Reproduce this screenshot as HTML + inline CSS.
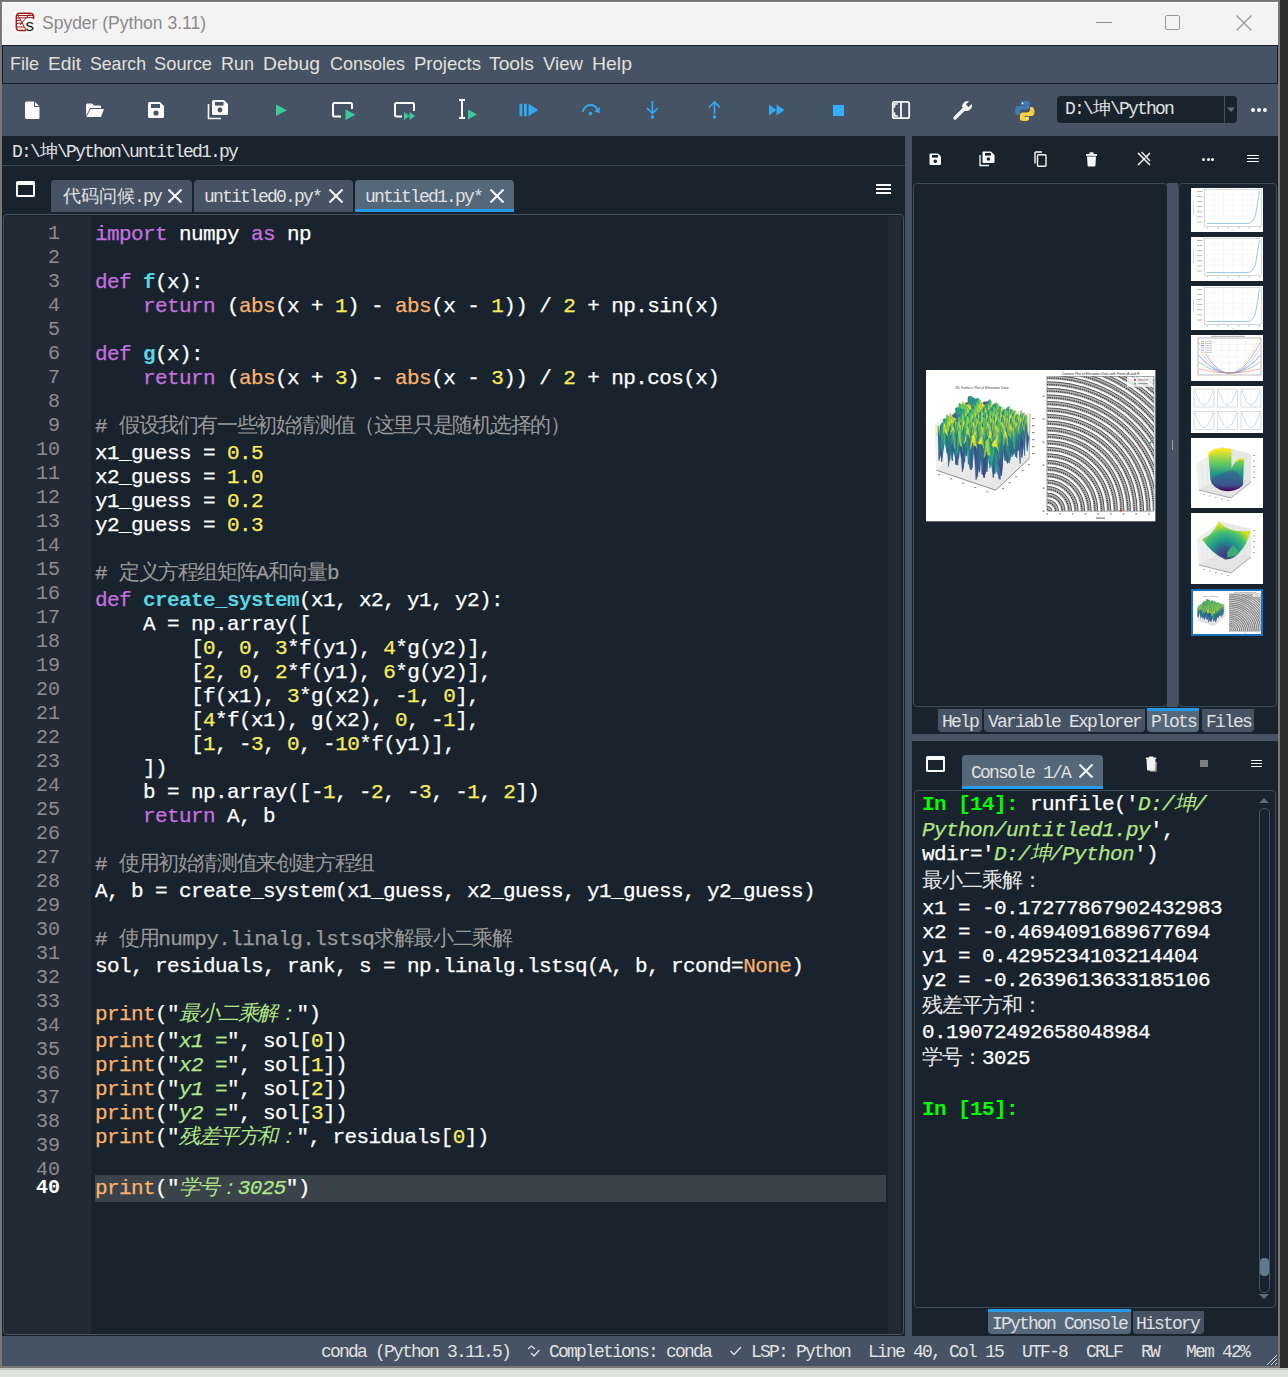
<!DOCTYPE html><html><head><meta charset="utf-8"><style>
*{margin:0;padding:0;box-sizing:border-box}
html,body{width:1288px;height:1377px;overflow:hidden;background:#dfe2df;position:relative;font-family:"Liberation Sans",sans-serif}
.a{position:absolute}
.m{font-family:"Liberation Mono",monospace;white-space:pre}
.cj{display:inline-block;text-align:center;line-height:1px;overflow:visible;-webkit-text-stroke:0}
.code{position:absolute;left:95px;font-family:"Liberation Mono",monospace;font-size:21px;letter-spacing:-0.6px;line-height:24px;white-space:pre;color:#fff;-webkit-text-stroke:0.25px currentColor}
.ln{position:absolute;right:0;font-family:"Liberation Mono",monospace;font-size:20px;line-height:24px;color:#8c8c8c;white-space:pre}
.ser{font-family:"Liberation Mono",monospace;white-space:pre;color:#e0e1e3;font-size:18px;letter-spacing:-1.8px;line-height:20px}
svg{position:absolute;overflow:visible}
</style></head><body>
<svg width="0" height="0" style="position:absolute"><defs><g id="surf" stroke-width="0.3"><path d="M43.1 35.9L45.0 41.4L46.2 43.2L44.2 48.3Z" fill="#228d8c" stroke="#228d8c" stroke-width="0.3"/><path d="M42.0 26.9L43.9 26.1L45.0 41.4L43.1 35.9Z" fill="#97d547" stroke="#97d547" stroke-width="0.3"/><path d="M45.0 41.4L47.0 42.0L48.1 43.9L46.2 43.2Z" fill="#219789" stroke="#219789" stroke-width="0.3"/><path d="M40.8 63.3L42.8 57.0L43.9 26.1L42.0 26.9Z" fill="#277f8d" stroke="#277f8d" stroke-width="0.3"/><path d="M43.9 26.1L45.9 26.7L47.0 42.0L45.0 41.4Z" fill="#85d24d" stroke="#85d24d" stroke-width="0.3"/><path d="M47.0 42.0L49.0 39.3L50.1 48.6L48.1 43.9Z" fill="#21908c" stroke="#21908c" stroke-width="0.3"/><path d="M39.7 32.4L41.7 36.5L42.8 57.0L40.8 63.3Z" fill="#2d6f8d" stroke="#2d6f8d" stroke-width="0.3"/><path d="M42.8 57.0L44.8 57.6L45.9 26.7L43.9 26.1Z" fill="#21938a" stroke="#21938a" stroke-width="0.3"/><path d="M45.9 26.7L47.9 28.3L49.0 39.3L47.0 42.0Z" fill="#93d548" stroke="#93d548" stroke-width="0.3"/><path d="M49.0 39.3L50.9 40.1L52.1 49.2L50.1 48.6Z" fill="#218f8c" stroke="#218f8c" stroke-width="0.3"/><path d="M38.6 34.9L40.6 32.5L41.7 36.5L39.7 32.4Z" fill="#f3e528" stroke="#f3e528" stroke-width="0.3"/><path d="M41.7 36.5L43.7 37.3L44.8 57.6L42.8 57.0Z" fill="#26808d" stroke="#26808d" stroke-width="0.3"/><path d="M44.8 57.6L46.7 62.7L47.9 28.3L45.9 26.7Z" fill="#24878c" stroke="#24878c" stroke-width="0.3"/><path d="M47.9 28.3L49.8 28.9L50.9 40.1L49.0 39.3Z" fill="#b7db3c" stroke="#b7db3c" stroke-width="0.3"/><path d="M50.9 40.1L52.9 48.2L54.0 42.1L52.1 49.2Z" fill="#218f8c" stroke="#218f8c" stroke-width="0.3"/><path d="M37.5 63.3L39.4 71.7L40.6 32.5L38.6 34.9Z" fill="#34608d" stroke="#34608d" stroke-width="0.3"/><path d="M40.6 32.5L42.5 33.1L43.7 37.3L41.7 36.5Z" fill="#f0e429" stroke="#f0e429" stroke-width="0.3"/><path d="M43.7 37.3L45.6 35.6L46.7 62.7L44.8 57.6Z" fill="#2a768d" stroke="#2a768d" stroke-width="0.3"/><path d="M46.7 62.7L48.7 62.9L49.8 28.9L47.9 28.3Z" fill="#26818d" stroke="#26818d" stroke-width="0.3"/><path d="M49.8 28.9L51.8 28.2L52.9 48.2L50.9 40.1Z" fill="#69c95a" stroke="#69c95a" stroke-width="0.3"/><path d="M52.9 48.2L54.9 60.9L56.0 34.5L54.0 42.1Z" fill="#287c8d" stroke="#287c8d" stroke-width="0.3"/><path d="M36.4 31.4L38.3 34.1L39.4 71.7L37.5 63.3Z" fill="#30698d" stroke="#30698d" stroke-width="0.3"/><path d="M39.4 71.7L41.4 72.7L42.5 33.1L40.6 32.5Z" fill="#38588b" stroke="#38588b" stroke-width="0.3"/><path d="M42.5 33.1L44.5 35.5L45.6 35.6L43.7 37.3Z" fill="#f3e528" stroke="#f3e528" stroke-width="0.3"/><path d="M45.6 35.6L47.6 36.6L48.7 62.9L46.7 62.7Z" fill="#2b738d" stroke="#2b738d" stroke-width="0.3"/><path d="M48.7 62.9L50.7 53.9L51.8 28.2L49.8 28.9Z" fill="#218f8c" stroke="#218f8c" stroke-width="0.3"/><path d="M51.8 28.2L53.8 30.0L54.9 60.9L52.9 48.2Z" fill="#219789" stroke="#219789" stroke-width="0.3"/><path d="M54.9 60.9L56.8 69.9L58.0 31.7L56.0 34.5Z" fill="#33618d" stroke="#33618d" stroke-width="0.3"/><path d="M35.2 45.4L37.2 41.5L38.3 34.1L36.4 31.4Z" fill="#bbdc3a" stroke="#bbdc3a" stroke-width="0.3"/><path d="M38.3 34.1L40.3 34.9L41.4 72.7L39.4 71.7Z" fill="#37598b" stroke="#37598b" stroke-width="0.3"/><path d="M41.4 72.7L43.4 68.6L44.5 35.5L42.5 33.1Z" fill="#365c8c" stroke="#365c8c" stroke-width="0.3"/><path d="M44.5 35.5L46.5 35.8L47.6 36.6L45.6 35.6Z" fill="#fde725" stroke="#fde725" stroke-width="0.3"/><path d="M47.6 36.6L49.6 43.4L50.7 53.9L48.7 62.9Z" fill="#29798d" stroke="#29798d" stroke-width="0.3"/><path d="M50.7 53.9L52.6 43.8L53.8 30.0L51.8 28.2Z" fill="#4bbb6b" stroke="#4bbb6b" stroke-width="0.3"/><path d="M53.8 30.0L55.7 33.0L56.8 69.9L54.9 60.9Z" fill="#2f6c8d" stroke="#2f6c8d" stroke-width="0.3"/><path d="M56.8 69.9L58.8 71.7L59.9 31.9L58.0 31.7Z" fill="#38578b" stroke="#38578b" stroke-width="0.3"/><path d="M34.1 55.1L36.1 62.0L37.2 41.5L35.2 45.4Z" fill="#25858c" stroke="#25858c" stroke-width="0.3"/><path d="M37.2 41.5L39.2 41.9L40.3 34.9L38.3 34.1Z" fill="#e9e32b" stroke="#e9e32b" stroke-width="0.3"/><path d="M40.3 34.9L42.3 34.3L43.4 68.6L41.4 72.7Z" fill="#33618d" stroke="#33618d" stroke-width="0.3"/><path d="M43.4 68.6L45.3 70.3L46.5 35.8L44.5 35.5Z" fill="#31678d" stroke="#31678d" stroke-width="0.3"/><path d="M46.5 35.8L48.4 32.8L49.6 43.4L47.6 36.6Z" fill="#ccde35" stroke="#ccde35" stroke-width="0.3"/><path d="M49.6 43.4L51.5 54.8L52.6 43.8L50.7 53.9Z" fill="#228d8c" stroke="#228d8c" stroke-width="0.3"/><path d="M52.6 43.8L54.6 39.4L55.7 33.0L53.8 30.0Z" fill="#c3dd38" stroke="#c3dd38" stroke-width="0.3"/><path d="M55.7 33.0L57.7 34.3L58.8 71.7L56.8 69.9Z" fill="#38588b" stroke="#38588b" stroke-width="0.3"/><path d="M58.8 71.7L60.8 67.7L61.9 31.3L59.9 31.9Z" fill="#345f8d" stroke="#345f8d" stroke-width="0.3"/><path d="M33.0 33.2L35.0 34.3L36.1 62.0L34.1 55.1Z" fill="#21a086" stroke="#21a086" stroke-width="0.3"/><path d="M36.1 62.0L38.1 63.3L39.2 41.9L37.2 41.5Z" fill="#26828d" stroke="#26828d" stroke-width="0.3"/><path d="M39.2 41.9L41.1 44.9L42.3 34.3L40.3 34.9Z" fill="#d6e031" stroke="#d6e031" stroke-width="0.3"/><path d="M42.3 34.3L44.2 35.3L45.3 70.3L43.4 68.6Z" fill="#2d6f8d" stroke="#2d6f8d" stroke-width="0.3"/><path d="M45.3 70.3L47.3 66.9L48.4 32.8L46.5 35.8Z" fill="#2d718d" stroke="#2d718d" stroke-width="0.3"/><path d="M48.4 32.8L50.4 32.0L51.5 54.8L49.6 43.4Z" fill="#54bf67" stroke="#54bf67" stroke-width="0.3"/><path d="M51.5 54.8L53.5 63.2L54.6 39.4L52.6 43.8Z" fill="#277f8d" stroke="#277f8d" stroke-width="0.3"/><path d="M54.6 39.4L56.6 39.0L57.7 34.3L55.7 33.0Z" fill="#f8e626" stroke="#f8e626" stroke-width="0.3"/><path d="M57.7 34.3L59.7 36.7L60.8 67.7L58.8 71.7Z" fill="#37598b" stroke="#37598b" stroke-width="0.3"/><path d="M60.8 67.7L62.7 55.4L63.9 29.5L61.9 31.3Z" fill="#25848d" stroke="#25848d" stroke-width="0.3"/><path d="M31.9 58.1L33.8 52.9L35.0 34.3L33.0 33.2Z" fill="#48b96d" stroke="#48b96d" stroke-width="0.3"/><path d="M35.0 34.3L36.9 35.1L38.1 63.3L36.1 62.0Z" fill="#219789" stroke="#219789" stroke-width="0.3"/><path d="M38.1 63.3L40.0 60.6L41.1 44.9L39.2 41.9Z" fill="#25838d" stroke="#25838d" stroke-width="0.3"/><path d="M41.1 44.9L43.1 44.7L44.2 35.3L42.3 34.3Z" fill="#d3e032" stroke="#d3e032" stroke-width="0.3"/><path d="M44.2 35.3L46.2 40.5L47.3 66.9L45.3 70.3Z" fill="#2e6c8d" stroke="#2e6c8d" stroke-width="0.3"/><path d="M47.3 66.9L49.3 54.2L50.4 32.0L48.4 32.8Z" fill="#21938b" stroke="#21938b" stroke-width="0.3"/><path d="M50.4 32.0L52.4 33.6L53.5 63.2L51.5 54.8Z" fill="#219889" stroke="#219889" stroke-width="0.3"/><path d="M53.5 63.2L55.5 66.1L56.6 39.0L54.6 39.4Z" fill="#2a768d" stroke="#2a768d" stroke-width="0.3"/><path d="M56.6 39.0L58.5 37.4L59.7 36.7L57.7 34.3Z" fill="#fde725" stroke="#fde725" stroke-width="0.3"/><path d="M59.7 36.7L61.6 45.3L62.7 55.4L60.8 67.7Z" fill="#2e6e8d" stroke="#2e6e8d" stroke-width="0.3"/><path d="M62.7 55.4L64.7 41.8L65.8 32.1L63.9 29.5Z" fill="#51be68" stroke="#51be68" stroke-width="0.3"/><path d="M30.8 48.9L32.7 54.8L33.8 52.9L31.9 58.1Z" fill="#21908c" stroke="#21908c" stroke-width="0.3"/><path d="M33.8 52.9L35.8 52.9L36.9 35.1L35.0 34.3Z" fill="#78d051" stroke="#78d051" stroke-width="0.3"/><path d="M36.9 35.1L38.9 35.4L40.0 60.6L38.1 63.3Z" fill="#219a88" stroke="#219a88" stroke-width="0.3"/><path d="M40.0 60.6L42.0 62.8L43.1 44.7L41.1 44.9Z" fill="#24868c" stroke="#24868c" stroke-width="0.3"/><path d="M43.1 44.7L45.1 39.4L46.2 40.5L44.2 35.3Z" fill="#e4e22d" stroke="#e4e22d" stroke-width="0.3"/><path d="M46.2 40.5L48.2 50.5L49.3 54.2L47.3 66.9Z" fill="#29798d" stroke="#29798d" stroke-width="0.3"/><path d="M49.3 54.2L51.2 48.0L52.4 33.6L50.4 32.0Z" fill="#68c85b" stroke="#68c85b" stroke-width="0.3"/><path d="M52.4 33.6L54.3 34.9L55.5 66.1L53.5 63.2Z" fill="#24878c" stroke="#24878c" stroke-width="0.3"/><path d="M55.5 66.1L57.4 72.0L58.5 37.4L56.6 39.0Z" fill="#31668d" stroke="#31668d" stroke-width="0.3"/><path d="M58.5 37.4L60.5 33.5L61.6 45.3L59.7 36.7Z" fill="#cade36" stroke="#cade36" stroke-width="0.3"/><path d="M61.6 45.3L63.6 61.8L64.7 41.8L62.7 55.4Z" fill="#26818d" stroke="#26818d" stroke-width="0.3"/><path d="M64.7 41.8L66.7 35.2L67.8 38.8L65.8 32.1Z" fill="#eae32b" stroke="#eae32b" stroke-width="0.3"/><path d="M29.6 38.0L31.6 37.4L32.7 54.8L30.8 48.9Z" fill="#7cd14f" stroke="#7cd14f" stroke-width="0.3"/><path d="M32.7 54.8L34.7 56.2L35.8 52.9L33.8 52.9Z" fill="#219789" stroke="#219789" stroke-width="0.3"/><path d="M35.8 52.9L37.8 56.1L38.9 35.4L36.9 35.1Z" fill="#6ac95a" stroke="#6ac95a" stroke-width="0.3"/><path d="M38.9 35.4L40.9 36.2L42.0 62.8L40.0 60.6Z" fill="#219f86" stroke="#219f86" stroke-width="0.3"/><path d="M42.0 62.8L44.0 75.3L45.1 39.4L43.1 44.7Z" fill="#30698d" stroke="#30698d" stroke-width="0.3"/><path d="M45.1 39.4L47.0 35.7L48.2 50.5L46.2 40.5Z" fill="#aad940" stroke="#aad940" stroke-width="0.3"/><path d="M48.2 50.5L50.1 58.7L51.2 48.0L49.3 54.2Z" fill="#228e8c" stroke="#228e8c" stroke-width="0.3"/><path d="M51.2 48.0L53.2 46.6L54.3 34.9L52.4 33.6Z" fill="#b7db3c" stroke="#b7db3c" stroke-width="0.3"/><path d="M54.3 34.9L56.3 37.1L57.4 72.0L55.5 66.1Z" fill="#2c738d" stroke="#2c738d" stroke-width="0.3"/><path d="M57.4 72.0L59.4 64.2L60.5 33.5L58.5 37.4Z" fill="#2b758d" stroke="#2b758d" stroke-width="0.3"/><path d="M60.5 33.5L62.5 34.0L63.6 61.8L61.6 45.3Z" fill="#21a784" stroke="#21a784" stroke-width="0.3"/><path d="M63.6 61.8L65.6 72.1L66.7 35.2L64.7 41.8Z" fill="#2f6b8d" stroke="#2f6b8d" stroke-width="0.3"/><path d="M66.7 35.2L68.6 33.7L69.8 43.7L67.8 38.8Z" fill="#dae130" stroke="#dae130" stroke-width="0.3"/><path d="M28.5 72.8L30.5 66.3L31.6 37.4L29.6 38.0Z" fill="#23888c" stroke="#23888c" stroke-width="0.3"/><path d="M31.6 37.4L33.6 37.9L34.7 56.2L32.7 54.8Z" fill="#68c85b" stroke="#68c85b" stroke-width="0.3"/><path d="M34.7 56.2L36.7 54.5L37.8 56.1L35.8 52.9Z" fill="#21968a" stroke="#21968a" stroke-width="0.3"/><path d="M37.8 56.1L39.7 55.0L40.9 36.2L38.9 35.4Z" fill="#68c85b" stroke="#68c85b" stroke-width="0.3"/><path d="M40.9 36.2L42.8 39.6L44.0 75.3L42.0 62.8Z" fill="#287a8d" stroke="#287a8d" stroke-width="0.3"/><path d="M44.0 75.3L45.9 65.2L47.0 35.7L45.1 39.4Z" fill="#2a768d" stroke="#2a768d" stroke-width="0.3"/><path d="M47.0 35.7L49.0 35.8L50.1 58.7L48.2 50.5Z" fill="#4bbb6b" stroke="#4bbb6b" stroke-width="0.3"/><path d="M50.1 58.7L52.1 62.4L53.2 46.6L51.2 48.0Z" fill="#24878c" stroke="#24878c" stroke-width="0.3"/><path d="M53.2 46.6L55.2 43.8L56.3 37.1L54.3 34.9Z" fill="#d7e031" stroke="#d7e031" stroke-width="0.3"/><path d="M56.3 37.1L58.3 44.8L59.4 64.2L57.4 72.0Z" fill="#2f6b8d" stroke="#2f6b8d" stroke-width="0.3"/><path d="M59.4 64.2L61.4 48.2L62.5 34.0L60.5 33.5Z" fill="#21a485" stroke="#21a485" stroke-width="0.3"/><path d="M62.5 34.0L64.4 39.8L65.6 72.1L63.6 61.8Z" fill="#2b758d" stroke="#2b758d" stroke-width="0.3"/><path d="M65.6 72.1L67.5 64.5L68.6 33.7L66.7 35.2Z" fill="#2a768d" stroke="#2a768d" stroke-width="0.3"/><path d="M68.6 33.7L70.6 33.2L71.7 49.4L69.8 43.7Z" fill="#97d547" stroke="#97d547" stroke-width="0.3"/><path d="M27.4 44.9L29.4 49.6L30.5 66.3L28.5 72.8Z" fill="#2a768d" stroke="#2a768d" stroke-width="0.3"/><path d="M30.5 66.3L32.5 65.8L33.6 37.9L31.6 37.4Z" fill="#219e87" stroke="#219e87" stroke-width="0.3"/><path d="M33.6 37.9L35.5 38.9L36.7 54.5L34.7 56.2Z" fill="#6cca58" stroke="#6cca58" stroke-width="0.3"/><path d="M36.7 54.5L38.6 57.2L39.7 55.0L37.8 56.1Z" fill="#21968a" stroke="#21968a" stroke-width="0.3"/><path d="M39.7 55.0L41.7 47.3L42.8 39.6L40.9 36.2Z" fill="#92d548" stroke="#92d548" stroke-width="0.3"/><path d="M42.8 39.6L44.8 47.9L45.9 65.2L44.0 75.3Z" fill="#2f6b8d" stroke="#2f6b8d" stroke-width="0.3"/><path d="M45.9 65.2L47.9 56.9L49.0 35.8L47.0 35.7Z" fill="#21a385" stroke="#21a385" stroke-width="0.3"/><path d="M49.0 35.8L51.0 36.8L52.1 62.4L50.1 58.7Z" fill="#21a485" stroke="#21a485" stroke-width="0.3"/><path d="M52.1 62.4L54.1 68.9L55.2 43.8L53.2 46.6Z" fill="#297a8d" stroke="#297a8d" stroke-width="0.3"/><path d="M55.2 43.8L57.1 37.9L58.3 44.8L56.3 37.1Z" fill="#ede42a" stroke="#ede42a" stroke-width="0.3"/><path d="M58.3 44.8L60.2 60.9L61.4 48.2L59.4 64.2Z" fill="#277e8d" stroke="#277e8d" stroke-width="0.3"/><path d="M61.4 48.2L63.3 39.8L64.4 39.8L62.5 34.0Z" fill="#ccde35" stroke="#ccde35" stroke-width="0.3"/><path d="M64.4 39.8L66.4 45.0L67.5 64.5L65.6 72.1Z" fill="#31658d" stroke="#31658d" stroke-width="0.3"/><path d="M67.5 64.5L69.5 57.9L70.6 33.2L68.6 33.7Z" fill="#219989" stroke="#219989" stroke-width="0.3"/><path d="M70.6 33.2L72.6 35.1L73.7 63.5L71.7 49.4Z" fill="#21a186" stroke="#21a186" stroke-width="0.3"/><path d="M29.4 49.6L31.3 51.2L32.5 65.8L30.5 66.3Z" fill="#24868c" stroke="#24868c" stroke-width="0.3"/><path d="M32.5 65.8L34.4 68.7L35.5 38.9L33.6 37.9Z" fill="#219b88" stroke="#219b88" stroke-width="0.3"/><path d="M26.3 45.5L28.2 43.2L29.4 49.6L27.4 44.9Z" fill="#e6e32c" stroke="#e6e32c" stroke-width="0.3"/><path d="M35.5 38.9L37.5 39.2L38.6 57.2L36.7 54.5Z" fill="#6fcc56" stroke="#6fcc56" stroke-width="0.3"/><path d="M38.6 57.2L40.6 69.0L41.7 47.3L39.7 55.0Z" fill="#26828d" stroke="#26828d" stroke-width="0.3"/><path d="M41.7 47.3L43.7 40.6L44.8 47.9L42.8 39.6Z" fill="#e4e22d" stroke="#e4e22d" stroke-width="0.3"/><path d="M44.8 47.9L46.8 55.9L47.9 56.9L45.9 65.2Z" fill="#25848d" stroke="#25848d" stroke-width="0.3"/><path d="M47.9 56.9L49.9 54.3L51.0 36.8L49.0 35.8Z" fill="#6ac959" stroke="#6ac959" stroke-width="0.3"/><path d="M51.0 36.8L52.9 38.6L54.1 68.9L52.1 62.4Z" fill="#21918b" stroke="#21918b" stroke-width="0.3"/><path d="M54.1 68.9L56.0 72.0L57.1 37.9L55.2 43.8Z" fill="#29788d" stroke="#29788d" stroke-width="0.3"/><path d="M57.1 37.9L59.1 36.6L60.2 60.9L58.3 44.8Z" fill="#4cbb6b" stroke="#4cbb6b" stroke-width="0.3"/><path d="M60.2 60.9L62.2 78.7L63.3 39.8L61.4 48.2Z" fill="#355e8c" stroke="#355e8c" stroke-width="0.3"/><path d="M63.3 39.8L65.3 37.4L66.4 45.0L64.4 39.8Z" fill="#f2e528" stroke="#f2e528" stroke-width="0.3"/><path d="M66.4 45.0L68.4 51.3L69.5 57.9L67.5 64.5Z" fill="#287c8d" stroke="#287c8d" stroke-width="0.3"/><path d="M69.5 57.9L71.5 46.1L72.6 35.1L70.6 33.2Z" fill="#5bc262" stroke="#5bc262" stroke-width="0.3"/><path d="M72.6 35.1L74.5 46.0L75.7 63.5L73.7 63.5Z" fill="#25858c" stroke="#25858c" stroke-width="0.3"/><path d="M31.3 51.2L33.3 50.5L34.4 68.7L32.5 65.8Z" fill="#25838d" stroke="#25838d" stroke-width="0.3"/><path d="M25.2 77.0L27.1 81.8L28.2 43.2L26.3 45.5Z" fill="#32658d" stroke="#32658d" stroke-width="0.3"/><path d="M28.2 43.2L30.2 43.3L31.3 51.2L29.4 49.6Z" fill="#d8e031" stroke="#d8e031" stroke-width="0.3"/><path d="M34.4 68.7L36.4 66.3L37.5 39.2L35.5 38.9Z" fill="#219c88" stroke="#219c88" stroke-width="0.3"/><path d="M37.5 39.2L39.5 40.5L40.6 69.0L38.6 57.2Z" fill="#21a086" stroke="#21a086" stroke-width="0.3"/><path d="M40.6 69.0L42.6 76.1L43.7 40.6L41.7 47.3Z" fill="#2b758d" stroke="#2b758d" stroke-width="0.3"/><path d="M43.7 40.6L45.6 39.1L46.8 55.9L44.8 47.9Z" fill="#92d548" stroke="#92d548" stroke-width="0.3"/><path d="M46.8 55.9L48.7 60.4L49.9 54.3L47.9 56.9Z" fill="#21908c" stroke="#21908c" stroke-width="0.3"/><path d="M49.9 54.3L51.8 50.0L52.9 38.6L51.0 36.8Z" fill="#9fd744" stroke="#9fd744" stroke-width="0.3"/><path d="M52.9 38.6L54.9 45.7L56.0 72.0L54.1 68.9Z" fill="#297a8d" stroke="#297a8d" stroke-width="0.3"/><path d="M56.0 72.0L58.0 53.6L59.1 36.6L57.1 37.9Z" fill="#21958a" stroke="#21958a" stroke-width="0.3"/><path d="M59.1 36.6L61.1 41.9L62.2 78.7L60.2 60.9Z" fill="#2c728d" stroke="#2c728d" stroke-width="0.3"/><path d="M62.2 78.7L64.2 69.3L65.3 37.4L63.3 39.8Z" fill="#31668d" stroke="#31668d" stroke-width="0.3"/><path d="M65.3 37.4L67.3 36.4L68.4 51.3L66.4 45.0Z" fill="#add93f" stroke="#add93f" stroke-width="0.3"/><path d="M68.4 51.3L70.3 66.4L71.5 46.1L69.5 57.9Z" fill="#287c8d" stroke="#287c8d" stroke-width="0.3"/><path d="M71.5 46.1L73.4 36.6L74.5 46.0L72.6 35.1Z" fill="#dde12f" stroke="#dde12f" stroke-width="0.3"/><path d="M74.5 46.0L76.5 63.5L77.6 47.1L75.7 63.5Z" fill="#287b8d" stroke="#287b8d" stroke-width="0.3"/><path d="M24.0 43.5L26.0 46.7L27.1 81.8L25.2 77.0Z" fill="#30698d" stroke="#30698d" stroke-width="0.3"/><path d="M27.1 81.8L29.1 80.1L30.2 43.3L28.2 43.2Z" fill="#31678d" stroke="#31678d" stroke-width="0.3"/><path d="M30.2 43.3L32.2 44.5L33.3 50.5L31.3 51.2Z" fill="#dae130" stroke="#dae130" stroke-width="0.3"/><path d="M33.3 50.5L35.3 53.5L36.4 66.3L34.4 68.7Z" fill="#25838d" stroke="#25838d" stroke-width="0.3"/><path d="M36.4 66.3L38.4 55.9L39.5 40.5L37.5 39.2Z" fill="#3cb474" stroke="#3cb474" stroke-width="0.3"/><path d="M39.5 40.5L41.4 47.0L42.6 76.1L40.6 69.0Z" fill="#287b8d" stroke="#287b8d" stroke-width="0.3"/><path d="M42.6 76.1L44.5 65.4L45.6 39.1L43.7 40.6Z" fill="#24878c" stroke="#24878c" stroke-width="0.3"/><path d="M45.6 39.1L47.6 39.6L48.7 60.4L46.8 55.9Z" fill="#58c164" stroke="#58c164" stroke-width="0.3"/><path d="M48.7 60.4L50.7 67.9L51.8 50.0L49.9 54.3Z" fill="#26838d" stroke="#26838d" stroke-width="0.3"/><path d="M51.8 50.0L53.8 42.2L54.9 45.7L52.9 38.6Z" fill="#e1e22e" stroke="#e1e22e" stroke-width="0.3"/><path d="M54.9 45.7L56.9 61.9L58.0 53.6L56.0 72.0Z" fill="#2c738d" stroke="#2c738d" stroke-width="0.3"/><path d="M58.0 53.6L60.0 43.7L61.1 41.9L59.1 36.6Z" fill="#b5da3d" stroke="#b5da3d" stroke-width="0.3"/><path d="M61.1 41.9L63.0 47.6L64.2 69.3L62.2 78.7Z" fill="#375a8b" stroke="#375a8b" stroke-width="0.3"/><path d="M64.2 69.3L66.1 61.2L67.3 36.4L65.3 37.4Z" fill="#21948a" stroke="#21948a" stroke-width="0.3"/><path d="M67.3 36.4L69.2 38.4L70.3 66.4L68.4 51.3Z" fill="#21a285" stroke="#21a285" stroke-width="0.3"/><path d="M70.3 66.4L72.3 65.5L73.4 36.6L71.5 46.1Z" fill="#24888c" stroke="#24888c" stroke-width="0.3"/><path d="M73.4 36.6L75.4 37.2L76.5 63.5L74.5 46.0Z" fill="#30ae7b" stroke="#30ae7b" stroke-width="0.3"/><path d="M76.5 63.5L78.5 78.6L79.6 40.4L77.6 47.1Z" fill="#37598b" stroke="#37598b" stroke-width="0.3"/><path d="M22.9 55.6L24.9 51.5L26.0 46.7L24.0 43.5Z" fill="#cddf34" stroke="#cddf34" stroke-width="0.3"/><path d="M26.0 46.7L28.0 48.3L29.1 80.1L27.1 81.8Z" fill="#33618d" stroke="#33618d" stroke-width="0.3"/><path d="M29.1 80.1L31.1 82.3L32.2 44.5L30.2 43.3Z" fill="#2f6a8d" stroke="#2f6a8d" stroke-width="0.3"/><path d="M32.2 44.5L34.1 43.9L35.3 53.5L33.3 50.5Z" fill="#d1df33" stroke="#d1df33" stroke-width="0.3"/><path d="M35.3 53.5L37.2 65.0L38.4 55.9L36.4 66.3Z" fill="#23898c" stroke="#23898c" stroke-width="0.3"/><path d="M38.4 55.9L40.3 46.2L41.4 47.0L39.5 40.5Z" fill="#bcdc3a" stroke="#bcdc3a" stroke-width="0.3"/><path d="M41.4 47.0L43.4 55.0L44.5 65.4L42.6 76.1Z" fill="#2d708d" stroke="#2d708d" stroke-width="0.3"/><path d="M44.5 65.4L46.5 61.0L47.6 39.6L45.6 39.1Z" fill="#32af7a" stroke="#32af7a" stroke-width="0.3"/><path d="M47.6 39.6L49.6 41.1L50.7 67.9L48.7 60.4Z" fill="#21a285" stroke="#21a285" stroke-width="0.3"/><path d="M50.7 67.9L52.7 77.9L53.8 42.2L51.8 50.0Z" fill="#2d6f8d" stroke="#2d6f8d" stroke-width="0.3"/><path d="M53.8 42.2L55.8 39.6L56.9 61.9L54.9 45.7Z" fill="#63c65d" stroke="#63c65d" stroke-width="0.3"/><path d="M56.9 61.9L58.8 80.7L60.0 43.7L58.0 53.6Z" fill="#34618d" stroke="#34618d" stroke-width="0.3"/><path d="M60.0 43.7L61.9 40.6L63.0 47.6L61.1 41.9Z" fill="#fae625" stroke="#fae625" stroke-width="0.3"/><path d="M63.0 47.6L65.0 55.0L66.1 61.2L64.2 69.3Z" fill="#2a778d" stroke="#2a778d" stroke-width="0.3"/><path d="M66.1 61.2L68.1 48.4L69.2 38.4L67.3 36.4Z" fill="#5dc361" stroke="#5dc361" stroke-width="0.3"/><path d="M69.2 38.4L71.2 50.5L72.3 65.5L70.3 66.4Z" fill="#25858c" stroke="#25858c" stroke-width="0.3"/><path d="M72.3 65.5L74.3 48.5L75.4 37.2L73.4 36.6Z" fill="#2dad7d" stroke="#2dad7d" stroke-width="0.3"/><path d="M75.4 37.2L77.4 42.6L78.5 78.6L76.5 63.5Z" fill="#2f6b8d" stroke="#2f6b8d" stroke-width="0.3"/><path d="M78.5 78.6L80.4 67.3L81.6 37.2L79.6 40.4Z" fill="#31668d" stroke="#31668d" stroke-width="0.3"/><path d="M24.9 51.5L26.9 50.8L28.0 48.3L26.0 46.7Z" fill="#fbe625" stroke="#fbe625" stroke-width="0.3"/><path d="M28.0 48.3L29.9 48.6L31.1 82.3L29.1 80.1Z" fill="#33638d" stroke="#33638d" stroke-width="0.3"/><path d="M31.1 82.3L33.0 77.7L34.1 43.9L32.2 44.5Z" fill="#2d708d" stroke="#2d708d" stroke-width="0.3"/><path d="M34.1 43.9L36.1 42.9L37.2 65.0L35.3 53.5Z" fill="#5cc362" stroke="#5cc362" stroke-width="0.3"/><path d="M37.2 65.0L39.2 84.3L40.3 46.2L38.4 55.9Z" fill="#32638d" stroke="#32638d" stroke-width="0.3"/><path d="M40.3 46.2L42.3 43.0L43.4 55.0L41.4 47.0Z" fill="#cade35" stroke="#cade35" stroke-width="0.3"/><path d="M43.4 55.0L45.4 60.5L46.5 61.0L44.5 65.4Z" fill="#23898c" stroke="#23898c" stroke-width="0.3"/><path d="M46.5 61.0L48.5 54.9L49.6 41.1L47.6 39.6Z" fill="#72cd55" stroke="#72cd55" stroke-width="0.3"/><path d="M49.6 41.1L51.5 47.9L52.7 77.9L50.7 67.9Z" fill="#29798d" stroke="#29798d" stroke-width="0.3"/><path d="M52.7 77.9L54.6 57.4L55.8 39.6L53.8 42.2Z" fill="#228c8c" stroke="#228c8c" stroke-width="0.3"/><path d="M21.8 68.4L23.8 76.4L24.9 51.5L22.9 55.6Z" fill="#277f8d" stroke="#277f8d" stroke-width="0.3"/><path d="M55.8 39.6L57.7 45.1L58.8 80.7L56.9 61.9Z" fill="#29788d" stroke="#29788d" stroke-width="0.3"/><path d="M58.8 80.7L60.8 71.6L61.9 40.6L60.0 43.7Z" fill="#306a8d" stroke="#306a8d" stroke-width="0.3"/><path d="M61.9 40.6L63.9 39.5L65.0 55.0L63.0 47.6Z" fill="#a9d940" stroke="#a9d940" stroke-width="0.3"/><path d="M65.0 55.0L67.0 71.9L68.1 48.4L66.1 61.2Z" fill="#2a758d" stroke="#2a758d" stroke-width="0.3"/><path d="M68.1 48.4L70.1 39.2L71.2 50.5L69.2 38.4Z" fill="#d4e032" stroke="#d4e032" stroke-width="0.3"/><path d="M71.2 50.5L73.2 70.1L74.3 48.5L72.3 65.5Z" fill="#2a758d" stroke="#2a758d" stroke-width="0.3"/><path d="M74.3 48.5L76.2 41.8L77.4 42.6L75.4 37.2Z" fill="#f1e528" stroke="#f1e528" stroke-width="0.3"/><path d="M77.4 42.6L79.3 49.7L80.4 67.3L78.5 78.6Z" fill="#38578b" stroke="#38578b" stroke-width="0.3"/><path d="M80.4 67.3L82.4 52.6L83.5 36.1L81.6 37.2Z" fill="#21a285" stroke="#21a285" stroke-width="0.3"/><path d="M26.9 50.8L28.8 51.6L29.9 48.6L28.0 48.3Z" fill="#fde725" stroke="#fde725" stroke-width="0.3"/><path d="M29.9 48.6L31.9 51.9L33.0 77.7L31.1 82.3Z" fill="#32658d" stroke="#32658d" stroke-width="0.3"/><path d="M33.0 77.7L35.0 64.1L36.1 42.9L34.1 43.9Z" fill="#21948a" stroke="#21948a" stroke-width="0.3"/><path d="M36.1 42.9L38.1 47.8L39.2 84.3L37.2 65.0Z" fill="#29798d" stroke="#29798d" stroke-width="0.3"/><path d="M39.2 84.3L41.2 72.3L42.3 43.0L40.3 46.2Z" fill="#2d6f8d" stroke="#2d6f8d" stroke-width="0.3"/><path d="M42.3 43.0L44.3 42.8L45.4 60.5L43.4 55.0Z" fill="#7fd14f" stroke="#7fd14f" stroke-width="0.3"/><path d="M45.4 60.5L47.3 69.4L48.5 54.9L46.5 61.0Z" fill="#25848c" stroke="#25848c" stroke-width="0.3"/><path d="M48.5 54.9L50.4 45.6L51.5 47.9L49.6 41.1Z" fill="#d3df33" stroke="#d3df33" stroke-width="0.3"/><path d="M51.5 47.9L53.5 65.2L54.6 57.4L52.7 77.9Z" fill="#306a8d" stroke="#306a8d" stroke-width="0.3"/><path d="M20.7 44.8L22.6 46.4L23.8 76.4L21.8 68.4Z" fill="#219689" stroke="#219689" stroke-width="0.3"/><path d="M23.8 76.4L25.7 80.2L26.9 50.8L24.9 51.5Z" fill="#2b748d" stroke="#2b748d" stroke-width="0.3"/><path d="M54.6 57.4L56.6 46.4L57.7 45.1L55.8 39.6Z" fill="#b1da3e" stroke="#b1da3e" stroke-width="0.3"/><path d="M57.7 45.1L59.7 52.0L60.8 71.6L58.8 80.7Z" fill="#355d8c" stroke="#355d8c" stroke-width="0.3"/><path d="M60.8 71.6L62.8 62.0L63.9 39.5L61.9 40.6Z" fill="#219989" stroke="#219989" stroke-width="0.3"/><path d="M63.9 39.5L65.9 42.5L67.0 71.9L65.0 55.0Z" fill="#219b88" stroke="#219b88" stroke-width="0.3"/><path d="M67.0 71.9L68.9 65.0L70.1 39.2L68.1 48.4Z" fill="#24878c" stroke="#24878c" stroke-width="0.3"/><path d="M70.1 39.2L72.0 41.5L73.2 70.1L71.2 50.5Z" fill="#21a186" stroke="#21a186" stroke-width="0.3"/><path d="M73.2 70.1L75.1 75.7L76.2 41.8L74.3 48.5Z" fill="#2e6e8d" stroke="#2e6e8d" stroke-width="0.3"/><path d="M76.2 41.8L78.2 39.1L79.3 49.7L77.4 42.6Z" fill="#e8e32b" stroke="#e8e32b" stroke-width="0.3"/><path d="M79.3 49.7L81.3 65.0L82.4 52.6L80.4 67.3Z" fill="#2a778d" stroke="#2a778d" stroke-width="0.3"/><path d="M82.4 52.6L84.4 39.7L85.5 44.9L83.5 36.1Z" fill="#bfdc39" stroke="#bfdc39" stroke-width="0.3"/><path d="M28.8 51.6L30.8 49.4L31.9 51.9L29.9 48.6Z" fill="#fde725" stroke="#fde725" stroke-width="0.3"/><path d="M31.9 51.9L33.9 63.4L35.0 64.1L33.0 77.7Z" fill="#2a778d" stroke="#2a778d" stroke-width="0.3"/><path d="M35.0 64.1L37.0 51.4L38.1 47.8L36.1 42.9Z" fill="#82d24e" stroke="#82d24e" stroke-width="0.3"/><path d="M41.2 72.3L43.1 65.6L44.3 42.8L42.3 43.0Z" fill="#21a186" stroke="#21a186" stroke-width="0.3"/><path d="M44.3 42.8L46.2 44.1L47.3 69.4L45.4 60.5Z" fill="#28aa80" stroke="#28aa80" stroke-width="0.3"/><path d="M47.3 69.4L49.3 80.6L50.4 45.6L48.5 54.9Z" fill="#2d708d" stroke="#2d708d" stroke-width="0.3"/><path d="M50.4 45.6L52.4 42.9L53.5 65.2L51.5 47.9Z" fill="#63c65d" stroke="#63c65d" stroke-width="0.3"/><path d="M19.6 67.9L21.5 62.1L22.6 46.4L20.7 44.8Z" fill="#5dc361" stroke="#5dc361" stroke-width="0.3"/><path d="M22.6 46.4L24.6 47.8L25.7 80.2L23.8 76.4Z" fill="#25848d" stroke="#25848d" stroke-width="0.3"/><path d="M25.7 80.2L27.7 81.4L28.8 51.6L26.9 50.8Z" fill="#2d708d" stroke="#2d708d" stroke-width="0.3"/><path d="M38.1 47.8L40.0 56.1L41.2 72.3L39.2 84.3Z" fill="#34608d" stroke="#34608d" stroke-width="0.3"/><path d="M53.5 65.2L55.5 83.5L56.6 46.4L54.6 57.4Z" fill="#33628d" stroke="#33628d" stroke-width="0.3"/><path d="M56.6 46.4L58.6 43.0L59.7 52.0L57.7 45.1Z" fill="#f2e528" stroke="#f2e528" stroke-width="0.3"/><path d="M59.7 52.0L61.7 61.1L62.8 62.0L60.8 71.6Z" fill="#2a778d" stroke="#2a778d" stroke-width="0.3"/><path d="M62.8 62.0L64.7 49.0L65.9 42.5L63.9 39.5Z" fill="#75cf53" stroke="#75cf53" stroke-width="0.3"/><path d="M65.9 42.5L67.8 57.4L68.9 65.0L67.0 71.9Z" fill="#277e8d" stroke="#277e8d" stroke-width="0.3"/><path d="M68.9 65.0L70.9 48.3L72.0 41.5L70.1 39.2Z" fill="#56c065" stroke="#56c065" stroke-width="0.3"/><path d="M72.0 41.5L74.0 49.0L75.1 75.7L73.2 70.1Z" fill="#2b748d" stroke="#2b748d" stroke-width="0.3"/><path d="M75.1 75.7L77.1 64.1L78.2 39.1L76.2 41.8Z" fill="#25858c" stroke="#25858c" stroke-width="0.3"/><path d="M78.2 39.1L80.2 40.3L81.3 65.0L79.3 49.7Z" fill="#3db474" stroke="#3db474" stroke-width="0.3"/><path d="M81.3 65.0L83.3 68.9L84.4 39.7L82.4 52.6Z" fill="#24858c" stroke="#24858c" stroke-width="0.3"/><path d="M84.4 39.7L86.3 39.8L87.5 65.0L85.5 44.9Z" fill="#3eb573" stroke="#3eb573" stroke-width="0.3"/><path d="M43.1 65.6L45.1 57.7L46.2 44.1L44.3 42.8Z" fill="#68c85b" stroke="#68c85b" stroke-width="0.3"/><path d="M46.2 44.1L48.2 52.0L49.3 80.6L47.3 69.4Z" fill="#287b8d" stroke="#287b8d" stroke-width="0.3"/><path d="M49.3 80.6L51.3 58.6L52.4 42.9L50.4 45.6Z" fill="#218f8c" stroke="#218f8c" stroke-width="0.3"/><path d="M30.8 49.4L32.8 46.1L33.9 63.4L31.9 51.9Z" fill="#94d547" stroke="#94d547" stroke-width="0.3"/><path d="M33.9 63.4L35.8 83.6L37.0 51.4L35.0 64.1Z" fill="#2e6d8d" stroke="#2e6d8d" stroke-width="0.3"/><path d="M18.4 61.9L20.4 69.1L21.5 62.1L19.6 67.9Z" fill="#21938b" stroke="#21938b" stroke-width="0.3"/><path d="M21.5 62.1L23.5 59.8L24.6 47.8L22.6 46.4Z" fill="#a6d841" stroke="#a6d841" stroke-width="0.3"/><path d="M24.6 47.8L26.6 48.9L27.7 81.4L25.7 80.2Z" fill="#287d8d" stroke="#287d8d" stroke-width="0.3"/><path d="M37.0 51.4L38.9 46.5L40.0 56.1L38.1 47.8Z" fill="#e3e22d" stroke="#e3e22d" stroke-width="0.3"/><path d="M40.0 56.1L42.0 63.2L43.1 65.6L41.2 72.3Z" fill="#277f8d" stroke="#277f8d" stroke-width="0.3"/><path d="M52.4 42.9L54.4 49.9L55.5 83.5L53.5 65.2Z" fill="#2a778d" stroke="#2a778d" stroke-width="0.3"/><path d="M55.5 83.5L57.4 70.6L58.6 43.0L56.6 46.4Z" fill="#2c728d" stroke="#2c728d" stroke-width="0.3"/><path d="M58.6 43.0L60.5 42.6L61.7 61.1L59.7 52.0Z" fill="#82d24e" stroke="#82d24e" stroke-width="0.3"/><path d="M61.7 61.1L63.6 81.2L64.7 49.0L62.8 62.0Z" fill="#32648d" stroke="#32648d" stroke-width="0.3"/><path d="M27.7 81.4L29.7 88.1L30.8 49.4L28.8 51.6Z" fill="#345f8d" stroke="#345f8d" stroke-width="0.3"/><path d="M64.7 49.0L66.7 41.8L67.8 57.4L65.9 42.5Z" fill="#b2da3d" stroke="#b2da3d" stroke-width="0.3"/><path d="M67.8 57.4L69.8 80.6L70.9 48.3L68.9 65.0Z" fill="#33628d" stroke="#33628d" stroke-width="0.3"/><path d="M70.9 48.3L72.9 42.5L74.0 49.0L72.0 41.5Z" fill="#fde725" stroke="#fde725" stroke-width="0.3"/><path d="M74.0 49.0L76.0 58.6L77.1 64.1L75.1 75.7Z" fill="#30688d" stroke="#30688d" stroke-width="0.3"/><path d="M77.1 64.1L79.1 50.2L80.2 40.3L78.2 39.1Z" fill="#59c164" stroke="#59c164" stroke-width="0.3"/><path d="M80.2 40.3L82.1 53.6L83.3 68.9L81.3 65.0Z" fill="#23898c" stroke="#23898c" stroke-width="0.3"/><path d="M83.3 68.9L85.2 48.5L86.3 39.8L84.4 39.7Z" fill="#27aa80" stroke="#27aa80" stroke-width="0.3"/><path d="M86.3 39.8L88.3 48.3L89.4 75.7L87.5 65.0Z" fill="#2a778d" stroke="#2a778d" stroke-width="0.3"/><path d="M45.1 57.7L47.1 47.7L48.2 52.0L46.2 44.1Z" fill="#d9e130" stroke="#d9e130" stroke-width="0.3"/><path d="M48.2 52.0L50.2 72.1L51.3 58.6L49.3 80.6Z" fill="#31678d" stroke="#31678d" stroke-width="0.3"/><path d="M32.8 46.1L34.7 50.2L35.8 83.6L33.9 63.4Z" fill="#238a8c" stroke="#238a8c" stroke-width="0.3"/><path d="M17.3 49.1L19.3 48.7L20.4 69.1L18.4 61.9Z" fill="#62c65e" stroke="#62c65e" stroke-width="0.3"/><path d="M20.4 69.1L22.4 74.2L23.5 59.8L21.5 62.1Z" fill="#238b8c" stroke="#238b8c" stroke-width="0.3"/><path d="M23.5 59.8L25.5 58.9L26.6 48.9L24.6 47.8Z" fill="#cedf34" stroke="#cedf34" stroke-width="0.3"/><path d="M35.8 83.6L37.8 75.8L38.9 46.5L37.0 51.4Z" fill="#29788d" stroke="#29788d" stroke-width="0.3"/><path d="M38.9 46.5L40.9 45.9L42.0 63.2L40.0 56.1Z" fill="#8ed44a" stroke="#8ed44a" stroke-width="0.3"/><path d="M42.0 63.2L44.0 74.5L45.1 57.7L43.1 65.6Z" fill="#277e8d" stroke="#277e8d" stroke-width="0.3"/><path d="M51.3 58.6L53.2 47.6L54.4 49.9L52.4 42.9Z" fill="#cade35" stroke="#cade35" stroke-width="0.3"/><path d="M54.4 49.9L56.3 59.0L57.4 70.6L55.5 83.5Z" fill="#365c8c" stroke="#365c8c" stroke-width="0.3"/><path d="M57.4 70.6L59.4 60.1L60.5 42.6L58.6 43.0Z" fill="#2aab7f" stroke="#2aab7f" stroke-width="0.3"/><path d="M60.5 42.6L62.5 48.3L63.6 81.2L61.7 61.1Z" fill="#25848c" stroke="#25848c" stroke-width="0.3"/><path d="M26.6 48.9L28.5 52.5L29.7 88.1L27.7 81.4Z" fill="#32648d" stroke="#32648d" stroke-width="0.3"/><path d="M29.7 88.1L31.6 70.3L32.8 46.1L30.8 49.4Z" fill="#297a8d" stroke="#297a8d" stroke-width="0.3"/><path d="M63.6 81.2L65.6 61.6L66.7 41.8L64.7 49.0Z" fill="#26828d" stroke="#26828d" stroke-width="0.3"/><path d="M66.7 41.8L68.7 47.8L69.8 80.6L67.8 57.4Z" fill="#24878c" stroke="#24878c" stroke-width="0.3"/><path d="M69.8 80.6L71.8 70.1L72.9 42.5L70.9 48.3Z" fill="#2b748d" stroke="#2b748d" stroke-width="0.3"/><path d="M72.9 42.5L74.8 41.6L76.0 58.6L74.0 49.0Z" fill="#9fd744" stroke="#9fd744" stroke-width="0.3"/><path d="M76.0 58.6L77.9 77.7L79.1 50.2L77.1 64.1Z" fill="#31688d" stroke="#31688d" stroke-width="0.3"/><path d="M79.1 50.2L81.0 41.0L82.1 53.6L80.2 40.3Z" fill="#d1df33" stroke="#d1df33" stroke-width="0.3"/><path d="M82.1 53.6L84.1 78.8L85.2 48.5L83.3 68.9Z" fill="#34618d" stroke="#34618d" stroke-width="0.3"/><path d="M85.2 48.5L87.2 41.3L88.3 48.3L86.3 39.8Z" fill="#fde725" stroke="#fde725" stroke-width="0.3"/><path d="M88.3 48.3L90.3 59.0L91.4 62.8L89.4 75.7Z" fill="#32638d" stroke="#32638d" stroke-width="0.3"/><path d="M47.1 47.7L49.0 47.0L50.2 72.1L48.2 52.0Z" fill="#42b770" stroke="#42b770" stroke-width="0.3"/><path d="M19.3 48.7L21.3 49.5L22.4 74.2L20.4 69.1Z" fill="#29ab7f" stroke="#29ab7f" stroke-width="0.3"/><path d="M22.4 74.2L24.3 78.3L25.5 58.9L23.5 59.8Z" fill="#26828d" stroke="#26828d" stroke-width="0.3"/><path d="M34.7 50.2L36.7 60.1L37.8 75.8L35.8 83.6Z" fill="#2e6c8d" stroke="#2e6c8d" stroke-width="0.3"/><path d="M37.8 75.8L39.8 66.6L40.9 45.9L38.9 46.5Z" fill="#21a286" stroke="#21a286" stroke-width="0.3"/><path d="M40.9 45.9L42.9 48.0L44.0 74.5L42.0 63.2Z" fill="#21a485" stroke="#21a485" stroke-width="0.3"/><path d="M44.0 74.5L45.9 78.7L47.1 47.7L45.1 57.7Z" fill="#277f8d" stroke="#277f8d" stroke-width="0.3"/><path d="M50.2 72.1L52.1 79.4L53.2 47.6L51.3 58.6Z" fill="#297a8d" stroke="#297a8d" stroke-width="0.3"/><path d="M53.2 47.6L55.2 45.1L56.3 59.0L54.4 49.9Z" fill="#c9de36" stroke="#c9de36" stroke-width="0.3"/><path d="M56.3 59.0L58.3 71.2L59.4 60.1L57.4 70.6Z" fill="#287c8d" stroke="#287c8d" stroke-width="0.3"/><path d="M59.4 60.1L61.4 48.1L62.5 48.3L60.5 42.6Z" fill="#bcdc3a" stroke="#bcdc3a" stroke-width="0.3"/><path d="M16.2 82.3L18.2 74.1L19.3 48.7L17.3 49.1Z" fill="#21938b" stroke="#21938b" stroke-width="0.3"/><path d="M25.5 58.9L27.4 54.3L28.5 52.5L26.6 48.9Z" fill="#eae32b" stroke="#eae32b" stroke-width="0.3"/><path d="M28.5 52.5L30.5 65.0L31.6 70.3L29.7 88.1Z" fill="#33618d" stroke="#33618d" stroke-width="0.3"/><path d="M31.6 70.3L33.6 54.7L34.7 50.2L32.8 46.1Z" fill="#68c95a" stroke="#68c95a" stroke-width="0.3"/><path d="M62.5 48.3L64.5 68.1L65.6 61.6L63.6 81.2Z" fill="#31668d" stroke="#31668d" stroke-width="0.3"/><path d="M65.6 61.6L67.6 47.0L68.7 47.8L66.7 41.8Z" fill="#9fd744" stroke="#9fd744" stroke-width="0.3"/><path d="M68.7 47.8L70.6 58.9L71.8 70.1L69.8 80.6Z" fill="#32638d" stroke="#32638d" stroke-width="0.3"/><path d="M71.8 70.1L73.7 58.6L74.8 41.6L72.9 42.5Z" fill="#27aa80" stroke="#27aa80" stroke-width="0.3"/><path d="M74.8 41.6L76.8 47.0L77.9 77.7L76.0 58.6Z" fill="#228e8c" stroke="#228e8c" stroke-width="0.3"/><path d="M77.9 77.7L79.9 61.9L81.0 41.0L79.1 50.2Z" fill="#25858c" stroke="#25858c" stroke-width="0.3"/><path d="M81.0 41.0L83.0 47.0L84.1 78.8L82.1 53.6Z" fill="#228c8c" stroke="#228c8c" stroke-width="0.3"/><path d="M84.1 78.8L86.1 66.9L87.2 41.3L85.2 48.5Z" fill="#29788d" stroke="#29788d" stroke-width="0.3"/><path d="M87.2 41.3L89.2 40.9L90.3 59.0L88.3 48.3Z" fill="#90d449" stroke="#90d449" stroke-width="0.3"/><path d="M90.3 59.0L92.2 77.7L93.4 49.4L91.4 62.8Z" fill="#32638d" stroke="#32638d" stroke-width="0.3"/><path d="M21.3 49.5L23.2 50.9L24.3 78.3L22.4 74.2Z" fill="#219b88" stroke="#219b88" stroke-width="0.3"/><path d="M36.7 60.1L38.7 70.2L39.8 66.6L37.8 75.8Z" fill="#287b8d" stroke="#287b8d" stroke-width="0.3"/><path d="M39.8 66.6L41.7 57.1L42.9 48.0L40.9 45.9Z" fill="#89d34b" stroke="#89d34b" stroke-width="0.3"/><path d="M42.9 48.0L44.8 59.2L45.9 78.7L44.0 74.5Z" fill="#26818d" stroke="#26818d" stroke-width="0.3"/><path d="M45.9 78.7L47.9 56.7L49.0 47.0L47.1 47.7Z" fill="#21a285" stroke="#21a285" stroke-width="0.3"/><path d="M49.0 47.0L51.0 57.9L52.1 79.4L50.2 72.1Z" fill="#26808d" stroke="#26808d" stroke-width="0.3"/><path d="M52.1 79.4L54.1 65.7L55.2 45.1L53.2 47.6Z" fill="#21948a" stroke="#21948a" stroke-width="0.3"/><path d="M55.2 45.1L57.2 47.0L58.3 71.2L56.3 59.0Z" fill="#37b177" stroke="#37b177" stroke-width="0.3"/><path d="M58.3 71.2L60.3 79.9L61.4 48.1L59.4 60.1Z" fill="#2a768d" stroke="#2a768d" stroke-width="0.3"/><path d="M15.1 57.5L17.0 64.3L18.2 74.1L16.2 82.3Z" fill="#287c8d" stroke="#287c8d" stroke-width="0.3"/><path d="M24.3 78.3L26.3 90.9L27.4 54.3L25.5 58.9Z" fill="#34618d" stroke="#34618d" stroke-width="0.3"/><path d="M27.4 54.3L29.4 49.3L30.5 65.0L28.5 52.5Z" fill="#add93f" stroke="#add93f" stroke-width="0.3"/><path d="M30.5 65.0L32.5 88.8L33.6 54.7L31.6 70.3Z" fill="#32648d" stroke="#32648d" stroke-width="0.3"/><path d="M18.2 74.1L20.1 68.4L21.3 49.5L19.3 48.7Z" fill="#43b770" stroke="#43b770" stroke-width="0.3"/><path d="M33.6 54.7L35.6 49.0L36.7 60.1L34.7 50.2Z" fill="#e0e22e" stroke="#e0e22e" stroke-width="0.3"/><path d="M61.4 48.1L63.3 45.8L64.5 68.1L62.5 48.3Z" fill="#62c65e" stroke="#62c65e" stroke-width="0.3"/><path d="M64.5 68.1L66.4 77.9L67.6 47.0L65.6 61.6Z" fill="#297a8d" stroke="#297a8d" stroke-width="0.3"/><path d="M67.6 47.0L69.5 44.1L70.6 58.9L68.7 47.8Z" fill="#c5dd37" stroke="#c5dd37" stroke-width="0.3"/><path d="M70.6 58.9L72.6 72.3L73.7 58.6L71.8 70.1Z" fill="#2a778d" stroke="#2a778d" stroke-width="0.3"/><path d="M73.7 58.6L75.7 47.1L76.8 47.0L74.8 41.6Z" fill="#c6dd37" stroke="#c6dd37" stroke-width="0.3"/><path d="M76.8 47.0L78.8 66.9L79.9 61.9L77.9 77.7Z" fill="#2e6d8d" stroke="#2e6d8d" stroke-width="0.3"/><path d="M79.9 61.9L81.9 45.6L83.0 47.0L81.0 41.0Z" fill="#91d548" stroke="#91d548" stroke-width="0.3"/><path d="M83.0 47.0L85.0 60.7L86.1 66.9L84.1 78.8Z" fill="#31658d" stroke="#31658d" stroke-width="0.3"/><path d="M86.1 66.9L88.0 55.2L89.2 40.9L87.2 41.3Z" fill="#44b86f" stroke="#44b86f" stroke-width="0.3"/><path d="M89.2 40.9L91.1 46.8L92.2 77.7L90.3 59.0Z" fill="#23898c" stroke="#23898c" stroke-width="0.3"/><path d="M92.2 77.7L94.2 60.6L95.3 40.2L93.4 49.4Z" fill="#25838d" stroke="#25838d" stroke-width="0.3"/><path d="M38.7 70.2L40.6 86.0L41.7 57.1L39.8 66.6Z" fill="#31678d" stroke="#31678d" stroke-width="0.3"/><path d="M41.7 57.1L43.7 48.8L44.8 59.2L42.9 48.0Z" fill="#e7e32c" stroke="#e7e32c" stroke-width="0.3"/><path d="M44.8 59.2L46.8 85.2L47.9 56.7L45.9 78.7Z" fill="#33628d" stroke="#33628d" stroke-width="0.3"/><path d="M51.0 57.9L53.0 71.2L54.1 65.7L52.1 79.4Z" fill="#2e6c8d" stroke="#2e6c8d" stroke-width="0.3"/><path d="M54.1 65.7L56.1 55.4L57.2 47.0L55.2 45.1Z" fill="#8ed44a" stroke="#8ed44a" stroke-width="0.3"/><path d="M57.2 47.0L59.1 58.2L60.3 79.9L58.3 71.2Z" fill="#277f8d" stroke="#277f8d" stroke-width="0.3"/><path d="M14.0 56.1L15.9 53.0L17.0 64.3L15.1 57.5Z" fill="#c7de36" stroke="#c7de36" stroke-width="0.3"/><path d="M23.2 50.9L25.2 55.8L26.3 90.9L24.3 78.3Z" fill="#2d708d" stroke="#2d708d" stroke-width="0.3"/><path d="M26.3 90.9L28.3 71.2L29.4 49.3L27.4 54.3Z" fill="#287b8d" stroke="#287b8d" stroke-width="0.3"/><path d="M29.4 49.3L31.4 55.2L32.5 88.8L30.5 65.0Z" fill="#25858c" stroke="#25858c" stroke-width="0.3"/><path d="M17.0 64.3L19.0 72.5L20.1 68.4L18.2 74.1Z" fill="#228c8c" stroke="#228c8c" stroke-width="0.3"/><path d="M20.1 68.4L22.1 63.6L23.2 50.9L21.3 49.5Z" fill="#8fd449" stroke="#8fd449" stroke-width="0.3"/><path d="M32.5 88.8L34.4 73.6L35.6 49.0L33.6 54.7Z" fill="#29798d" stroke="#29798d" stroke-width="0.3"/><path d="M35.6 49.0L37.5 49.4L38.7 70.2L36.7 60.1Z" fill="#66c75c" stroke="#66c75c" stroke-width="0.3"/><path d="M47.9 56.7L49.9 48.1L51.0 57.9L49.0 47.0Z" fill="#ede42a" stroke="#ede42a" stroke-width="0.3"/><path d="M60.3 79.9L62.2 55.8L63.3 45.8L61.4 48.1Z" fill="#219c88" stroke="#219c88" stroke-width="0.3"/><path d="M63.3 45.8L65.3 58.3L66.4 77.9L64.5 68.1Z" fill="#25858c" stroke="#25858c" stroke-width="0.3"/><path d="M66.4 77.9L68.4 61.8L69.5 44.1L67.6 47.0Z" fill="#219989" stroke="#219989" stroke-width="0.3"/><path d="M69.5 44.1L71.5 47.0L72.6 72.3L70.6 58.9Z" fill="#21a784" stroke="#21a784" stroke-width="0.3"/><path d="M72.6 72.3L74.6 77.5L75.7 47.1L73.7 58.6Z" fill="#29798d" stroke="#29798d" stroke-width="0.3"/><path d="M75.7 47.1L77.7 45.0L78.8 66.9L76.8 47.0Z" fill="#66c75c" stroke="#66c75c" stroke-width="0.3"/><path d="M78.8 66.9L80.7 74.5L81.9 45.6L79.9 61.9Z" fill="#26818d" stroke="#26818d" stroke-width="0.3"/><path d="M81.9 45.6L83.8 43.4L85.0 60.7L83.0 47.0Z" fill="#a4d842" stroke="#a4d842" stroke-width="0.3"/><path d="M85.0 60.7L86.9 75.8L88.0 55.2L86.1 66.9Z" fill="#2f6c8d" stroke="#2f6c8d" stroke-width="0.3"/><path d="M88.0 55.2L90.0 45.3L91.1 46.8L89.2 40.9Z" fill="#e6e32c" stroke="#e6e32c" stroke-width="0.3"/><path d="M91.1 46.8L93.1 67.3L94.2 60.6L92.2 77.7Z" fill="#30688d" stroke="#30688d" stroke-width="0.3"/><path d="M94.2 60.6L96.2 43.9L97.3 46.9L95.3 40.2Z" fill="#97d547" stroke="#97d547" stroke-width="0.3"/><path d="M40.6 86.0L42.6 70.9L43.7 48.8L41.7 57.1Z" fill="#26818d" stroke="#26818d" stroke-width="0.3"/><path d="M43.7 48.8L45.7 54.4L46.8 85.2L44.8 59.2Z" fill="#21918b" stroke="#21918b" stroke-width="0.3"/><path d="M53.0 71.2L54.9 88.9L56.1 55.4L54.1 65.7Z" fill="#37588b" stroke="#37588b" stroke-width="0.3"/><path d="M56.1 55.4L58.0 47.7L59.1 58.2L57.2 47.0Z" fill="#eee429" stroke="#eee429" stroke-width="0.3"/><path d="M25.2 55.8L27.2 73.1L28.3 71.2L26.3 90.9Z" fill="#355e8c" stroke="#355e8c" stroke-width="0.3"/><path d="M28.3 71.2L30.2 54.4L31.4 55.2L29.4 49.3Z" fill="#84d24d" stroke="#84d24d" stroke-width="0.3"/><path d="M12.8 90.8L14.8 84.3L15.9 53.0L14.0 56.1Z" fill="#2a768d" stroke="#2a768d" stroke-width="0.3"/><path d="M15.9 53.0L17.9 52.5L19.0 72.5L17.0 64.3Z" fill="#6bca59" stroke="#6bca59" stroke-width="0.3"/><path d="M19.0 72.5L21.0 82.7L22.1 63.6L20.1 68.4Z" fill="#287c8d" stroke="#287c8d" stroke-width="0.3"/><path d="M22.1 63.6L24.1 55.7L25.2 55.8L23.2 50.9Z" fill="#e6e32c" stroke="#e6e32c" stroke-width="0.3"/><path d="M31.4 55.2L33.3 70.0L34.4 73.6L32.5 88.8Z" fill="#33618d" stroke="#33618d" stroke-width="0.3"/><path d="M34.4 73.6L36.4 62.3L37.5 49.4L35.6 49.0Z" fill="#58c164" stroke="#58c164" stroke-width="0.3"/><path d="M37.5 49.4L39.5 55.0L40.6 86.0L38.7 70.2Z" fill="#24858c" stroke="#24858c" stroke-width="0.3"/><path d="M46.8 85.2L48.8 70.3L49.9 48.1L47.9 56.7Z" fill="#26808d" stroke="#26808d" stroke-width="0.3"/><path d="M49.9 48.1L51.8 49.2L53.0 71.2L51.0 57.9Z" fill="#59c164" stroke="#59c164" stroke-width="0.3"/><path d="M59.1 58.2L61.1 85.9L62.2 55.8L60.3 79.9Z" fill="#375a8b" stroke="#375a8b" stroke-width="0.3"/><path d="M62.2 55.8L64.2 46.8L65.3 58.3L63.3 45.8Z" fill="#e0e22e" stroke="#e0e22e" stroke-width="0.3"/><path d="M65.3 58.3L67.3 75.1L68.4 61.8L66.4 77.9Z" fill="#2f6a8d" stroke="#2f6a8d" stroke-width="0.3"/><path d="M68.4 61.8L70.4 52.1L71.5 47.0L69.5 44.1Z" fill="#bddc3a" stroke="#bddc3a" stroke-width="0.3"/><path d="M71.5 47.0L73.5 59.0L74.6 77.5L72.6 72.3Z" fill="#277e8d" stroke="#277e8d" stroke-width="0.3"/><path d="M74.6 77.5L76.5 53.8L77.7 45.0L75.7 47.1Z" fill="#21a186" stroke="#21a186" stroke-width="0.3"/><path d="M77.7 45.0L79.6 59.9L80.7 74.5L78.8 66.9Z" fill="#23898c" stroke="#23898c" stroke-width="0.3"/><path d="M80.7 74.5L82.7 57.0L83.8 43.4L81.9 45.6Z" fill="#21a485" stroke="#21a485" stroke-width="0.3"/><path d="M83.8 43.4L85.8 48.0L86.9 75.8L85.0 60.7Z" fill="#219789" stroke="#219789" stroke-width="0.3"/><path d="M86.9 75.8L88.9 73.2L90.0 45.3L88.0 55.2Z" fill="#287c8d" stroke="#287c8d" stroke-width="0.3"/><path d="M90.0 45.3L92.0 44.6L93.1 67.3L91.1 46.8Z" fill="#5bc262" stroke="#5bc262" stroke-width="0.3"/><path d="M93.1 67.3L95.1 70.4L96.2 43.9L94.2 60.6Z" fill="#23898c" stroke="#23898c" stroke-width="0.3"/><path d="M96.2 43.9L98.1 43.2L99.3 63.7L97.3 46.9Z" fill="#73cd54" stroke="#73cd54" stroke-width="0.3"/><path d="M42.6 70.9L44.6 52.6L45.7 54.4L43.7 48.8Z" fill="#7ed14f" stroke="#7ed14f" stroke-width="0.3"/><path d="M54.9 88.9L56.9 67.6L58.0 47.7L56.1 55.4Z" fill="#287a8d" stroke="#287a8d" stroke-width="0.3"/><path d="M27.2 73.1L29.1 83.8L30.2 54.4L28.3 71.2Z" fill="#277f8d" stroke="#277f8d" stroke-width="0.3"/><path d="M11.7 55.6L13.7 66.2L14.8 84.3L12.8 90.8Z" fill="#2f6a8d" stroke="#2f6a8d" stroke-width="0.3"/><path d="M17.9 52.5L19.9 55.9L21.0 82.7L19.0 72.5Z" fill="#219c88" stroke="#219c88" stroke-width="0.3"/><path d="M14.8 84.3L16.8 68.8L17.9 52.5L15.9 53.0Z" fill="#21a286" stroke="#21a286" stroke-width="0.3"/><path d="M21.0 82.7L22.9 86.4L24.1 55.7L22.1 63.6Z" fill="#29788d" stroke="#29788d" stroke-width="0.3"/><path d="M24.1 55.7L26.0 53.0L27.2 73.1L25.2 55.8Z" fill="#76cf53" stroke="#76cf53" stroke-width="0.3"/><path d="M30.2 54.4L32.2 51.9L33.3 70.0L31.4 55.2Z" fill="#96d547" stroke="#96d547" stroke-width="0.3"/><path d="M33.3 70.0L35.3 86.6L36.4 62.3L34.4 73.6Z" fill="#31678d" stroke="#31678d" stroke-width="0.3"/><path d="M36.4 62.3L38.4 53.6L39.5 55.0L37.5 49.4Z" fill="#f4e527" stroke="#f4e527" stroke-width="0.3"/><path d="M39.5 55.0L41.5 74.0L42.6 70.9L40.6 86.0Z" fill="#30688d" stroke="#30688d" stroke-width="0.3"/><path d="M45.7 54.4L47.6 73.2L48.8 70.3L46.8 85.2Z" fill="#30688d" stroke="#30688d" stroke-width="0.3"/><path d="M48.8 70.3L50.7 57.7L51.8 49.2L49.9 48.1Z" fill="#76cf52" stroke="#76cf52" stroke-width="0.3"/><path d="M51.8 49.2L53.8 56.6L54.9 88.9L53.0 71.2Z" fill="#2b748d" stroke="#2b748d" stroke-width="0.3"/><path d="M58.0 47.7L60.0 54.8L61.1 85.9L59.1 58.2Z" fill="#228c8c" stroke="#228c8c" stroke-width="0.3"/><path d="M61.1 85.9L63.1 65.5L64.2 46.8L62.2 55.8Z" fill="#26818d" stroke="#26818d" stroke-width="0.3"/><path d="M64.2 46.8L66.2 50.0L67.3 75.1L65.3 58.3Z" fill="#27aa80" stroke="#27aa80" stroke-width="0.3"/><path d="M67.3 75.1L69.2 84.6L70.4 52.1L68.4 61.8Z" fill="#32658d" stroke="#32658d" stroke-width="0.3"/><path d="M70.4 52.1L72.3 46.5L73.5 59.0L71.5 47.0Z" fill="#e3e22d" stroke="#e3e22d" stroke-width="0.3"/><path d="M73.5 59.0L75.4 88.5L76.5 53.8L74.6 77.5Z" fill="#3c4f89" stroke="#3c4f89" stroke-width="0.3"/><path d="M76.5 53.8L78.5 45.7L79.6 59.9L77.7 45.0Z" fill="#c8de36" stroke="#c8de36" stroke-width="0.3"/><path d="M79.6 59.9L81.6 80.5L82.7 57.0L80.7 74.5Z" fill="#32638d" stroke="#32638d" stroke-width="0.3"/><path d="M82.7 57.0L84.7 48.5L85.8 48.0L83.8 43.4Z" fill="#f1e528" stroke="#f1e528" stroke-width="0.3"/><path d="M85.8 48.0L87.8 61.2L88.9 73.2L86.9 75.8Z" fill="#2a768d" stroke="#2a768d" stroke-width="0.3"/><path d="M88.9 73.2L90.9 51.4L92.0 44.6L90.0 45.3Z" fill="#2fae7c" stroke="#2fae7c" stroke-width="0.3"/><path d="M92.0 44.6L93.9 62.0L95.1 70.4L93.1 67.3Z" fill="#228c8c" stroke="#228c8c" stroke-width="0.3"/><path d="M95.1 70.4L97.0 52.3L98.1 43.2L96.2 43.9Z" fill="#3eb573" stroke="#3eb573" stroke-width="0.3"/><path d="M98.1 43.2L100.1 50.1L101.2 81.2L99.3 63.7Z" fill="#287d8d" stroke="#287d8d" stroke-width="0.3"/><path d="M10.6 65.8L12.6 56.3L13.7 66.2L11.7 55.6Z" fill="#cfdf34" stroke="#cfdf34" stroke-width="0.3"/><path d="M13.7 66.2L15.7 91.8L16.8 68.8L14.8 84.3Z" fill="#365c8c" stroke="#365c8c" stroke-width="0.3"/><path d="M16.8 68.8L18.7 57.8L19.9 55.9L17.9 52.5Z" fill="#d8e031" stroke="#d8e031" stroke-width="0.3"/><path d="M19.9 55.9L21.8 69.3L22.9 86.4L21.0 82.7Z" fill="#2a768d" stroke="#2a768d" stroke-width="0.3"/><path d="M22.9 86.4L24.9 61.9L26.0 53.0L24.1 55.7Z" fill="#21a086" stroke="#21a086" stroke-width="0.3"/><path d="M26.0 53.0L28.0 69.3L29.1 83.8L27.2 73.1Z" fill="#24888c" stroke="#24888c" stroke-width="0.3"/><path d="M29.1 83.8L31.1 62.9L32.2 51.9L30.2 54.4Z" fill="#21a385" stroke="#21a385" stroke-width="0.3"/><path d="M32.2 51.9L34.2 58.2L35.3 86.6L33.3 70.0Z" fill="#228d8c" stroke="#228d8c" stroke-width="0.3"/><path d="M35.3 86.6L37.3 79.5L38.4 53.6L36.4 62.3Z" fill="#29798d" stroke="#29798d" stroke-width="0.3"/><path d="M38.4 53.6L40.3 52.9L41.5 74.0L39.5 55.0Z" fill="#69c95a" stroke="#69c95a" stroke-width="0.3"/><path d="M41.5 74.0L43.4 78.5L44.6 52.6L42.6 70.9Z" fill="#23898c" stroke="#23898c" stroke-width="0.3"/><path d="M44.6 52.6L46.5 52.1L47.6 73.2L45.7 54.4Z" fill="#69c95a" stroke="#69c95a" stroke-width="0.3"/><path d="M47.6 73.2L49.6 91.6L50.7 57.7L48.8 70.3Z" fill="#39558a" stroke="#39558a" stroke-width="0.3"/><path d="M50.7 57.7L52.7 51.0L53.8 56.6L51.8 49.2Z" fill="#fde725" stroke="#fde725" stroke-width="0.3"/><path d="M53.8 56.6L55.8 76.9L56.9 67.6L54.9 88.9Z" fill="#39558a" stroke="#39558a" stroke-width="0.3"/><path d="M56.9 67.6L58.9 50.6L60.0 54.8L58.0 47.7Z" fill="#9dd645" stroke="#9dd645" stroke-width="0.3"/><path d="M60.0 54.8L62.0 77.6L63.1 65.5L61.1 85.9Z" fill="#355e8c" stroke="#355e8c" stroke-width="0.3"/><path d="M63.1 65.5L65.0 53.1L66.2 50.0L64.2 46.8Z" fill="#b2da3e" stroke="#b2da3e" stroke-width="0.3"/><path d="M66.2 50.0L68.1 59.6L69.2 84.6L67.3 75.1Z" fill="#2c718d" stroke="#2c718d" stroke-width="0.3"/><path d="M69.2 84.6L71.2 63.2L72.3 46.5L70.4 52.1Z" fill="#228b8c" stroke="#228b8c" stroke-width="0.3"/><path d="M72.3 46.5L74.3 55.9L75.4 88.5L73.5 59.0Z" fill="#277e8d" stroke="#277e8d" stroke-width="0.3"/><path d="M75.4 88.5L77.4 60.8L78.5 45.7L76.5 53.8Z" fill="#277d8d" stroke="#277d8d" stroke-width="0.3"/><path d="M78.5 45.7L80.5 51.9L81.6 80.5L79.6 59.9Z" fill="#21948a" stroke="#21948a" stroke-width="0.3"/><path d="M81.6 80.5L83.6 76.5L84.7 48.5L82.7 57.0Z" fill="#2b748d" stroke="#2b748d" stroke-width="0.3"/><path d="M84.7 48.5L86.6 45.7L87.8 61.2L85.8 48.0Z" fill="#c1dc39" stroke="#c1dc39" stroke-width="0.3"/><path d="M87.8 61.2L89.7 84.2L90.9 51.4L88.9 73.2Z" fill="#355e8c" stroke="#355e8c" stroke-width="0.3"/><path d="M90.9 51.4L92.8 45.1L93.9 62.0L92.0 44.6Z" fill="#a7d841" stroke="#a7d841" stroke-width="0.3"/><path d="M93.9 62.0L95.9 87.4L97.0 52.3L95.1 70.4Z" fill="#3c4d89" stroke="#3c4d89" stroke-width="0.3"/><path d="M97.0 52.3L99.0 45.5L100.1 50.1L98.1 43.2Z" fill="#fde725" stroke="#fde725" stroke-width="0.3"/><path d="M100.1 50.1L102.1 64.5L103.2 67.8L101.2 81.2Z" fill="#355d8c" stroke="#355d8c" stroke-width="0.3"/><path d="M15.7 91.8L17.6 74.7L18.7 57.8L16.8 68.8Z" fill="#29798d" stroke="#29798d" stroke-width="0.3"/><path d="M21.8 69.3L23.8 89.6L24.9 61.9L22.9 86.4Z" fill="#32658d" stroke="#32658d" stroke-width="0.3"/><path d="M24.9 61.9L26.9 54.6L28.0 69.3L26.0 53.0Z" fill="#bcdc3a" stroke="#bcdc3a" stroke-width="0.3"/><path d="M31.1 62.9L33.1 54.5L34.2 58.2L32.2 51.9Z" fill="#fde725" stroke="#fde725" stroke-width="0.3"/><path d="M34.2 58.2L36.1 73.8L37.3 79.5L35.3 86.6Z" fill="#30688d" stroke="#30688d" stroke-width="0.3"/><path d="M37.3 79.5L39.2 58.3L40.3 52.9L38.4 53.6Z" fill="#45b86f" stroke="#45b86f" stroke-width="0.3"/><path d="M40.3 52.9L42.3 72.7L43.4 78.5L41.5 74.0Z" fill="#228c8c" stroke="#228c8c" stroke-width="0.3"/><path d="M46.5 52.1L48.5 62.0L49.6 91.6L47.6 73.2Z" fill="#2d708d" stroke="#2d708d" stroke-width="0.3"/><path d="M49.6 91.6L51.6 72.2L52.7 51.0L50.7 57.7Z" fill="#2a768d" stroke="#2a768d" stroke-width="0.3"/><path d="M52.7 51.0L54.7 53.5L55.8 76.9L53.8 56.6Z" fill="#41b671" stroke="#41b671" stroke-width="0.3"/><path d="M58.9 50.6L60.8 53.2L62.0 77.6L60.0 54.8Z" fill="#35b178" stroke="#35b178" stroke-width="0.3"/><path d="M62.0 77.6L63.9 81.8L65.0 53.1L63.1 65.5Z" fill="#2a768d" stroke="#2a768d" stroke-width="0.3"/><path d="M65.0 53.1L67.0 49.1L68.1 59.6L66.2 50.0Z" fill="#fde725" stroke="#fde725" stroke-width="0.3"/><path d="M68.1 59.6L70.1 81.0L71.2 63.2L69.2 84.6Z" fill="#37598b" stroke="#37598b" stroke-width="0.3"/><path d="M71.2 63.2L73.2 48.8L74.3 55.9L72.3 46.5Z" fill="#c4dd37" stroke="#c4dd37" stroke-width="0.3"/><path d="M74.3 55.9L76.3 82.5L77.4 60.8L75.4 88.5Z" fill="#3d4c88" stroke="#3d4c88" stroke-width="0.3"/><path d="M77.4 60.8L79.4 49.5L80.5 51.9L78.5 45.7Z" fill="#e2e22d" stroke="#e2e22d" stroke-width="0.3"/><path d="M80.5 51.9L82.4 64.0L83.6 76.5L81.6 80.5Z" fill="#2f6c8d" stroke="#2f6c8d" stroke-width="0.3"/><path d="M83.6 76.5L85.5 58.5L86.6 45.7L84.7 48.5Z" fill="#21a584" stroke="#21a584" stroke-width="0.3"/><path d="M86.6 45.7L88.6 57.5L89.7 84.2L87.8 61.2Z" fill="#26818d" stroke="#26818d" stroke-width="0.3"/><path d="M89.7 84.2L91.7 56.5L92.8 45.1L90.9 51.4Z" fill="#228c8c" stroke="#228c8c" stroke-width="0.3"/><path d="M92.8 45.1L94.8 54.7L95.9 87.4L93.9 62.0Z" fill="#2a758d" stroke="#2a758d" stroke-width="0.3"/><path d="M95.9 87.4L97.9 68.6L99.0 45.5L97.0 52.3Z" fill="#2e6d8d" stroke="#2e6d8d" stroke-width="0.3"/><path d="M99.0 45.5L101.0 45.5L102.1 64.5L100.1 50.1Z" fill="#83d24d" stroke="#83d24d" stroke-width="0.3"/><path d="M12.6 56.3L14.5 78.9L15.7 91.8L13.7 66.2Z" fill="#287b8d" stroke="#287b8d" stroke-width="0.3"/><path d="M18.7 57.8L20.7 55.8L21.8 69.3L19.9 55.9Z" fill="#d1df33" stroke="#d1df33" stroke-width="0.3"/><path d="M28.0 69.3L30.0 94.6L31.1 62.9L29.1 83.8Z" fill="#3b4f89" stroke="#3b4f89" stroke-width="0.3"/><path d="M43.4 78.5L45.4 57.9L46.5 52.1L44.6 52.6Z" fill="#46b96e" stroke="#46b96e" stroke-width="0.3"/><path d="M55.8 76.9L57.7 73.3L58.9 50.6L56.9 67.6Z" fill="#218e8c" stroke="#218e8c" stroke-width="0.3"/><path d="M23.8 89.6L25.8 60.0L26.9 54.6L24.9 61.9Z" fill="#219b88" stroke="#219b88" stroke-width="0.3"/><path d="M33.1 54.5L35.0 55.8L36.1 73.8L34.2 58.2Z" fill="#84d24d" stroke="#84d24d" stroke-width="0.3"/><path d="M36.1 73.8L38.1 84.8L39.2 58.3L37.3 79.5Z" fill="#2a768d" stroke="#2a768d" stroke-width="0.3"/><path d="M39.2 58.3L41.2 54.6L42.3 72.7L40.3 52.9Z" fill="#8ad34b" stroke="#8ad34b" stroke-width="0.3"/><path d="M48.5 62.0L50.5 79.5L51.6 72.2L49.6 91.6Z" fill="#3d4c88" stroke="#3d4c88" stroke-width="0.3"/><path d="M51.6 72.2L53.5 55.2L54.7 53.5L52.7 51.0Z" fill="#87d34c" stroke="#87d34c" stroke-width="0.3"/><path d="M60.8 53.2L62.8 67.0L63.9 81.8L62.0 77.6Z" fill="#297a8d" stroke="#297a8d" stroke-width="0.3"/><path d="M63.9 81.8L65.9 65.2L67.0 49.1L65.0 53.1Z" fill="#219b88" stroke="#219b88" stroke-width="0.3"/><path d="M67.0 49.1L69.0 54.8L70.1 81.0L68.1 59.6Z" fill="#219f87" stroke="#219f87" stroke-width="0.3"/><path d="M70.1 81.0L72.1 68.4L73.2 48.8L71.2 63.2Z" fill="#238a8c" stroke="#238a8c" stroke-width="0.3"/><path d="M73.2 48.8L75.1 54.9L76.3 82.5L74.3 55.9Z" fill="#219b88" stroke="#219b88" stroke-width="0.3"/><path d="M76.3 82.5L78.2 73.2L79.4 49.5L77.4 60.8Z" fill="#277d8d" stroke="#277d8d" stroke-width="0.3"/><path d="M79.4 49.5L81.3 48.3L82.4 64.0L80.5 51.9Z" fill="#bddc3a" stroke="#bddc3a" stroke-width="0.3"/><path d="M82.4 64.0L84.4 86.4L85.5 58.5L83.6 76.5Z" fill="#38568b" stroke="#38568b" stroke-width="0.3"/><path d="M85.5 58.5L87.5 47.4L88.6 57.5L86.6 45.7Z" fill="#e8e32b" stroke="#e8e32b" stroke-width="0.3"/><path d="M88.6 57.5L90.6 87.8L91.7 56.5L89.7 84.2Z" fill="#3d4c88" stroke="#3d4c88" stroke-width="0.3"/><path d="M91.7 56.5L93.7 47.0L94.8 54.7L92.8 45.1Z" fill="#fde725" stroke="#fde725" stroke-width="0.3"/><path d="M94.8 54.7L96.8 69.7L97.9 68.6L95.9 87.4Z" fill="#3d4b88" stroke="#3d4b88" stroke-width="0.3"/><path d="M97.9 68.6L99.8 53.9L101.0 45.5L99.0 45.5Z" fill="#67c85b" stroke="#67c85b" stroke-width="0.3"/><path d="M14.5 78.9L16.5 84.6L17.6 74.7L15.7 91.8Z" fill="#3e4988" stroke="#3e4988" stroke-width="0.3"/><path d="M17.6 74.7L19.6 57.2L20.7 55.8L18.7 57.8Z" fill="#a7d841" stroke="#a7d841" stroke-width="0.3"/><path d="M20.7 55.8L22.7 78.2L23.8 89.6L21.8 69.3Z" fill="#277e8d" stroke="#277e8d" stroke-width="0.3"/><path d="M26.9 54.6L28.8 69.5L30.0 94.6L28.0 69.3Z" fill="#2a778d" stroke="#2a778d" stroke-width="0.3"/><path d="M30.0 94.6L31.9 72.4L33.1 54.5L31.1 62.9Z" fill="#29798d" stroke="#29798d" stroke-width="0.3"/><path d="M42.3 72.7L44.3 85.7L45.4 57.9L43.4 78.5Z" fill="#2c718d" stroke="#2c718d" stroke-width="0.3"/><path d="M45.4 57.9L47.4 52.4L48.5 62.0L46.5 52.1Z" fill="#fde725" stroke="#fde725" stroke-width="0.3"/><path d="M54.7 53.5L56.6 76.3L57.7 73.3L55.8 76.9Z" fill="#25858c" stroke="#25858c" stroke-width="0.3"/><path d="M57.7 73.3L59.7 54.0L60.8 53.2L58.9 50.6Z" fill="#71cd55" stroke="#71cd55" stroke-width="0.3"/><path d="M35.0 55.8L37.0 76.2L38.1 84.8L36.1 73.8Z" fill="#25838d" stroke="#25838d" stroke-width="0.3"/><path d="M38.1 84.8L40.1 58.3L41.2 54.6L39.2 58.3Z" fill="#22a883" stroke="#22a883" stroke-width="0.3"/><path d="M50.5 79.5L52.4 79.1L53.5 55.2L51.6 72.2Z" fill="#25858c" stroke="#25858c" stroke-width="0.3"/><path d="M62.8 67.0L64.8 86.4L65.9 65.2L63.9 81.8Z" fill="#365b8c" stroke="#365b8c" stroke-width="0.3"/><path d="M65.9 65.2L67.9 52.4L69.0 54.8L67.0 49.1Z" fill="#d7e031" stroke="#d7e031" stroke-width="0.3"/><path d="M69.0 54.8L70.9 80.1L72.1 68.4L70.1 81.0Z" fill="#2b738d" stroke="#2b738d" stroke-width="0.3"/><path d="M72.1 68.4L74.0 51.3L75.1 54.9L73.2 48.8Z" fill="#a1d743" stroke="#a1d743" stroke-width="0.3"/><path d="M75.1 54.9L77.1 72.9L78.2 73.2L76.3 82.5Z" fill="#2f6c8d" stroke="#2f6c8d" stroke-width="0.3"/><path d="M78.2 73.2L80.2 58.9L81.3 48.3L79.4 49.5Z" fill="#57c065" stroke="#57c065" stroke-width="0.3"/><path d="M81.3 48.3L83.3 57.0L84.4 86.4L82.4 64.0Z" fill="#25858c" stroke="#25858c" stroke-width="0.3"/><path d="M84.4 86.4L86.4 63.8L87.5 47.4L85.5 58.5Z" fill="#26828d" stroke="#26828d" stroke-width="0.3"/><path d="M87.5 47.4L89.5 57.1L90.6 87.8L88.6 57.5Z" fill="#25848c" stroke="#25848c" stroke-width="0.3"/><path d="M90.6 87.8L92.5 65.7L93.7 47.0L91.7 56.5Z" fill="#297a8d" stroke="#297a8d" stroke-width="0.3"/><path d="M93.7 47.0L95.6 49.0L96.8 69.7L94.8 54.7Z" fill="#62c65e" stroke="#62c65e" stroke-width="0.3"/><path d="M96.8 69.7L98.7 85.8L99.8 53.9L97.9 68.6Z" fill="#365b8c" stroke="#365b8c" stroke-width="0.3"/><path d="M19.6 57.2L21.6 66.4L22.7 78.2L20.7 55.8Z" fill="#67c85b" stroke="#67c85b" stroke-width="0.3"/><path d="M22.7 78.2L24.6 75.5L25.8 60.0L23.8 89.6Z" fill="#2b748d" stroke="#2b748d" stroke-width="0.3"/><path d="M16.5 84.6L18.5 60.6L19.6 57.2L17.6 74.7Z" fill="#21a186" stroke="#21a186" stroke-width="0.3"/><path d="M25.8 60.0L27.7 57.4L28.8 69.5L26.9 54.6Z" fill="#dce12f" stroke="#dce12f" stroke-width="0.3"/><path d="M28.8 69.5L30.8 94.2L31.9 72.4L30.0 94.6Z" fill="#43377f" stroke="#43377f" stroke-width="0.3"/><path d="M31.9 72.4L33.9 57.8L35.0 55.8L33.1 54.5Z" fill="#badb3b" stroke="#badb3b" stroke-width="0.3"/><path d="M41.2 54.6L43.2 72.7L44.3 85.7L42.3 72.7Z" fill="#26828d" stroke="#26828d" stroke-width="0.3"/><path d="M44.3 85.7L46.2 66.0L47.4 52.4L45.4 57.9Z" fill="#219b88" stroke="#219b88" stroke-width="0.3"/><path d="M47.4 52.4L49.3 57.2L50.5 79.5L48.5 62.0Z" fill="#36b178" stroke="#36b178" stroke-width="0.3"/><path d="M53.5 55.2L55.5 55.2L56.6 76.3L54.7 53.5Z" fill="#5dc361" stroke="#5dc361" stroke-width="0.3"/><path d="M56.6 76.3L58.6 78.1L59.7 54.0L57.7 73.3Z" fill="#23888c" stroke="#23888c" stroke-width="0.3"/><path d="M59.7 54.0L61.7 51.9L62.8 67.0L60.8 53.2Z" fill="#c6dd37" stroke="#c6dd37" stroke-width="0.3"/><path d="M21.6 66.4L23.5 90.1L24.6 75.5L22.7 78.2Z" fill="#2b748d" stroke="#2b748d" stroke-width="0.3"/><path d="M37.0 76.2L39.0 78.7L40.1 58.3L38.1 84.8Z" fill="#287d8d" stroke="#287d8d" stroke-width="0.3"/><path d="M64.8 86.4L66.7 73.3L67.9 52.4L65.9 65.2Z" fill="#277e8d" stroke="#277e8d" stroke-width="0.3"/><path d="M67.9 52.4L69.8 56.1L70.9 80.1L69.0 54.8Z" fill="#2ead7c" stroke="#2ead7c" stroke-width="0.3"/><path d="M70.9 80.1L72.9 71.5L74.0 51.3L72.1 68.4Z" fill="#238b8c" stroke="#238b8c" stroke-width="0.3"/><path d="M74.0 51.3L76.0 52.7L77.1 72.9L75.1 54.9Z" fill="#6ac959" stroke="#6ac959" stroke-width="0.3"/><path d="M77.1 72.9L79.1 90.8L80.2 58.9L78.2 73.2Z" fill="#3a518a" stroke="#3a518a" stroke-width="0.3"/><path d="M80.2 58.9L82.2 50.3L83.3 57.0L81.3 48.3Z" fill="#fde725" stroke="#fde725" stroke-width="0.3"/><path d="M83.3 57.0L85.3 84.2L86.4 63.8L84.4 86.4Z" fill="#38578b" stroke="#38578b" stroke-width="0.3"/><path d="M86.4 63.8L88.3 49.3L89.5 57.1L87.5 47.4Z" fill="#c7dd37" stroke="#c7dd37" stroke-width="0.3"/><path d="M89.5 57.1L91.4 79.6L92.5 65.7L90.6 87.8Z" fill="#3b5089" stroke="#3b5089" stroke-width="0.3"/><path d="M92.5 65.7L94.5 53.5L95.6 49.0L93.7 47.0Z" fill="#b1da3e" stroke="#b1da3e" stroke-width="0.3"/><path d="M95.6 49.0L97.6 60.2L98.7 85.8L96.8 69.7Z" fill="#2b748d" stroke="#2b748d" stroke-width="0.3"/><path d="M18.5 60.6L20.4 64.1L21.6 66.4L19.6 57.2Z" fill="#fde725" stroke="#fde725" stroke-width="0.3"/><path d="M27.7 57.4L29.7 73.1L30.8 94.2L28.8 69.5Z" fill="#287b8d" stroke="#287b8d" stroke-width="0.3"/><path d="M30.8 94.2L32.8 73.7L33.9 57.8L31.9 72.4Z" fill="#2b748d" stroke="#2b748d" stroke-width="0.3"/><path d="M33.9 57.8L35.9 59.5L37.0 76.2L35.0 55.8Z" fill="#7ed14f" stroke="#7ed14f" stroke-width="0.3"/><path d="M24.6 75.5L26.6 57.4L27.7 57.4L25.8 60.0Z" fill="#a2d743" stroke="#a2d743" stroke-width="0.3"/><path d="M40.1 58.3L42.0 56.8L43.2 72.7L41.2 54.6Z" fill="#a6d842" stroke="#a6d842" stroke-width="0.3"/><path d="M43.2 72.7L45.1 95.7L46.2 66.0L44.3 85.7Z" fill="#404487" stroke="#404487" stroke-width="0.3"/><path d="M46.2 66.0L48.2 55.5L49.3 57.2L47.4 52.4Z" fill="#fde725" stroke="#fde725" stroke-width="0.3"/><path d="M49.3 57.2L51.3 78.4L52.4 79.1L50.5 79.5Z" fill="#26808d" stroke="#26808d" stroke-width="0.3"/><path d="M52.4 79.1L54.4 56.0L55.5 55.2L53.5 55.2Z" fill="#52be67" stroke="#52be67" stroke-width="0.3"/><path d="M55.5 55.2L57.5 77.1L58.6 78.1L56.6 76.3Z" fill="#24878c" stroke="#24878c" stroke-width="0.3"/><path d="M58.6 78.1L60.6 60.2L61.7 51.9L59.7 54.0Z" fill="#4dbc6a" stroke="#4dbc6a" stroke-width="0.3"/><path d="M61.7 51.9L63.6 59.8L64.8 86.4L62.8 67.0Z" fill="#218f8c" stroke="#218f8c" stroke-width="0.3"/><path d="M66.7 73.3L68.7 53.9L69.8 56.1L67.9 52.4Z" fill="#82d24e" stroke="#82d24e" stroke-width="0.3"/><path d="M69.8 56.1L71.8 81.9L72.9 71.5L70.9 80.1Z" fill="#297a8d" stroke="#297a8d" stroke-width="0.3"/><path d="M72.9 71.5L74.9 55.5L76.0 52.7L74.0 51.3Z" fill="#92d548" stroke="#92d548" stroke-width="0.3"/><path d="M76.0 52.7L78.0 63.8L79.1 90.8L77.1 72.9Z" fill="#2d6f8d" stroke="#2d6f8d" stroke-width="0.3"/><path d="M79.1 90.8L81.0 67.4L82.2 50.3L80.2 58.9Z" fill="#277e8d" stroke="#277e8d" stroke-width="0.3"/><path d="M82.2 50.3L84.1 57.6L85.3 84.2L83.3 57.0Z" fill="#219a88" stroke="#219a88" stroke-width="0.3"/><path d="M85.3 84.2L87.2 65.9L88.3 49.3L86.4 63.8Z" fill="#23888c" stroke="#23888c" stroke-width="0.3"/><path d="M88.3 49.3L90.3 54.8L91.4 79.6L89.5 57.1Z" fill="#21a584" stroke="#21a584" stroke-width="0.3"/><path d="M91.4 79.6L93.4 80.7L94.5 53.5L92.5 65.7Z" fill="#2a768d" stroke="#2a768d" stroke-width="0.3"/><path d="M94.5 53.5L96.5 48.9L97.6 60.2L95.6 49.0Z" fill="#fae625" stroke="#fae625" stroke-width="0.3"/><path d="M20.4 64.1L22.4 96.6L23.5 90.1L21.6 66.4Z" fill="#31668d" stroke="#31668d" stroke-width="0.3"/><path d="M29.7 73.1L31.7 95.1L32.8 73.7L30.8 94.2Z" fill="#414084" stroke="#414084" stroke-width="0.3"/><path d="M32.8 73.7L34.7 57.0L35.9 59.5L33.9 57.8Z" fill="#b9db3b" stroke="#b9db3b" stroke-width="0.3"/><path d="M35.9 59.5L37.8 90.6L39.0 78.7L37.0 76.2Z" fill="#2b748d" stroke="#2b748d" stroke-width="0.3"/><path d="M23.5 90.1L25.5 62.0L26.6 57.4L24.6 75.5Z" fill="#21968a" stroke="#21968a" stroke-width="0.3"/><path d="M26.6 57.4L28.6 63.0L29.7 73.1L27.7 57.4Z" fill="#c1dd38" stroke="#c1dd38" stroke-width="0.3"/><path d="M39.0 78.7L40.9 57.9L42.0 56.8L40.1 58.3Z" fill="#70cc56" stroke="#70cc56" stroke-width="0.3"/><path d="M42.0 56.8L44.0 71.6L45.1 95.7L43.2 72.7Z" fill="#2e6e8d" stroke="#2e6e8d" stroke-width="0.3"/><path d="M45.1 95.7L47.1 72.1L48.2 55.5L46.2 66.0Z" fill="#2a768d" stroke="#2a768d" stroke-width="0.3"/><path d="M48.2 55.5L50.2 59.0L51.3 78.4L49.3 57.2Z" fill="#5fc460" stroke="#5fc460" stroke-width="0.3"/><path d="M54.4 56.0L56.4 57.5L57.5 77.1L55.5 55.2Z" fill="#66c75c" stroke="#66c75c" stroke-width="0.3"/><path d="M57.5 77.1L59.4 87.1L60.6 60.2L58.6 78.1Z" fill="#306a8d" stroke="#306a8d" stroke-width="0.3"/><path d="M60.6 60.2L62.5 53.5L63.6 59.8L61.7 51.9Z" fill="#fde725" stroke="#fde725" stroke-width="0.3"/><path d="M63.6 59.8L65.6 82.2L66.7 73.3L64.8 86.4Z" fill="#32638d" stroke="#32638d" stroke-width="0.3"/><path d="M51.3 78.4L53.3 76.1L54.4 56.0L52.4 79.1Z" fill="#238a8c" stroke="#238a8c" stroke-width="0.3"/><path d="M68.7 53.9L70.7 58.8L71.8 81.9L69.8 56.1Z" fill="#2cac7d" stroke="#2cac7d" stroke-width="0.3"/><path d="M71.8 81.9L73.8 78.9L74.9 55.5L72.9 71.5Z" fill="#277f8d" stroke="#277f8d" stroke-width="0.3"/><path d="M74.9 55.5L76.8 52.4L78.0 63.8L76.0 52.7Z" fill="#fbe625" stroke="#fbe625" stroke-width="0.3"/><path d="M78.0 63.8L79.9 87.1L81.0 67.4L79.1 90.8Z" fill="#3f4787" stroke="#3f4787" stroke-width="0.3"/><path d="M81.0 67.4L83.0 52.1L84.1 57.6L82.2 50.3Z" fill="#c0dc39" stroke="#c0dc39" stroke-width="0.3"/><path d="M84.1 57.6L86.1 86.8L87.2 65.9L85.3 84.2Z" fill="#33638d" stroke="#33638d" stroke-width="0.3"/><path d="M87.2 65.9L89.2 52.2L90.3 54.8L88.3 49.3Z" fill="#d0df34" stroke="#d0df34" stroke-width="0.3"/><path d="M90.3 54.8L92.3 69.1L93.4 80.7L91.4 79.6Z" fill="#2a758d" stroke="#2a758d" stroke-width="0.3"/><path d="M93.4 80.7L95.4 61.8L96.5 48.9L94.5 53.5Z" fill="#21a186" stroke="#21a186" stroke-width="0.3"/><path d="M31.7 95.1L33.6 63.8L34.7 57.0L32.8 73.7Z" fill="#23888c" stroke="#23888c" stroke-width="0.3"/><path d="M34.7 57.0L36.7 71.8L37.8 90.6L35.9 59.5Z" fill="#219889" stroke="#219889" stroke-width="0.3"/><path d="M22.4 96.6L24.4 65.0L25.5 62.0L23.5 90.1Z" fill="#2d6f8d" stroke="#2d6f8d" stroke-width="0.3"/><path d="M25.5 62.0L27.5 60.0L28.6 63.0L26.6 57.4Z" fill="#fde725" stroke="#fde725" stroke-width="0.3"/><path d="M28.6 63.0L30.5 87.6L31.7 95.1L29.7 73.1Z" fill="#32648d" stroke="#32648d" stroke-width="0.3"/><path d="M40.9 57.9L42.9 58.7L44.0 71.6L42.0 56.8Z" fill="#d1df33" stroke="#d1df33" stroke-width="0.3"/><path d="M44.0 71.6L46.0 97.8L47.1 72.1L45.1 95.7Z" fill="#452d7a" stroke="#452d7a" stroke-width="0.3"/><path d="M47.1 72.1L49.1 56.5L50.2 59.0L48.2 55.5Z" fill="#c5dd37" stroke="#c5dd37" stroke-width="0.3"/><path d="M56.4 57.5L58.3 74.6L59.4 87.1L57.5 77.1Z" fill="#29788d" stroke="#29788d" stroke-width="0.3"/><path d="M59.4 87.1L61.4 67.4L62.5 53.5L60.6 60.2Z" fill="#219789" stroke="#219789" stroke-width="0.3"/><path d="M62.5 53.5L64.5 59.7L65.6 82.2L63.6 59.8Z" fill="#2aab7f" stroke="#2aab7f" stroke-width="0.3"/><path d="M65.6 82.2L67.6 72.3L68.7 53.9L66.7 73.3Z" fill="#228b8c" stroke="#228b8c" stroke-width="0.3"/><path d="M37.8 90.6L39.8 71.5L40.9 57.9L39.0 78.7Z" fill="#27808d" stroke="#27808d" stroke-width="0.3"/><path d="M50.2 59.0L52.1 88.3L53.3 76.1L51.3 78.4Z" fill="#2a768d" stroke="#2a768d" stroke-width="0.3"/><path d="M53.3 76.1L55.2 56.5L56.4 57.5L54.4 56.0Z" fill="#82d24e" stroke="#82d24e" stroke-width="0.3"/><path d="M70.7 58.8L72.6 79.4L73.8 78.9L71.8 81.9Z" fill="#2a768d" stroke="#2a768d" stroke-width="0.3"/><path d="M73.8 78.9L75.7 62.2L76.8 52.4L74.9 55.5Z" fill="#47b96d" stroke="#47b96d" stroke-width="0.3"/><path d="M76.8 52.4L78.8 61.4L79.9 87.1L78.0 63.8Z" fill="#21938b" stroke="#21938b" stroke-width="0.3"/><path d="M79.9 87.1L81.9 68.3L83.0 52.1L81.0 67.4Z" fill="#24868c" stroke="#24868c" stroke-width="0.3"/><path d="M83.0 52.1L85.0 60.6L86.1 86.8L84.1 57.6Z" fill="#219789" stroke="#219789" stroke-width="0.3"/><path d="M86.1 86.8L88.1 71.5L89.2 52.2L87.2 65.9Z" fill="#277f8d" stroke="#277f8d" stroke-width="0.3"/><path d="M89.2 52.2L91.2 52.5L92.3 69.1L90.3 54.8Z" fill="#a7d841" stroke="#a7d841" stroke-width="0.3"/><path d="M92.3 69.1L94.2 93.8L95.4 61.8L93.4 80.7Z" fill="#414286" stroke="#414286" stroke-width="0.3"/><path d="M33.6 63.8L35.6 62.5L36.7 71.8L34.7 57.0Z" fill="#cfdf34" stroke="#cfdf34" stroke-width="0.3"/><path d="M24.4 65.0L26.3 60.3L27.5 60.0L25.5 62.0Z" fill="#fde725" stroke="#fde725" stroke-width="0.3"/><path d="M27.5 60.0L29.4 79.6L30.5 87.6L28.6 63.0Z" fill="#219b88" stroke="#219b88" stroke-width="0.3"/><path d="M30.5 87.6L32.5 73.9L33.6 63.8L31.7 95.1Z" fill="#31658d" stroke="#31658d" stroke-width="0.3"/><path d="M42.9 58.7L44.9 74.8L46.0 97.8L44.0 71.6Z" fill="#2d6f8d" stroke="#2d6f8d" stroke-width="0.3"/><path d="M46.0 97.8L47.9 68.6L49.1 56.5L47.1 72.1Z" fill="#2a778d" stroke="#2a778d" stroke-width="0.3"/><path d="M58.3 74.6L60.3 95.8L61.4 67.4L59.4 87.1Z" fill="#404487" stroke="#404487" stroke-width="0.3"/><path d="M61.4 67.4L63.4 55.3L64.5 59.7L62.5 53.5Z" fill="#f2e528" stroke="#f2e528" stroke-width="0.3"/><path d="M64.5 59.7L66.5 89.4L67.6 72.3L65.6 82.2Z" fill="#2f6b8d" stroke="#2f6b8d" stroke-width="0.3"/><path d="M67.6 72.3L69.5 54.7L70.7 58.8L68.7 53.9Z" fill="#a5d842" stroke="#a5d842" stroke-width="0.3"/><path d="M36.7 71.8L38.7 90.9L39.8 71.5L37.8 90.6Z" fill="#33628d" stroke="#33628d" stroke-width="0.3"/><path d="M39.8 71.5L41.8 58.4L42.9 58.7L40.9 57.9Z" fill="#eae32b" stroke="#eae32b" stroke-width="0.3"/><path d="M49.1 56.5L51.0 66.7L52.1 88.3L50.2 59.0Z" fill="#21a086" stroke="#21a086" stroke-width="0.3"/><path d="M52.1 88.3L54.1 71.8L55.2 56.5L53.3 76.1Z" fill="#25858c" stroke="#25858c" stroke-width="0.3"/><path d="M55.2 56.5L57.2 58.4L58.3 74.6L56.4 57.5Z" fill="#97d646" stroke="#97d646" stroke-width="0.3"/><path d="M72.6 79.4L74.6 88.8L75.7 62.2L73.8 78.9Z" fill="#32638d" stroke="#32638d" stroke-width="0.3"/><path d="M75.7 62.2L77.7 54.1L78.8 61.4L76.8 52.4Z" fill="#fde725" stroke="#fde725" stroke-width="0.3"/><path d="M78.8 61.4L80.8 92.0L81.9 68.3L79.9 87.1Z" fill="#38578b" stroke="#38578b" stroke-width="0.3"/><path d="M81.9 68.3L83.9 53.4L85.0 60.6L83.0 52.1Z" fill="#c5dd37" stroke="#c5dd37" stroke-width="0.3"/><path d="M85.0 60.6L86.9 85.1L88.1 71.5L86.1 86.8Z" fill="#345f8d" stroke="#345f8d" stroke-width="0.3"/><path d="M88.1 71.5L90.0 57.5L91.2 52.5L89.2 52.2Z" fill="#9cd645" stroke="#9cd645" stroke-width="0.3"/><path d="M91.2 52.5L93.1 64.2L94.2 93.8L92.3 69.1Z" fill="#2d708d" stroke="#2d708d" stroke-width="0.3"/><path d="M26.3 60.3L28.3 77.9L29.4 79.6L27.5 60.0Z" fill="#5fc460" stroke="#5fc460" stroke-width="0.3"/><path d="M29.4 79.6L31.4 82.3L32.5 73.9L30.5 87.6Z" fill="#2a778d" stroke="#2a778d" stroke-width="0.3"/><path d="M32.5 73.9L34.5 59.9L35.6 62.5L33.6 63.8Z" fill="#c5dd37" stroke="#c5dd37" stroke-width="0.3"/><path d="M44.9 74.8L46.8 89.3L47.9 68.6L46.0 97.8Z" fill="#3e4988" stroke="#3e4988" stroke-width="0.3"/><path d="M60.3 95.8L62.3 68.2L63.4 55.3L61.4 67.4Z" fill="#277f8d" stroke="#277f8d" stroke-width="0.3"/><path d="M63.4 55.3L65.3 65.7L66.5 89.4L64.5 59.7Z" fill="#219988" stroke="#219988" stroke-width="0.3"/><path d="M66.5 89.4L68.4 69.2L69.5 54.7L67.6 72.3Z" fill="#24868c" stroke="#24868c" stroke-width="0.3"/><path d="M69.5 54.7L71.5 59.4L72.6 79.4L70.7 58.8Z" fill="#53bf67" stroke="#53bf67" stroke-width="0.3"/><path d="M35.6 62.5L37.6 92.6L38.7 90.9L36.7 71.8Z" fill="#2b738d" stroke="#2b738d" stroke-width="0.3"/><path d="M38.7 90.9L40.6 66.7L41.8 58.4L39.8 71.5Z" fill="#219789" stroke="#219789" stroke-width="0.3"/><path d="M41.8 58.4L43.7 62.7L44.9 74.8L42.9 58.7Z" fill="#b9db3b" stroke="#b9db3b" stroke-width="0.3"/><path d="M47.9 68.6L49.9 58.1L51.0 66.7L49.1 56.5Z" fill="#eae32b" stroke="#eae32b" stroke-width="0.3"/><path d="M51.0 66.7L53.0 97.5L54.1 71.8L52.1 88.3Z" fill="#3b5189" stroke="#3b5189" stroke-width="0.3"/><path d="M54.1 71.8L56.1 58.0L57.2 58.4L55.2 56.5Z" fill="#dae130" stroke="#dae130" stroke-width="0.3"/><path d="M57.2 58.4L59.2 73.5L60.3 95.8L58.3 74.6Z" fill="#2e6c8d" stroke="#2e6c8d" stroke-width="0.3"/><path d="M74.6 88.8L76.6 65.7L77.7 54.1L75.7 62.2Z" fill="#219789" stroke="#219789" stroke-width="0.3"/><path d="M77.7 54.1L79.7 66.0L80.8 92.0L78.8 61.4Z" fill="#228c8c" stroke="#228c8c" stroke-width="0.3"/><path d="M80.8 92.0L82.7 65.9L83.9 53.4L81.9 68.3Z" fill="#25838d" stroke="#25838d" stroke-width="0.3"/><path d="M83.9 53.4L85.8 61.4L86.9 85.1L85.0 60.6Z" fill="#21a086" stroke="#21a086" stroke-width="0.3"/><path d="M86.9 85.1L88.9 81.1L90.0 57.5L88.1 71.5Z" fill="#2a768d" stroke="#2a768d" stroke-width="0.3"/><path d="M90.0 57.5L92.0 53.2L93.1 64.2L91.2 52.5Z" fill="#fde725" stroke="#fde725" stroke-width="0.3"/><path d="M28.3 77.9L30.3 86.1L31.4 82.3L29.4 79.6Z" fill="#26818d" stroke="#26818d" stroke-width="0.3"/><path d="M31.4 82.3L33.4 60.6L34.5 59.9L32.5 73.9Z" fill="#5dc361" stroke="#5dc361" stroke-width="0.3"/><path d="M62.3 68.2L64.2 56.8L65.3 65.7L63.4 55.3Z" fill="#e7e32c" stroke="#e7e32c" stroke-width="0.3"/><path d="M65.3 65.7L67.3 96.7L68.4 69.2L66.5 89.4Z" fill="#3b5089" stroke="#3b5089" stroke-width="0.3"/><path d="M68.4 69.2L70.4 56.5L71.5 59.4L69.5 54.7Z" fill="#ebe42a" stroke="#ebe42a" stroke-width="0.3"/><path d="M71.5 59.4L73.5 75.7L74.6 88.8L72.6 79.4Z" fill="#2c728d" stroke="#2c728d" stroke-width="0.3"/><path d="M34.5 59.9L36.4 81.9L37.6 92.6L35.6 62.5Z" fill="#21928b" stroke="#21928b" stroke-width="0.3"/><path d="M37.6 92.6L39.5 78.6L40.6 66.7L38.7 90.9Z" fill="#31678d" stroke="#31678d" stroke-width="0.3"/><path d="M40.6 66.7L42.6 59.4L43.7 62.7L41.8 58.4Z" fill="#fde725" stroke="#fde725" stroke-width="0.3"/><path d="M43.7 62.7L45.7 90.3L46.8 89.3L44.9 74.8Z" fill="#29788d" stroke="#29788d" stroke-width="0.3"/><path d="M46.8 89.3L48.8 61.0L49.9 58.1L47.9 68.6Z" fill="#21a485" stroke="#21a485" stroke-width="0.3"/><path d="M49.9 58.1L51.9 78.9L53.0 97.5L51.0 66.7Z" fill="#29798d" stroke="#29798d" stroke-width="0.3"/><path d="M53.0 97.5L55.0 70.5L56.1 58.0L54.1 71.8Z" fill="#287b8d" stroke="#287b8d" stroke-width="0.3"/><path d="M56.1 58.0L58.0 60.0L59.2 73.5L57.2 58.4Z" fill="#c1dd38" stroke="#c1dd38" stroke-width="0.3"/><path d="M59.2 73.5L61.1 93.0L62.3 68.2L60.3 95.8Z" fill="#3f4687" stroke="#3f4687" stroke-width="0.3"/><path d="M76.6 65.7L78.5 55.9L79.7 66.0L77.7 54.1Z" fill="#f2e528" stroke="#f2e528" stroke-width="0.3"/><path d="M79.7 66.0L81.6 93.4L82.7 65.9L80.8 92.0Z" fill="#39558a" stroke="#39558a" stroke-width="0.3"/><path d="M82.7 65.9L84.7 55.1L85.8 61.4L83.9 53.4Z" fill="#fde725" stroke="#fde725" stroke-width="0.3"/><path d="M85.8 61.4L87.8 79.8L88.9 81.1L86.9 85.1Z" fill="#2f6b8d" stroke="#2f6b8d" stroke-width="0.3"/><path d="M88.9 81.1L90.9 62.1L92.0 53.2L90.0 57.5Z" fill="#3bb375" stroke="#3bb375" stroke-width="0.3"/><path d="M30.3 86.1L32.2 61.8L33.4 60.6L31.4 82.3Z" fill="#2dad7d" stroke="#2dad7d" stroke-width="0.3"/><path d="M64.2 56.8L66.2 75.3L67.3 96.7L65.3 65.7Z" fill="#287c8d" stroke="#287c8d" stroke-width="0.3"/><path d="M67.3 96.7L69.3 69.4L70.4 56.5L68.4 69.2Z" fill="#277d8d" stroke="#277d8d" stroke-width="0.3"/><path d="M70.4 56.5L72.4 59.6L73.5 75.7L71.5 59.4Z" fill="#91d449" stroke="#91d449" stroke-width="0.3"/><path d="M73.5 75.7L75.4 91.3L76.6 65.7L74.6 88.8Z" fill="#375a8b" stroke="#375a8b" stroke-width="0.3"/><path d="M33.4 60.6L35.3 76.9L36.4 81.9L34.5 59.9Z" fill="#61c55f" stroke="#61c55f" stroke-width="0.3"/><path d="M36.4 81.9L38.4 89.9L39.5 78.6L37.6 92.6Z" fill="#37598b" stroke="#37598b" stroke-width="0.3"/><path d="M39.5 78.6L41.5 62.0L42.6 59.4L40.6 66.7Z" fill="#9bd645" stroke="#9bd645" stroke-width="0.3"/><path d="M42.6 59.4L44.6 76.1L45.7 90.3L43.7 62.7Z" fill="#219e87" stroke="#219e87" stroke-width="0.3"/><path d="M45.7 90.3L47.7 71.6L48.8 61.0L46.8 89.3Z" fill="#26818d" stroke="#26818d" stroke-width="0.3"/><path d="M48.8 61.0L50.8 65.6L51.9 78.9L49.9 58.1Z" fill="#86d34c" stroke="#86d34c" stroke-width="0.3"/><path d="M51.9 78.9L53.8 91.0L55.0 70.5L53.0 97.5Z" fill="#3f4687" stroke="#3f4687" stroke-width="0.3"/><path d="M55.0 70.5L56.9 59.2L58.0 60.0L56.1 58.0Z" fill="#fde725" stroke="#fde725" stroke-width="0.3"/><path d="M58.0 60.0L60.0 80.9L61.1 93.0L59.2 73.5Z" fill="#29788d" stroke="#29788d" stroke-width="0.3"/><path d="M61.1 93.0L63.1 62.7L64.2 56.8L62.3 68.2Z" fill="#21958a" stroke="#21958a" stroke-width="0.3"/><path d="M78.5 55.9L80.5 74.7L81.6 93.4L79.7 66.0Z" fill="#26818d" stroke="#26818d" stroke-width="0.3"/><path d="M81.6 93.4L83.6 66.4L84.7 55.1L82.7 65.9Z" fill="#238a8c" stroke="#238a8c" stroke-width="0.3"/><path d="M84.7 55.1L86.7 60.4L87.8 79.8L85.8 61.4Z" fill="#51be68" stroke="#51be68" stroke-width="0.3"/><path d="M87.8 79.8L89.8 87.0L90.9 62.1L88.9 81.1Z" fill="#2f6c8d" stroke="#2f6c8d" stroke-width="0.3"/><path d="M66.2 75.3L68.2 93.3L69.3 69.4L67.3 96.7Z" fill="#404587" stroke="#404587" stroke-width="0.3"/><path d="M69.3 69.4L71.2 58.5L72.4 59.6L70.4 56.5Z" fill="#fde725" stroke="#fde725" stroke-width="0.3"/><path d="M72.4 59.6L74.3 78.5L75.4 91.3L73.5 75.7Z" fill="#2a778d" stroke="#2a778d" stroke-width="0.3"/><path d="M75.4 91.3L77.4 62.6L78.5 55.9L76.6 65.7Z" fill="#219889" stroke="#219889" stroke-width="0.3"/><path d="M32.2 61.8L34.2 76.0L35.3 76.9L33.4 60.6Z" fill="#acd940" stroke="#acd940" stroke-width="0.3"/><path d="M35.3 76.9L37.3 98.1L38.4 89.9L36.4 81.9Z" fill="#39548a" stroke="#39548a" stroke-width="0.3"/><path d="M38.4 89.9L40.4 66.9L41.5 62.0L39.5 78.6Z" fill="#219e87" stroke="#219e87" stroke-width="0.3"/><path d="M41.5 62.0L43.5 68.3L44.6 76.1L42.6 59.4Z" fill="#c3dd38" stroke="#c3dd38" stroke-width="0.3"/><path d="M44.6 76.1L46.5 85.6L47.7 71.6L45.7 90.3Z" fill="#29788d" stroke="#29788d" stroke-width="0.3"/><path d="M47.7 71.6L49.6 60.7L50.8 65.6L48.8 61.0Z" fill="#f3e528" stroke="#f3e528" stroke-width="0.3"/><path d="M50.8 65.6L52.7 90.7L53.8 91.0L51.9 78.9Z" fill="#2d6f8d" stroke="#2d6f8d" stroke-width="0.3"/><path d="M53.8 91.0L55.8 68.6L56.9 59.2L55.0 70.5Z" fill="#219988" stroke="#219988" stroke-width="0.3"/><path d="M56.9 59.2L58.9 65.8L60.0 80.9L58.0 60.0Z" fill="#6ecb57" stroke="#6ecb57" stroke-width="0.3"/><path d="M60.0 80.9L62.0 79.6L63.1 62.7L61.1 93.0Z" fill="#2d6f8d" stroke="#2d6f8d" stroke-width="0.3"/><path d="M63.1 62.7L65.1 61.5L66.2 75.3L64.2 56.8Z" fill="#add93f" stroke="#add93f" stroke-width="0.3"/><path d="M80.5 74.7L82.5 91.0L83.6 66.4L81.6 93.4Z" fill="#39538a" stroke="#39538a" stroke-width="0.3"/><path d="M83.6 66.4L85.6 57.2L86.7 60.4L84.7 55.1Z" fill="#fde725" stroke="#fde725" stroke-width="0.3"/><path d="M86.7 60.4L88.6 79.2L89.8 87.0L87.8 79.8Z" fill="#2a778d" stroke="#2a778d" stroke-width="0.3"/><path d="M68.2 93.3L70.1 70.8L71.2 58.5L69.3 69.4Z" fill="#228e8c" stroke="#228e8c" stroke-width="0.3"/><path d="M71.2 58.5L73.2 62.7L74.3 78.5L72.4 59.6Z" fill="#82d24e" stroke="#82d24e" stroke-width="0.3"/><path d="M74.3 78.5L76.3 82.5L77.4 62.6L75.4 91.3Z" fill="#2e6d8d" stroke="#2e6d8d" stroke-width="0.3"/><path d="M77.4 62.6L79.4 60.0L80.5 74.7L78.5 55.9Z" fill="#a9d841" stroke="#a9d841" stroke-width="0.3"/><path d="M34.2 76.0L36.2 101.8L37.3 98.1L35.3 76.9Z" fill="#3d4b88" stroke="#3d4b88" stroke-width="0.3"/><path d="M37.3 98.1L39.3 71.4L40.4 66.9L38.4 89.9Z" fill="#2a758d" stroke="#2a758d" stroke-width="0.3"/><path d="M40.4 66.9L42.3 65.0L43.5 68.3L41.5 62.0Z" fill="#fde725" stroke="#fde725" stroke-width="0.3"/><path d="M43.5 68.3L45.4 99.7L46.5 85.6L44.6 76.1Z" fill="#30698d" stroke="#30698d" stroke-width="0.3"/><path d="M46.5 85.6L48.5 62.2L49.6 60.7L47.7 71.6Z" fill="#51be68" stroke="#51be68" stroke-width="0.3"/><path d="M49.6 60.7L51.6 76.4L52.7 90.7L50.8 65.6Z" fill="#219d87" stroke="#219d87" stroke-width="0.3"/><path d="M52.7 90.7L54.7 84.1L55.8 68.6L53.8 91.0Z" fill="#31678d" stroke="#31678d" stroke-width="0.3"/><path d="M55.8 68.6L57.8 60.4L58.9 65.8L56.9 59.2Z" fill="#fde725" stroke="#fde725" stroke-width="0.3"/><path d="M58.9 65.8L60.9 101.8L62.0 79.6L60.0 80.9Z" fill="#37588b" stroke="#37588b" stroke-width="0.3"/><path d="M62.0 79.6L63.9 59.8L65.1 61.5L63.1 62.7Z" fill="#87d34c" stroke="#87d34c" stroke-width="0.3"/><path d="M65.1 61.5L67.0 83.0L68.2 93.3L66.2 75.3Z" fill="#2a768d" stroke="#2a768d" stroke-width="0.3"/><path d="M82.5 91.0L84.4 69.4L85.6 57.2L83.6 66.4Z" fill="#21958a" stroke="#21958a" stroke-width="0.3"/><path d="M85.6 57.2L87.5 61.8L88.6 79.2L86.7 60.4Z" fill="#6ecb57" stroke="#6ecb57" stroke-width="0.3"/><path d="M70.1 70.8L72.1 59.4L73.2 62.7L71.2 58.5Z" fill="#fde725" stroke="#fde725" stroke-width="0.3"/><path d="M73.2 62.7L75.2 92.4L76.3 82.5L74.3 78.5Z" fill="#2b748d" stroke="#2b748d" stroke-width="0.3"/><path d="M76.3 82.5L78.3 59.6L79.4 60.0L77.4 62.6Z" fill="#60c55f" stroke="#60c55f" stroke-width="0.3"/><path d="M79.4 60.0L81.3 81.2L82.5 91.0L80.5 74.7Z" fill="#287c8d" stroke="#287c8d" stroke-width="0.3"/><path d="M36.2 101.8L38.1 73.8L39.3 71.4L37.3 98.1Z" fill="#365b8c" stroke="#365b8c" stroke-width="0.3"/><path d="M39.3 71.4L41.2 64.3L42.3 65.0L40.4 66.9Z" fill="#fde725" stroke="#fde725" stroke-width="0.3"/><path d="M45.4 99.7L47.4 67.0L48.5 62.2L46.5 85.6Z" fill="#26818d" stroke="#26818d" stroke-width="0.3"/><path d="M48.5 62.2L50.5 68.3L51.6 76.4L49.6 60.7Z" fill="#d1df33" stroke="#d1df33" stroke-width="0.3"/><path d="M51.6 76.4L53.6 102.2L54.7 84.1L52.7 90.7Z" fill="#423d83" stroke="#423d83" stroke-width="0.3"/><path d="M54.7 84.1L56.7 63.2L57.8 60.4L55.8 68.6Z" fill="#63c65d" stroke="#63c65d" stroke-width="0.3"/><path d="M57.8 60.4L59.7 82.4L60.9 101.8L58.9 65.8Z" fill="#2a778d" stroke="#2a778d" stroke-width="0.3"/><path d="M60.9 101.8L62.8 67.9L63.9 59.8L62.0 79.6Z" fill="#2a778d" stroke="#2a778d" stroke-width="0.3"/><path d="M63.9 59.8L65.9 67.6L67.0 83.0L65.1 61.5Z" fill="#60c55f" stroke="#60c55f" stroke-width="0.3"/><path d="M67.0 83.0L69.0 91.8L70.1 70.8L68.2 93.3Z" fill="#39548a" stroke="#39548a" stroke-width="0.3"/><path d="M42.3 65.0L44.3 99.2L45.4 99.7L43.5 68.3Z" fill="#2f6c8d" stroke="#2f6c8d" stroke-width="0.3"/><path d="M84.4 69.4L86.4 58.8L87.5 61.8L85.6 57.2Z" fill="#fde725" stroke="#fde725" stroke-width="0.3"/><path d="M72.1 59.4L74.1 72.8L75.2 92.4L73.2 62.7Z" fill="#219b88" stroke="#219b88" stroke-width="0.3"/><path d="M75.2 92.4L77.1 71.8L78.3 59.6L76.3 82.5Z" fill="#25848c" stroke="#25848c" stroke-width="0.3"/><path d="M78.3 59.6L80.2 64.8L81.3 81.2L79.4 60.0Z" fill="#6ecb57" stroke="#6ecb57" stroke-width="0.3"/><path d="M81.3 81.2L83.3 92.8L84.4 69.4L82.5 91.0Z" fill="#37588b" stroke="#37588b" stroke-width="0.3"/><path d="M38.1 73.8L40.1 65.0L41.2 64.3L39.3 71.4Z" fill="#fde725" stroke="#fde725" stroke-width="0.3"/><path d="M47.4 67.0L49.4 64.9L50.5 68.3L48.5 62.2Z" fill="#fde725" stroke="#fde725" stroke-width="0.3"/><path d="M50.5 68.3L52.4 92.1L53.6 102.2L51.6 76.4Z" fill="#365c8c" stroke="#365c8c" stroke-width="0.3"/><path d="M53.6 102.2L55.5 71.3L56.7 63.2L54.7 84.1Z" fill="#2b748d" stroke="#2b748d" stroke-width="0.3"/><path d="M56.7 63.2L58.6 70.6L59.7 82.4L57.8 60.4Z" fill="#74ce54" stroke="#74ce54" stroke-width="0.3"/><path d="M59.7 82.4L61.7 82.4L62.8 67.9L60.9 101.8Z" fill="#37598b" stroke="#37598b" stroke-width="0.3"/><path d="M62.8 67.9L64.8 61.6L65.9 67.6L63.9 59.8Z" fill="#fde725" stroke="#fde725" stroke-width="0.3"/><path d="M65.9 67.6L67.9 90.0L69.0 91.8L67.0 83.0Z" fill="#2f6b8d" stroke="#2f6b8d" stroke-width="0.3"/><path d="M69.0 91.8L71.0 67.5L72.1 59.4L70.1 70.8Z" fill="#219d87" stroke="#219d87" stroke-width="0.3"/><path d="M41.2 64.3L43.2 94.3L44.3 99.2L42.3 65.0Z" fill="#26808d" stroke="#26808d" stroke-width="0.3"/><path d="M44.3 99.2L46.3 72.6L47.4 67.0L45.4 99.7Z" fill="#31668d" stroke="#31668d" stroke-width="0.3"/><path d="M74.1 72.8L76.0 92.4L77.1 71.8L75.2 92.4Z" fill="#2f6c8d" stroke="#2f6c8d" stroke-width="0.3"/><path d="M77.1 71.8L79.1 60.2L80.2 64.8L78.3 59.6Z" fill="#fde725" stroke="#fde725" stroke-width="0.3"/><path d="M80.2 64.8L82.2 84.6L83.3 92.8L81.3 81.2Z" fill="#2d6f8d" stroke="#2d6f8d" stroke-width="0.3"/><path d="M83.3 92.8L85.3 69.3L86.4 58.8L84.4 69.4Z" fill="#21958a" stroke="#21958a" stroke-width="0.3"/><path d="M40.1 65.0L42.1 93.5L43.2 94.3L41.2 64.3Z" fill="#21958a" stroke="#21958a" stroke-width="0.3"/><path d="M43.2 94.3L45.2 77.1L46.3 72.6L44.3 99.2Z" fill="#30698d" stroke="#30698d" stroke-width="0.3"/><path d="M46.3 72.6L48.2 64.4L49.4 64.9L47.4 67.0Z" fill="#fde725" stroke="#fde725" stroke-width="0.3"/><path d="M49.4 64.9L51.3 83.2L52.4 92.1L50.5 68.3Z" fill="#219b88" stroke="#219b88" stroke-width="0.3"/><path d="M52.4 92.1L54.4 81.6L55.5 71.3L53.6 102.2Z" fill="#39538a" stroke="#39538a" stroke-width="0.3"/><path d="M55.5 71.3L57.5 65.0L58.6 70.6L56.7 63.2Z" fill="#fde725" stroke="#fde725" stroke-width="0.3"/><path d="M58.6 70.6L60.6 100.0L61.7 82.4L59.7 82.4Z" fill="#31668d" stroke="#31668d" stroke-width="0.3"/><path d="M61.7 82.4L63.7 63.6L64.8 61.6L62.8 67.9Z" fill="#82d24e" stroke="#82d24e" stroke-width="0.3"/><path d="M64.8 61.6L66.8 74.4L67.9 90.0L65.9 67.6Z" fill="#21a385" stroke="#21a385" stroke-width="0.3"/><path d="M67.9 90.0L69.8 83.4L71.0 67.5L69.0 91.8Z" fill="#2e6e8d" stroke="#2e6e8d" stroke-width="0.3"/><path d="M71.0 67.5L72.9 63.0L74.1 72.8L72.1 59.4Z" fill="#e7e32c" stroke="#e7e32c" stroke-width="0.3"/><path d="M76.0 92.4L78.0 66.7L79.1 60.2L77.1 71.8Z" fill="#21a086" stroke="#21a086" stroke-width="0.3"/><path d="M79.1 60.2L81.1 68.5L82.2 84.6L80.2 64.8Z" fill="#52be67" stroke="#52be67" stroke-width="0.3"/><path d="M82.2 84.6L84.2 89.6L85.3 69.3L83.3 92.8Z" fill="#34608d" stroke="#34608d" stroke-width="0.3"/><path d="M42.1 93.5L44.0 79.4L45.2 77.1L43.2 94.3Z" fill="#29788d" stroke="#29788d" stroke-width="0.3"/><path d="M45.2 77.1L47.1 65.2L48.2 64.4L46.3 72.6Z" fill="#ebe32b" stroke="#ebe32b" stroke-width="0.3"/><path d="M48.2 64.4L50.2 78.2L51.3 83.2L49.4 64.9Z" fill="#76cf53" stroke="#76cf53" stroke-width="0.3"/><path d="M51.3 83.2L53.3 91.8L54.4 81.6L52.4 92.1Z" fill="#2e6d8d" stroke="#2e6d8d" stroke-width="0.3"/><path d="M54.4 81.6L56.4 64.0L57.5 65.0L55.5 71.3Z" fill="#9bd645" stroke="#9bd645" stroke-width="0.3"/><path d="M57.5 65.0L59.5 95.0L60.6 100.0L58.6 70.6Z" fill="#2b738d" stroke="#2b738d" stroke-width="0.3"/><path d="M60.6 100.0L62.6 71.3L63.7 63.6L61.7 82.4Z" fill="#26828d" stroke="#26828d" stroke-width="0.3"/><path d="M63.7 63.6L65.6 66.1L66.8 74.4L64.8 61.6Z" fill="#fde725" stroke="#fde725" stroke-width="0.3"/><path d="M66.8 74.4L68.7 104.0L69.8 83.4L67.9 90.0Z" fill="#404487" stroke="#404487" stroke-width="0.3"/><path d="M69.8 83.4L71.8 62.5L72.9 63.0L71.0 67.5Z" fill="#76cf53" stroke="#76cf53" stroke-width="0.3"/><path d="M72.9 63.0L74.9 91.6L76.0 92.4L74.1 72.8Z" fill="#26818d" stroke="#26818d" stroke-width="0.3"/><path d="M44.0 79.4L46.0 66.3L47.1 65.2L45.2 77.1Z" fill="#cade35" stroke="#cade35" stroke-width="0.3"/><path d="M47.1 65.2L49.1 76.0L50.2 78.2L48.2 64.4Z" fill="#dbe130" stroke="#dbe130" stroke-width="0.3"/><path d="M50.2 78.2L52.2 100.5L53.3 91.8L51.3 83.2Z" fill="#33618d" stroke="#33618d" stroke-width="0.3"/><path d="M53.3 91.8L55.3 65.8L56.4 64.0L54.4 81.6Z" fill="#27aa81" stroke="#27aa81" stroke-width="0.3"/><path d="M56.4 64.0L58.3 84.8L59.5 95.0L57.5 65.0Z" fill="#219c88" stroke="#219c88" stroke-width="0.3"/><path d="M59.5 95.0L61.4 81.9L62.6 71.3L60.6 100.0Z" fill="#355e8c" stroke="#355e8c" stroke-width="0.3"/><path d="M62.6 71.3L64.5 63.9L65.6 66.1L63.7 63.6Z" fill="#fde725" stroke="#fde725" stroke-width="0.3"/><path d="M65.6 66.1L67.6 89.0L68.7 104.0L66.8 74.4Z" fill="#31678d" stroke="#31678d" stroke-width="0.3"/><path d="M68.7 104.0L70.7 69.6L71.8 62.5L69.8 83.4Z" fill="#29788d" stroke="#29788d" stroke-width="0.3"/><path d="M71.8 62.5L73.8 75.9L74.9 91.6L72.9 63.0Z" fill="#21a784" stroke="#21a784" stroke-width="0.3"/><path d="M74.9 91.6L76.9 81.1L78.0 66.7L76.0 92.4Z" fill="#2b758d" stroke="#2b758d" stroke-width="0.3"/><path d="M78.0 66.7L80.0 62.3L81.1 68.5L79.1 60.2Z" fill="#fde725" stroke="#fde725" stroke-width="0.3"/><path d="M81.1 68.5L83.0 92.9L84.2 89.6L82.2 84.6Z" fill="#2f6c8d" stroke="#2f6c8d" stroke-width="0.3"/><path d="M80.0 62.3L81.9 75.8L83.0 92.9L81.1 68.5Z" fill="#219d87" stroke="#219d87" stroke-width="0.3"/><path d="M46.0 66.3L48.0 76.1L49.1 76.0L47.1 65.2Z" fill="#fde725" stroke="#fde725" stroke-width="0.3"/><path d="M49.1 76.0L51.1 106.7L52.2 100.5L50.2 78.2Z" fill="#3a528a" stroke="#3a528a" stroke-width="0.3"/><path d="M52.2 100.5L54.1 68.7L55.3 65.8L53.3 91.8Z" fill="#23888c" stroke="#23888c" stroke-width="0.3"/><path d="M55.3 65.8L57.2 78.6L58.3 84.8L56.4 64.0Z" fill="#76cf52" stroke="#76cf52" stroke-width="0.3"/><path d="M58.3 84.8L60.3 93.1L61.4 81.9L59.5 95.0Z" fill="#31668d" stroke="#31668d" stroke-width="0.3"/><path d="M61.4 81.9L63.4 66.3L64.5 63.9L62.6 71.3Z" fill="#acd940" stroke="#acd940" stroke-width="0.3"/><path d="M64.5 63.9L66.5 77.8L67.6 89.0L65.6 66.1Z" fill="#40b672" stroke="#40b672" stroke-width="0.3"/><path d="M67.6 89.0L69.6 81.4L70.7 69.6L68.7 104.0Z" fill="#365b8c" stroke="#365b8c" stroke-width="0.3"/><path d="M70.7 69.6L72.7 67.2L73.8 75.9L71.8 62.5Z" fill="#dee12f" stroke="#dee12f" stroke-width="0.3"/><path d="M73.8 75.9L75.7 100.4L76.9 81.1L74.9 91.6Z" fill="#37588b" stroke="#37588b" stroke-width="0.3"/><path d="M76.9 81.1L78.8 65.2L80.0 62.3L78.0 66.7Z" fill="#a5d842" stroke="#a5d842" stroke-width="0.3"/><path d="M48.0 76.1L49.9 109.8L51.1 106.7L49.1 76.0Z" fill="#3e4988" stroke="#3e4988" stroke-width="0.3"/><path d="M51.1 106.7L53.0 71.4L54.1 68.7L52.2 100.5Z" fill="#2f6b8d" stroke="#2f6b8d" stroke-width="0.3"/><path d="M54.1 68.7L56.1 75.3L57.2 78.6L55.3 65.8Z" fill="#dae130" stroke="#dae130" stroke-width="0.3"/><path d="M57.2 78.6L59.2 103.6L60.3 93.1L58.3 84.8Z" fill="#37598b" stroke="#37598b" stroke-width="0.3"/><path d="M60.3 93.1L62.3 71.3L63.4 66.3L61.4 81.9Z" fill="#21a385" stroke="#21a385" stroke-width="0.3"/><path d="M63.4 66.3L65.4 71.2L66.5 77.8L64.5 63.9Z" fill="#efe429" stroke="#efe429" stroke-width="0.3"/><path d="M66.5 77.8L68.5 95.5L69.6 81.4L67.6 89.0Z" fill="#2a778d" stroke="#2a778d" stroke-width="0.3"/><path d="M69.6 81.4L71.5 64.9L72.7 67.2L70.7 69.6Z" fill="#add93f" stroke="#add93f" stroke-width="0.3"/><path d="M72.7 67.2L74.6 93.4L75.7 100.4L73.8 75.9Z" fill="#2d708d" stroke="#2d708d" stroke-width="0.3"/><path d="M75.7 100.4L77.7 75.2L78.8 65.2L76.9 81.1Z" fill="#26818d" stroke="#26818d" stroke-width="0.3"/><path d="M78.8 65.2L80.8 66.5L81.9 75.8L80.0 62.3Z" fill="#f8e626" stroke="#f8e626" stroke-width="0.3"/><path d="M49.9 109.8L51.9 73.0L53.0 71.4L51.1 106.7Z" fill="#37598b" stroke="#37598b" stroke-width="0.3"/><path d="M53.0 71.4L55.0 74.1L56.1 75.3L54.1 68.7Z" fill="#fde725" stroke="#fde725" stroke-width="0.3"/><path d="M56.1 75.3L58.1 107.8L59.2 103.6L57.2 78.6Z" fill="#3a518a" stroke="#3a518a" stroke-width="0.3"/><path d="M59.2 103.6L61.2 77.1L62.3 71.3L60.3 93.1Z" fill="#2c738d" stroke="#2c738d" stroke-width="0.3"/><path d="M62.3 71.3L64.2 68.3L65.4 71.2L63.4 66.3Z" fill="#fde725" stroke="#fde725" stroke-width="0.3"/><path d="M65.4 71.2L67.3 107.5L68.5 95.5L66.5 77.8Z" fill="#355d8c" stroke="#355d8c" stroke-width="0.3"/><path d="M68.5 95.5L70.4 67.4L71.5 64.9L69.6 81.4Z" fill="#21a285" stroke="#21a285" stroke-width="0.3"/><path d="M71.5 64.9L73.5 81.0L74.6 93.4L72.7 67.2Z" fill="#21a584" stroke="#21a584" stroke-width="0.3"/><path d="M74.6 93.4L76.6 89.4L77.7 75.2L75.7 100.4Z" fill="#39548a" stroke="#39548a" stroke-width="0.3"/><path d="M77.7 75.2L79.7 64.7L80.8 66.5L78.8 65.2Z" fill="#fde725" stroke="#fde725" stroke-width="0.3"/><path d="M51.9 73.0L53.9 74.5L55.0 74.1L53.0 71.4Z" fill="#fde725" stroke="#fde725" stroke-width="0.3"/><path d="M55.0 74.1L57.0 104.3L58.1 107.8L56.1 75.3Z" fill="#355d8c" stroke="#355d8c" stroke-width="0.3"/><path d="M58.1 107.8L60.0 82.4L61.2 77.1L59.2 103.6Z" fill="#3d4c88" stroke="#3d4c88" stroke-width="0.3"/><path d="M61.2 77.1L63.1 67.9L64.2 68.3L62.3 71.3Z" fill="#fde725" stroke="#fde725" stroke-width="0.3"/><path d="M64.2 68.3L66.2 97.2L67.3 107.5L65.4 71.2Z" fill="#2e6e8d" stroke="#2e6e8d" stroke-width="0.3"/><path d="M67.3 107.5L69.3 72.8L70.4 67.4L68.5 95.5Z" fill="#2e6d8d" stroke="#2e6d8d" stroke-width="0.3"/><path d="M70.4 67.4L72.4 73.4L73.5 81.0L71.5 64.9Z" fill="#cbde35" stroke="#cbde35" stroke-width="0.3"/><path d="M73.5 81.0L75.5 105.8L76.6 89.4L74.6 93.4Z" fill="#414386" stroke="#414386" stroke-width="0.3"/><path d="M76.6 89.4L78.6 69.0L79.7 64.7L77.7 75.2Z" fill="#52be67" stroke="#52be67" stroke-width="0.3"/><path d="M53.9 74.5L55.8 104.0L57.0 104.3L55.0 74.1Z" fill="#2c738d" stroke="#2c738d" stroke-width="0.3"/><path d="M57.0 104.3L58.9 86.4L60.0 82.4L58.1 107.8Z" fill="#414386" stroke="#414386" stroke-width="0.3"/><path d="M60.0 82.4L62.0 68.8L63.1 67.9L61.2 77.1Z" fill="#d0df33" stroke="#d0df33" stroke-width="0.3"/><path d="M63.1 67.9L65.1 90.7L66.2 97.2L64.2 68.3Z" fill="#219d87" stroke="#219d87" stroke-width="0.3"/><path d="M66.2 97.2L68.2 79.6L69.3 72.8L67.3 107.5Z" fill="#345f8d" stroke="#345f8d" stroke-width="0.3"/><path d="M69.3 72.8L71.3 69.7L72.4 73.4L70.4 67.4Z" fill="#fde725" stroke="#fde725" stroke-width="0.3"/><path d="M72.4 73.4L74.4 98.0L75.5 105.8L73.5 81.0Z" fill="#365c8c" stroke="#365c8c" stroke-width="0.3"/><path d="M75.5 105.8L77.4 77.4L78.6 69.0L76.6 89.4Z" fill="#2c728d" stroke="#2c728d" stroke-width="0.3"/><path d="M55.8 104.0L57.8 88.4L58.9 86.4L57.0 104.3Z" fill="#3b5089" stroke="#3b5089" stroke-width="0.3"/><path d="M58.9 86.4L60.9 70.2L62.0 68.8L60.0 82.4Z" fill="#95d547" stroke="#95d547" stroke-width="0.3"/><path d="M62.0 68.8L64.0 86.9L65.1 90.7L63.1 67.9Z" fill="#56c065" stroke="#56c065" stroke-width="0.3"/><path d="M65.1 90.7L67.1 86.3L68.2 79.6L66.2 97.2Z" fill="#277e8d" stroke="#277e8d" stroke-width="0.3"/><path d="M68.2 79.6L70.1 68.9L71.3 69.7L69.3 72.8Z" fill="#fce625" stroke="#fce625" stroke-width="0.3"/><path d="M71.3 69.7L73.2 88.7L74.4 98.0L72.4 73.4Z" fill="#21958a" stroke="#21958a" stroke-width="0.3"/><path d="M74.4 98.0L76.3 87.9L77.4 77.4L75.5 105.8Z" fill="#3b4f89" stroke="#3b4f89" stroke-width="0.3"/><path d="M57.8 88.4L59.8 71.4L60.9 70.2L58.9 86.4Z" fill="#77cf52" stroke="#77cf52" stroke-width="0.3"/><path d="M60.9 70.2L62.9 85.3L64.0 86.9L62.0 68.8Z" fill="#8ed44a" stroke="#8ed44a" stroke-width="0.3"/><path d="M64.0 86.9L65.9 92.1L67.1 86.3L65.1 90.7Z" fill="#228d8c" stroke="#228d8c" stroke-width="0.3"/><path d="M67.1 86.3L69.0 69.8L70.1 68.9L68.2 79.6Z" fill="#a2d743" stroke="#a2d743" stroke-width="0.3"/><path d="M70.1 68.9L72.1 82.5L73.2 88.7L71.3 69.7Z" fill="#6ecb57" stroke="#6ecb57" stroke-width="0.3"/><path d="M73.2 88.7L75.2 99.0L76.3 87.9L74.4 98.0Z" fill="#33618d" stroke="#33618d" stroke-width="0.3"/><path d="M59.8 71.4L61.7 85.5L62.9 85.3L60.9 70.2Z" fill="#b2da3d" stroke="#b2da3d" stroke-width="0.3"/><path d="M62.9 85.3L64.8 96.1L65.9 92.1L64.0 86.9Z" fill="#23888c" stroke="#23888c" stroke-width="0.3"/><path d="M65.9 92.1L67.9 71.5L69.0 69.8L67.1 86.3Z" fill="#58c164" stroke="#58c164" stroke-width="0.3"/><path d="M69.0 69.8L71.0 78.9L72.1 82.5L70.1 68.9Z" fill="#e5e32c" stroke="#e5e32c" stroke-width="0.3"/><path d="M72.1 82.5L74.1 109.7L75.2 99.0L73.2 88.7Z" fill="#3d4b88" stroke="#3d4b88" stroke-width="0.3"/><path d="M61.7 85.5L63.7 98.2L64.8 96.1L62.9 85.3Z" fill="#24868c" stroke="#24868c" stroke-width="0.3"/><path d="M64.8 96.1L66.8 73.3L67.9 71.5L65.9 92.1Z" fill="#29ab7f" stroke="#29ab7f" stroke-width="0.3"/><path d="M67.9 71.5L69.9 77.2L71.0 78.9L69.0 69.8Z" fill="#fde725" stroke="#fde725" stroke-width="0.3"/><path d="M71.0 78.9L73.0 108.3L74.1 109.7L72.1 82.5Z" fill="#3a538a" stroke="#3a538a" stroke-width="0.3"/><path d="M63.7 98.2L65.7 74.6L66.8 73.3L64.8 96.1Z" fill="#21a385" stroke="#21a385" stroke-width="0.3"/><path d="M66.8 73.3L68.8 76.8L69.9 77.2L67.9 71.5Z" fill="#fde725" stroke="#fde725" stroke-width="0.3"/><path d="M69.9 77.2L71.8 104.0L73.0 108.3L71.0 78.9Z" fill="#2e6e8d" stroke="#2e6e8d" stroke-width="0.3"/><path d="M65.7 74.6L67.6 77.5L68.8 76.8L66.8 73.3Z" fill="#fde725" stroke="#fde725" stroke-width="0.3"/><path d="M68.8 76.8L70.7 102.0L71.8 104.0L69.9 77.2Z" fill="#24878c" stroke="#24878c" stroke-width="0.3"/><path d="M67.6 77.5L69.6 102.0L70.7 102.0L68.8 76.8Z" fill="#21938b" stroke="#21938b" stroke-width="0.3"/></g></defs></svg>
<div class="a" style="left:1280px;top:0;width:8px;height:1368px;background:#2b2b2b"></div>
<div class="a" style="left:0;top:0;width:1280px;height:1368px;background:#777"></div>
<div class="a" style="left:0;top:1368px;width:1288px;height:2px;background:#c4c6c4"></div>
<div class="a" style="left:2px;top:2px;width:1276px;height:43px;background:#f3f3f3;border-top:1px solid #fff;border-left:1px solid #fff"></div>
<svg style="left:15px;top:12px" width="20" height="20" viewBox="0 0 20 20">
<rect x="-2" y="-2" width="24" height="24" rx="5" fill="#f8f8f8"/>
<path d="M11 18.6 H5 Q1.3 18.6 1.3 15 V5 Q1.3 1.2 5 1.2 H15 Q18.6 1.2 18.6 5 V7" fill="none" stroke="#a31c1c" stroke-width="1.5"/>
<path d="M1.5 3.5 H18 M1.8 6 L18.3 5.5 M1.5 8.5 L6 8 M1.5 11.5 L7 11 M1.5 15 L9 15 M2.5 2.5 L11 18 M15 1.5 L5 13" stroke="#a31c1c" stroke-width="1" fill="none"/>
<text x="10.6" y="18.6" font-family="Liberation Sans" font-size="17" fill="#222">s</text>
</svg>
<div class="a" style="left:42px;top:11.7px;font-size:18px;color:#8a8a8a;line-height:22px;transform-origin:0 0;transform:scaleX(0.9718)">Spyder (Python 3.11)</div>
<div class="a" style="left:1096px;top:22px;width:16px;height:1px;background:#8a8a8a"></div>
<div class="a" style="left:1165px;top:15px;width:15px;height:15px;border:1.4px solid #999;border-radius:2px"></div>
<svg style="left:1236px;top:15px" width="16" height="16"><path d="M0.5 0.5L15.5 15.5M15.5 0.5L0.5 15.5" stroke="#999" stroke-width="1.4"/></svg>
<div class="a" style="left:2px;top:45px;width:1276px;height:1321px;background:#19232d"></div>
<div class="a" style="left:2px;top:45px;width:1276px;height:39px;background:#455364;border:1px solid #17202a"></div>
<div class="a" style="left:10px;top:52px;font-size:19px;line-height:24px;color:#e1e0dd;transform-origin:0 0;transform:scaleX(0.9469)">File</div>
<div class="a" style="left:48px;top:52px;font-size:19px;line-height:24px;color:#e1e0dd;transform-origin:0 0;transform:scaleX(1.0076)">Edit</div>
<div class="a" style="left:90px;top:52px;font-size:19px;line-height:24px;color:#e1e0dd;transform-origin:0 0;transform:scaleX(0.9302)">Search</div>
<div class="a" style="left:154px;top:52px;font-size:19px;line-height:24px;color:#e1e0dd;transform-origin:0 0;transform:scaleX(0.9634)">Source</div>
<div class="a" style="left:221px;top:52px;font-size:19px;line-height:24px;color:#e1e0dd;transform-origin:0 0;transform:scaleX(0.9467)">Run</div>
<div class="a" style="left:263px;top:52px;font-size:19px;line-height:24px;color:#e1e0dd;transform-origin:0 0;transform:scaleX(1.0179)">Debug</div>
<div class="a" style="left:330px;top:52px;font-size:19px;line-height:24px;color:#e1e0dd;transform-origin:0 0;transform:scaleX(0.9467)">Consoles</div>
<div class="a" style="left:414px;top:52px;font-size:19px;line-height:24px;color:#e1e0dd;transform-origin:0 0;transform:scaleX(0.9761)">Projects</div>
<div class="a" style="left:489px;top:52px;font-size:19px;line-height:24px;color:#e1e0dd;transform-origin:0 0;transform:scaleX(1.0144)">Tools</div>
<div class="a" style="left:543px;top:52px;font-size:19px;line-height:24px;color:#e1e0dd;transform-origin:0 0;transform:scaleX(0.9793)">View</div>
<div class="a" style="left:592px;top:52px;font-size:19px;line-height:24px;color:#e1e0dd;transform-origin:0 0;transform:scaleX(1.0236)">Help</div>
<div class="a" style="left:2px;top:84px;width:1276px;height:52px;background:#455364"></div>
<svg style="left:24px;top:100px" width="17" height="20" viewBox="0 0 17 20"><path d="M2.5 1.5 H10 L15.5 7 V17.5 Q15.5 19 14 19 H2.5 Q1 19 1 17.5 V3 Q1 1.5 2.5 1.5Z" fill="#fafafa"/><path d="M10 1.5 V7 H15.5Z" fill="#455364"/><path d="M11 2 L15 6 H11Z" fill="#fafafa"/></svg>
<svg style="left:85px;top:102px" width="20" height="16" viewBox="0 0 20 16"><path d="M1 3 Q1 1.5 2.5 1.5 H7 L9 3.5 H15 Q16 3.5 16 4.5 V6 H5 L1.2 14Z" fill="#fafafa"/><path d="M5.5 7 H19 L16 15 H1.5Z" fill="#fafafa"/></svg>
<svg style="left:147px;top:101px" width="18" height="18" viewBox="0 0 18 18"><path d="M2.5 1 H13 L17 5 V15.5 Q17 17 15.5 17 H2.5 Q1 17 1 15.5 V2.5 Q1 1 2.5 1Z" fill="#fafafa"/><rect x="4" y="3" width="9" height="4" fill="#455364"/><circle cx="9" cy="12" r="2.6" fill="#455364"/></svg>
<svg style="left:207px;top:99px" width="22" height="22" viewBox="0 0 22 22"><path d="M1.5 5 V19.5 H14" fill="none" stroke="#fafafa" stroke-width="1.6"/><path d="M6.5 1 H17 L21 5 V14.5 Q21 16 19.5 16 H6.5 Q5 16 5 14.5 V2.5 Q5 1 6.5 1Z" fill="#fafafa"/><rect x="8" y="3" width="8.5" height="3.6" fill="#455364"/><circle cx="13" cy="11" r="2.4" fill="#455364"/></svg>
<svg style="left:275px;top:104px" width="13" height="13" viewBox="0 0 13 13"><path d="M1 0.5 L12 6.3 L1 12Z" fill="#3ec99b"/></svg>
<svg style="left:332px;top:102px" width="26" height="20" viewBox="0 0 26 20"><path d="M9 14.5 H2.5 Q1 14.5 1 13 V2.5 Q1 1 2.5 1 H18.5 Q20 1 20 2.5 V7" fill="none" stroke="#fafafa" stroke-width="2"/><path d="M13.5 7.5 L23.5 12.8 L13.5 18Z" fill="#3ec99b"/></svg>
<svg style="left:394px;top:102px" width="26" height="20" viewBox="0 0 26 20"><path d="M8 14.5 H2.5 Q1 14.5 1 13 V2.5 Q1 1 2.5 1 H18.5 Q20 1 20 2.5 V9" fill="none" stroke="#fafafa" stroke-width="2"/><path d="M10 10 L15.5 14 L10 18Z M15.5 10 L21 14 L15.5 18Z" fill="#3ec99b"/></svg>
<svg style="left:457px;top:99px" width="22" height="22" viewBox="0 0 22 22"><path d="M2 1 H8 M5 1 V19 M2 19 H8" fill="none" stroke="#fafafa" stroke-width="2"/><path d="M11 10.5 L20 15.5 L11 20.5Z" fill="#3ec99b"/></svg>
<svg style="left:518px;top:103px" width="22" height="14" viewBox="0 0 22 14"><rect x="1.5" y="0.8" width="2.8" height="12.4" fill="#30a9f2"/><rect x="6" y="0.8" width="2.8" height="12.4" fill="#30a9f2"/><path d="M10.5 0.8 L20 7 L10.5 13.2Z" fill="#30a9f2"/></svg>
<svg style="left:580px;top:102px" width="22" height="16" viewBox="0 0 22 16"><path d="M2.5 10 Q5 3 10.5 3 Q15 3 17.5 7.5" fill="none" stroke="#30a9f2" stroke-width="1.9"/><path d="M20 5 L19.5 11 L14 9.5Z" fill="#30a9f2"/><circle cx="10.5" cy="11.6" r="1.8" fill="#30a9f2"/></svg>
<svg style="left:645px;top:100px" width="16" height="20" viewBox="0 0 16 20"><path d="M7.4 1 V13.5 M2 8 L7.4 13.5 L12.8 8" fill="none" stroke="#30a9f2" stroke-width="1.7"/><circle cx="7.4" cy="17" r="1.8" fill="#30a9f2"/></svg>
<svg style="left:707px;top:100px" width="16" height="20" viewBox="0 0 16 20"><path d="M7.5 14 V1.8 M2 7.5 L7.5 1.8 L13 7.5" fill="none" stroke="#30a9f2" stroke-width="1.7"/><circle cx="7.5" cy="17" r="1.8" fill="#30a9f2"/></svg>
<svg style="left:768px;top:104px" width="18" height="12" viewBox="0 0 18 12"><path d="M1 0.5 L8.5 6 L1 11.5Z M8.5 0.5 L16.5 6 L8.5 11.5Z" fill="#30a9f2"/></svg>
<div class="a" style="left:833px;top:105px;width:11px;height:10.5px;background:#33adff"></div>
<svg style="left:891px;top:100px" width="20" height="20" viewBox="0 0 20 20"><rect x="1.8" y="1.8" width="16.4" height="16.4" rx="1.8" fill="none" stroke="#fafafa" stroke-width="1.8"/><path d="M10 2 V18" stroke="#fafafa" stroke-width="1.8"/><path d="M6.8 4 H3.5 V7.5 M3.5 12.5 V16 H6.8" fill="none" stroke="#fafafa" stroke-width="1.6"/></svg>
<svg style="left:952px;top:99px" width="22" height="22" viewBox="0 0 22 22"><path d="M3 19 L11.5 10.5" stroke="#fafafa" stroke-width="3.4" stroke-linecap="round"/><path d="M10 7.5 A6 6 0 0 1 17 2 L14 5.5 L16.5 8 L20 5 A6 6 0 0 1 13 12 Z" fill="#fafafa"/></svg>
<svg style="left:1014px;top:100px" width="22" height="22" viewBox="0 0 22 22"><path d="M10.5 1 C6 1 6.5 3 6.5 3 V5.3 H11 V6 H4 C2 6 1 8 1 10.5 C1 13.3 2.3 15 4 15 H5.5 V12.5 C5.5 10.8 7 9.5 8.6 9.5 H12.8 C14.4 9.5 15.6 8.3 15.6 6.7 V3 C15.6 1.5 14 1 10.5 1Z" fill="#3f7cb5"/><path d="M11 21 C15.5 21 15 19 15 19 V16.7 H10.5 V16 H17.5 C19.5 16 20.5 14 20.5 11.5 C20.5 8.7 19.2 7 17.5 7 H16 V9.5 C16 11.2 14.5 12.5 12.9 12.5 H8.7 C7.1 12.5 5.9 13.7 5.9 15.3 V19 C5.9 20.5 7.5 21 11 21Z" fill="#f6cf3f"/><circle cx="8.6" cy="3.3" r="0.9" fill="#fff"/><circle cx="13" cy="18.7" r="0.9" fill="#fff"/></svg>
<div class="a" style="left:1057px;top:96px;width:180px;height:27px;background:#19232d;border-radius:4px"></div>
<div class="a" style="left:1224px;top:96px;width:1px;height:27px;background:#455364"></div>
<svg style="left:1226px;top:107px" width="10" height="6"><path d="M1 0.5 H9 L5 5Z" fill="#5f6f80"/></svg>
<div class="a ser" style="left:1065px;top:99px">D:\<span class="cj" style="width:18px">坤</span>\Python</div>
<div class="a" style="left:1251px;top:108px;width:4px;height:4px;border-radius:2px;background:#fafafa"></div>
<div class="a" style="left:1257px;top:108px;width:4px;height:4px;border-radius:2px;background:#fafafa"></div>
<div class="a" style="left:1263px;top:108px;width:4px;height:4px;border-radius:2px;background:#fafafa"></div>
<div class="a ser" style="left:12px;top:142px;color:#e0e1e3">D:\<span class="cj" style="width:18px">坤</span>\Python\untitled1.py</div>
<div class="a" style="left:2px;top:165px;width:903px;height:1px;background:#394654"></div>
<div class="a" style="left:905px;top:136px;width:7px;height:1200px;background:#455364"></div>
<div class="a" style="left:16px;top:181px;width:19px;height:16px;border:2px solid #fafafa;border-top-width:4px;border-radius:1.5px"></div>
<div class="a" style="left:51px;top:180px;width:141px;height:32px;background:#455364;border-radius:4px 4px 0 0"></div>
<div class="a" style="left:194px;top:180px;width:159px;height:32px;background:#455364;border-radius:4px 4px 0 0"></div>
<div class="a" style="left:355px;top:180px;width:159px;height:32px;background:#54687a;border-radius:4px 4px 0 0"></div>
<div class="a" style="left:355px;top:209px;width:159px;height:3px;background:#259ae9"></div>
<div class="a ser" style="left:62px;top:187px;"><span class="cj" style="width:18px">代</span><span class="cj" style="width:18px">码</span><span class="cj" style="width:18px">问</span><span class="cj" style="width:18px">候</span>.py</div>
<div class="a ser" style="left:204px;top:187px;">untitled0.py*</div>
<div class="a ser" style="left:365px;top:187px;">untitled1.py*</div>
<svg style="left:167px;top:188px" width="16" height="16" viewBox="0 0 16 16"><path d="M1.5 1.5 L14.5 14.5 M14.5 1.5 L1.5 14.5" stroke="#fafafa" stroke-width="2"/></svg>
<svg style="left:328px;top:188px" width="16" height="16" viewBox="0 0 16 16"><path d="M1.5 1.5 L14.5 14.5 M14.5 1.5 L1.5 14.5" stroke="#fafafa" stroke-width="2"/></svg>
<svg style="left:489px;top:188px" width="16" height="16" viewBox="0 0 16 16"><path d="M1.5 1.5 L14.5 14.5 M14.5 1.5 L1.5 14.5" stroke="#fafafa" stroke-width="2"/></svg>
<div class="a" style="left:876px;top:183.8px;width:15px;height:1.8px;background:#fafafa"></div>
<div class="a" style="left:876px;top:188.1px;width:15px;height:1.8px;background:#fafafa"></div>
<div class="a" style="left:876px;top:192.4px;width:15px;height:1.8px;background:#fafafa"></div>
<div class="a" style="left:3px;top:214px;width:901px;height:1121px;border:1px solid #455364;border-radius:4px;background:#19232d"></div>
<div class="a" style="left:5px;top:216px;width:86px;height:1118px;background:#222b35"></div>
<div class="a" style="left:888px;top:216px;width:13px;height:1118px;background:#222b35"></div>
<div class="a" style="left:95px;top:1175px;width:791px;height:27px;background:#3a424a"></div>
<div class="a" style="left:5px;top:0;width:55px;height:1377px">
<div class="ln" style="top:222px">1</div>
<div class="ln" style="top:246px">2</div>
<div class="ln" style="top:270px">3</div>
<div class="ln" style="top:294px">4</div>
<div class="ln" style="top:318px">5</div>
<div class="ln" style="top:342px">6</div>
<div class="ln" style="top:366px">7</div>
<div class="ln" style="top:390px">8</div>
<div class="ln" style="top:414px">9</div>
<div class="ln" style="top:438px">10</div>
<div class="ln" style="top:462px">11</div>
<div class="ln" style="top:486px">12</div>
<div class="ln" style="top:510px">13</div>
<div class="ln" style="top:534px">14</div>
<div class="ln" style="top:558px">15</div>
<div class="ln" style="top:582px">16</div>
<div class="ln" style="top:606px">17</div>
<div class="ln" style="top:630px">18</div>
<div class="ln" style="top:654px">19</div>
<div class="ln" style="top:678px">20</div>
<div class="ln" style="top:702px">21</div>
<div class="ln" style="top:726px">22</div>
<div class="ln" style="top:750px">23</div>
<div class="ln" style="top:774px">24</div>
<div class="ln" style="top:798px">25</div>
<div class="ln" style="top:822px">26</div>
<div class="ln" style="top:846px">27</div>
<div class="ln" style="top:870px">28</div>
<div class="ln" style="top:894px">29</div>
<div class="ln" style="top:918px">30</div>
<div class="ln" style="top:942px">31</div>
<div class="ln" style="top:966px">32</div>
<div class="ln" style="top:990px">33</div>
<div class="ln" style="top:1014px">34</div>
<div class="ln" style="top:1038px">35</div>
<div class="ln" style="top:1062px">36</div>
<div class="ln" style="top:1086px">37</div>
<div class="ln" style="top:1110px">38</div>
<div class="ln" style="top:1134px">39</div>
<div class="ln" style="top:1158px">40</div>
<div class="ln" style="top:1176px;color:#fff;font-weight:bold">40</div>
</div>
<div class="code" style="top:223px"><span style="color:#c670e0">import</span><span style="color:#ffffff"> numpy </span><span style="color:#c670e0">as</span><span style="color:#ffffff"> np</span></div>
<div class="code" style="top:271px"><span style="color:#c670e0">def</span><span style="color:#ffffff"> </span><span style="color:#57d6e4;font-weight:bold;-webkit-text-stroke:0">f</span><span style="color:#ffffff">(x):</span></div>
<div class="code" style="top:295px"><span style="color:#ffffff">    </span><span style="color:#c670e0">return</span><span style="color:#ffffff"> (</span><span style="color:#fab16c">abs</span><span style="color:#ffffff">(x + </span><span style="color:#faed5c">1</span><span style="color:#ffffff">) - </span><span style="color:#fab16c">abs</span><span style="color:#ffffff">(x - </span><span style="color:#faed5c">1</span><span style="color:#ffffff">)) / </span><span style="color:#faed5c">2</span><span style="color:#ffffff"> + np.sin(x)</span></div>
<div class="code" style="top:343px"><span style="color:#c670e0">def</span><span style="color:#ffffff"> </span><span style="color:#57d6e4;font-weight:bold;-webkit-text-stroke:0">g</span><span style="color:#ffffff">(x):</span></div>
<div class="code" style="top:367px"><span style="color:#ffffff">    </span><span style="color:#c670e0">return</span><span style="color:#ffffff"> (</span><span style="color:#fab16c">abs</span><span style="color:#ffffff">(x + </span><span style="color:#faed5c">3</span><span style="color:#ffffff">) - </span><span style="color:#fab16c">abs</span><span style="color:#ffffff">(x - </span><span style="color:#faed5c">3</span><span style="color:#ffffff">)) / </span><span style="color:#faed5c">2</span><span style="color:#ffffff"> + np.cos(x)</span></div>
<div class="code" style="top:415px"><span style="color:#999999"># <span class="cj" style="width:19.6px">假</span><span class="cj" style="width:19.6px">设</span><span class="cj" style="width:19.6px">我</span><span class="cj" style="width:19.6px">们</span><span class="cj" style="width:19.6px">有</span><span class="cj" style="width:19.6px">一</span><span class="cj" style="width:19.6px">些</span><span class="cj" style="width:19.6px">初</span><span class="cj" style="width:19.6px">始</span><span class="cj" style="width:19.6px">猜</span><span class="cj" style="width:19.6px">测</span><span class="cj" style="width:19.6px">值</span><span class="cj" style="width:19.6px">（</span><span class="cj" style="width:19.6px">这</span><span class="cj" style="width:19.6px">里</span><span class="cj" style="width:19.6px">只</span><span class="cj" style="width:19.6px">是</span><span class="cj" style="width:19.6px">随</span><span class="cj" style="width:19.6px">机</span><span class="cj" style="width:19.6px">选</span><span class="cj" style="width:19.6px">择</span><span class="cj" style="width:19.6px">的</span><span class="cj" style="width:19.6px">）</span></span></div>
<div class="code" style="top:442px"><span style="color:#ffffff">x1_guess = </span><span style="color:#faed5c">0.5</span></div>
<div class="code" style="top:466px"><span style="color:#ffffff">x2_guess = </span><span style="color:#faed5c">1.0</span></div>
<div class="code" style="top:490px"><span style="color:#ffffff">y1_guess = </span><span style="color:#faed5c">0.2</span></div>
<div class="code" style="top:514px"><span style="color:#ffffff">y2_guess = </span><span style="color:#faed5c">0.3</span></div>
<div class="code" style="top:562px"><span style="color:#999999"># <span class="cj" style="width:19.6px">定</span><span class="cj" style="width:19.6px">义</span><span class="cj" style="width:19.6px">方</span><span class="cj" style="width:19.6px">程</span><span class="cj" style="width:19.6px">组</span><span class="cj" style="width:19.6px">矩</span><span class="cj" style="width:19.6px">阵</span>A<span class="cj" style="width:19.6px">和</span><span class="cj" style="width:19.6px">向</span><span class="cj" style="width:19.6px">量</span>b</span></div>
<div class="code" style="top:589px"><span style="color:#c670e0">def</span><span style="color:#ffffff"> </span><span style="color:#57d6e4;font-weight:bold;-webkit-text-stroke:0">create_system</span><span style="color:#ffffff">(x1, x2, y1, y2):</span></div>
<div class="code" style="top:613px"><span style="color:#ffffff">    A = np.array([</span></div>
<div class="code" style="top:637px"><span style="color:#ffffff">        [</span><span style="color:#faed5c">0</span><span style="color:#ffffff">, </span><span style="color:#faed5c">0</span><span style="color:#ffffff">, </span><span style="color:#faed5c">3</span><span style="color:#ffffff">*f(y1), </span><span style="color:#faed5c">4</span><span style="color:#ffffff">*g(y2)],</span></div>
<div class="code" style="top:661px"><span style="color:#ffffff">        [</span><span style="color:#faed5c">2</span><span style="color:#ffffff">, </span><span style="color:#faed5c">0</span><span style="color:#ffffff">, </span><span style="color:#faed5c">2</span><span style="color:#ffffff">*f(y1), </span><span style="color:#faed5c">6</span><span style="color:#ffffff">*g(y2)],</span></div>
<div class="code" style="top:685px"><span style="color:#ffffff">        [f(x1), </span><span style="color:#faed5c">3</span><span style="color:#ffffff">*g(x2), -</span><span style="color:#faed5c">1</span><span style="color:#ffffff">, </span><span style="color:#faed5c">0</span><span style="color:#ffffff">],</span></div>
<div class="code" style="top:709px"><span style="color:#ffffff">        [</span><span style="color:#faed5c">4</span><span style="color:#ffffff">*f(x1), g(x2), </span><span style="color:#faed5c">0</span><span style="color:#ffffff">, -</span><span style="color:#faed5c">1</span><span style="color:#ffffff">],</span></div>
<div class="code" style="top:733px"><span style="color:#ffffff">        [</span><span style="color:#faed5c">1</span><span style="color:#ffffff">, -</span><span style="color:#faed5c">3</span><span style="color:#ffffff">, </span><span style="color:#faed5c">0</span><span style="color:#ffffff">, -</span><span style="color:#faed5c">10</span><span style="color:#ffffff">*f(y1)],</span></div>
<div class="code" style="top:757px"><span style="color:#ffffff">    ])</span></div>
<div class="code" style="top:781px"><span style="color:#ffffff">    b = np.array([-</span><span style="color:#faed5c">1</span><span style="color:#ffffff">, -</span><span style="color:#faed5c">2</span><span style="color:#ffffff">, -</span><span style="color:#faed5c">3</span><span style="color:#ffffff">, -</span><span style="color:#faed5c">1</span><span style="color:#ffffff">, </span><span style="color:#faed5c">2</span><span style="color:#ffffff">])</span></div>
<div class="code" style="top:805px"><span style="color:#ffffff">    </span><span style="color:#c670e0">return</span><span style="color:#ffffff"> A, b</span></div>
<div class="code" style="top:853px"><span style="color:#999999"># <span class="cj" style="width:19.6px">使</span><span class="cj" style="width:19.6px">用</span><span class="cj" style="width:19.6px">初</span><span class="cj" style="width:19.6px">始</span><span class="cj" style="width:19.6px">猜</span><span class="cj" style="width:19.6px">测</span><span class="cj" style="width:19.6px">值</span><span class="cj" style="width:19.6px">来</span><span class="cj" style="width:19.6px">创</span><span class="cj" style="width:19.6px">建</span><span class="cj" style="width:19.6px">方</span><span class="cj" style="width:19.6px">程</span><span class="cj" style="width:19.6px">组</span></span></div>
<div class="code" style="top:880px"><span style="color:#ffffff">A, b = create_system(x1_guess, x2_guess, y1_guess, y2_guess)</span></div>
<div class="code" style="top:928px"><span style="color:#999999"># <span class="cj" style="width:19.6px">使</span><span class="cj" style="width:19.6px">用</span>numpy.linalg.lstsq<span class="cj" style="width:19.6px">求</span><span class="cj" style="width:19.6px">解</span><span class="cj" style="width:19.6px">最</span><span class="cj" style="width:19.6px">小</span><span class="cj" style="width:19.6px">二</span><span class="cj" style="width:19.6px">乘</span><span class="cj" style="width:19.6px">解</span></span></div>
<div class="code" style="top:955px"><span style="color:#ffffff">sol, residuals, rank, s = np.linalg.lstsq(A, b, rcond=</span><span style="color:#fab16c">None</span><span style="color:#ffffff">)</span></div>
<div class="code" style="top:1003px"><span style="color:#fab16c">print</span><span style="color:#ffffff">("</span><span style="color:#b0e686;font-style:italic"><span class="cj" style="width:19.6px">最</span><span class="cj" style="width:19.6px">小</span><span class="cj" style="width:19.6px">二</span><span class="cj" style="width:19.6px">乘</span><span class="cj" style="width:19.6px">解</span><span class="cj" style="width:19.6px">：</span></span><span style="color:#ffffff">")</span></div>
<div class="code" style="top:1030px"><span style="color:#fab16c">print</span><span style="color:#ffffff">("</span><span style="color:#b0e686;font-style:italic">x1 =</span><span style="color:#ffffff">", sol[</span><span style="color:#faed5c">0</span><span style="color:#ffffff">])</span></div>
<div class="code" style="top:1054px"><span style="color:#fab16c">print</span><span style="color:#ffffff">("</span><span style="color:#b0e686;font-style:italic">x2 =</span><span style="color:#ffffff">", sol[</span><span style="color:#faed5c">1</span><span style="color:#ffffff">])</span></div>
<div class="code" style="top:1078px"><span style="color:#fab16c">print</span><span style="color:#ffffff">("</span><span style="color:#b0e686;font-style:italic">y1 =</span><span style="color:#ffffff">", sol[</span><span style="color:#faed5c">2</span><span style="color:#ffffff">])</span></div>
<div class="code" style="top:1102px"><span style="color:#fab16c">print</span><span style="color:#ffffff">("</span><span style="color:#b0e686;font-style:italic">y2 =</span><span style="color:#ffffff">", sol[</span><span style="color:#faed5c">3</span><span style="color:#ffffff">])</span></div>
<div class="code" style="top:1126px"><span style="color:#fab16c">print</span><span style="color:#ffffff">("</span><span style="color:#b0e686;font-style:italic"><span class="cj" style="width:19.6px">残</span><span class="cj" style="width:19.6px">差</span><span class="cj" style="width:19.6px">平</span><span class="cj" style="width:19.6px">方</span><span class="cj" style="width:19.6px">和</span><span class="cj" style="width:19.6px">：</span></span><span style="color:#ffffff">", residuals[</span><span style="color:#faed5c">0</span><span style="color:#ffffff">])</span></div>
<div class="code" style="top:1177px"><span style="color:#fab16c">print</span><span style="color:#ffffff">("</span><span style="color:#b0e686;font-style:italic"><span class="cj" style="width:19.6px">学</span><span class="cj" style="width:19.6px">号</span><span class="cj" style="width:19.6px">：</span>3025</span><span style="color:#ffffff">")</span></div>
<svg style="left:929px;top:153px" width="13" height="13" viewBox="0 0 13 13"><path d="M1.5 0.5 H9 L12 3.5 V11 Q12 12 11 12 H1.5 Q0.5 12 0.5 11 V1.5 Q0.5 0.5 1.5 0.5Z" fill="#fafafa"/><rect x="3" y="2" width="6" height="2.6" fill="#19232d"/><circle cx="6.3" cy="8.3" r="1.8" fill="#19232d"/></svg>
<svg style="left:979px;top:151px" width="17" height="16" viewBox="0 0 17 16"><path d="M1 4 V14.5 H10" fill="none" stroke="#fafafa" stroke-width="1.3"/><path d="M4.5 0.5 H12 L15.5 4 V11 Q15.5 12 14.5 12 H4.5 Q3.5 12 3.5 11 V1.5 Q3.5 0.5 4.5 0.5Z" fill="#fafafa"/><rect x="6" y="2" width="6" height="2.6" fill="#19232d"/><circle cx="9.4" cy="8" r="1.8" fill="#19232d"/></svg>
<svg style="left:1032px;top:151px" width="16" height="17" viewBox="0 0 16 17"><path d="M3 12.5 V2 Q3 1 4 1 H10" fill="none" stroke="#fafafa" stroke-width="1.4"/><rect x="5.5" y="3.8" width="8.5" height="11.5" rx="1" fill="none" stroke="#fafafa" stroke-width="1.4"/></svg>
<svg style="left:1085px;top:152px" width="13" height="15" viewBox="0 0 13 15"><rect x="1" y="2" width="11" height="1.8" fill="#fafafa"/><rect x="4.5" y="0.3" width="4" height="2" fill="#fafafa"/><path d="M2 4.5 H11 L10.4 13.5 Q10.3 14.5 9.3 14.5 H3.7 Q2.7 14.5 2.6 13.5Z" fill="#fafafa"/></svg>
<svg style="left:1136px;top:151px" width="16" height="16" viewBox="0 0 16 16"><path d="M2 2 L14 14 M14 2 L2 14" stroke="#fafafa" stroke-width="1.5"/><path d="M4 1 L13 11" stroke="#19232d" stroke-width="1" /><path d="M5.5 1 L14 10" stroke="#fafafa" stroke-width="1.2"/></svg>
<div class="a" style="left:1202.0px;top:157.5px;width:3px;height:3px;border-radius:1.5px;background:#fafafa"></div>
<div class="a" style="left:1206.5px;top:157.5px;width:3px;height:3px;border-radius:1.5px;background:#fafafa"></div>
<div class="a" style="left:1211.0px;top:157.5px;width:3px;height:3px;border-radius:1.5px;background:#fafafa"></div>
<div class="a" style="left:1247.4px;top:154.9px;width:11.3px;height:1.4px;background:#fafafa;border-radius:0.7px"></div>
<div class="a" style="left:1247.4px;top:158px;width:11.3px;height:1.4px;background:#fafafa;border-radius:0.7px"></div>
<div class="a" style="left:1247.4px;top:161px;width:11.3px;height:1.4px;background:#fafafa;border-radius:0.7px"></div>
<div class="a" style="left:913px;top:183px;width:255px;height:524px;border:1px solid #3d4a58;border-radius:4px;background:#19232d"></div>
<div class="a" style="left:1167px;top:183px;width:11px;height:524px;background:#455364"></div>
<div class="a" style="left:1172px;top:440px;width:1px;height:10px;background:#9aa5b0"></div>
<div class="a" style="left:1178px;top:183px;width:99px;height:524px;border:1px solid #3d4a58;border-radius:4px;background:#19232d"></div>
<svg style="left:925.6px;top:369.7px" width="229.4" height="151.3" viewBox="0 0 229.4 151.3"><rect x="0" y="0" width="229.4" height="151.3" fill="#fff"/><path d="M9.1 54 L44.2 29.1 L44.2 75 L10.6 100.3Z" fill="#f2f2f2" stroke="#e0e0e0" stroke-width="0.4"/><path d="M44.2 29.1 L104.2 43.9 L103.2 88.6 L44.2 75Z" fill="#ececec" stroke="#e0e0e0" stroke-width="0.4"/><path d="M10.6 100.3 L44.2 75 L103.2 88.6 L69.6 120.2Z" fill="#e8e8e8" stroke="#d8d8d8" stroke-width="0.4"/><path d="M16.1 49.0 L17.3 95.2" stroke="#d4d4d4" stroke-width="0.4"/><path d="M56.2 32.1 L56.0 77.7" stroke="#d4d4d4" stroke-width="0.4"/><path d="M23.1 44.0 L24.0 90.2" stroke="#d4d4d4" stroke-width="0.4"/><path d="M68.2 35.0 L67.8 80.4" stroke="#d4d4d4" stroke-width="0.4"/><path d="M30.2 39.1 L30.8 85.1" stroke="#d4d4d4" stroke-width="0.4"/><path d="M80.2 38.0 L79.6 83.2" stroke="#d4d4d4" stroke-width="0.4"/><path d="M37.2 34.1 L37.5 80.1" stroke="#d4d4d4" stroke-width="0.4"/><path d="M92.2 40.9 L91.4 85.9" stroke="#d4d4d4" stroke-width="0.4"/><path d="M10.6 100.3 L69.6 120.2 L103.2 88.6" fill="none" stroke="#333" stroke-width="0.5"/><defs><linearGradient id="virm" x1="0" y1="0" x2="0" y2="1"><stop offset="0" stop-color="#fde725"/><stop offset="0.3" stop-color="#b5de2b"/><stop offset="0.5" stop-color="#35b779"/><stop offset="0.68" stop-color="#26828e"/><stop offset="0.85" stop-color="#3e4a89"/><stop offset="1" stop-color="#440154"/></linearGradient><clipPath id="ccm"><rect x="121" y="6.3" width="107" height="134.8"/></clipPath></defs><use href="#surf"/><path d="M104.2 43.9 L103.2 88.6" stroke="#555" stroke-width="0.4"/><rect x="106" y="48.0" width="2.5" height="1.2" fill="#888"/><rect x="106" y="55.0" width="2.5" height="1.2" fill="#888"/><rect x="106" y="62.0" width="2.5" height="1.2" fill="#888"/><rect x="106" y="69.0" width="2.5" height="1.2" fill="#888"/><rect x="106" y="76.0" width="2.5" height="1.2" fill="#888"/><rect x="106" y="83.0" width="2.5" height="1.2" fill="#888"/><text x="55.9" y="19" font-size="3.6" text-anchor="middle" fill="#444" font-family="Liberation Sans">3D Surface Plot of Elevation Data</text><rect x="12.0" y="104.0" width="2.2" height="1.2" fill="#999"/><rect x="76.0" y="118.0" width="2.2" height="1.2" fill="#999"/><rect x="24.0" y="108.3" width="2.2" height="1.2" fill="#999"/><rect x="82.5" y="112.0" width="2.2" height="1.2" fill="#999"/><rect x="36.0" y="112.6" width="2.2" height="1.2" fill="#999"/><rect x="89.0" y="106.0" width="2.2" height="1.2" fill="#999"/><rect x="48.0" y="116.9" width="2.2" height="1.2" fill="#999"/><rect x="95.5" y="100.0" width="2.2" height="1.2" fill="#999"/><rect x="60.0" y="121.2" width="2.2" height="1.2" fill="#999"/><rect x="102.0" y="94.0" width="2.2" height="1.2" fill="#999"/><rect x="121" y="6.3" width="107" height="134.8" fill="#fff" stroke="#222" stroke-width="0.4"/><g clip-path="url(#ccm)"><circle cx="121" cy="141.1" r="3.00" fill="none" stroke="#a2a2a2" stroke-width="4.3"/><circle cx="121" cy="141.1" r="2.10" fill="none" stroke="#2a2a2a" stroke-width="1.2" stroke-dasharray="1 1.2"/><circle cx="121" cy="141.1" r="4.90" fill="none" stroke="#333" stroke-width="0.7"/><circle cx="121" cy="141.1" r="3.60" fill="none" stroke="#e8e8e8" stroke-width="0.8" stroke-dasharray="0.8 1.2"/><circle cx="121" cy="141.1" r="9.55" fill="none" stroke="#a2a2a2" stroke-width="4.3"/><circle cx="121" cy="141.1" r="8.65" fill="none" stroke="#2a2a2a" stroke-width="1.2" stroke-dasharray="1 1.2"/><circle cx="121" cy="141.1" r="11.45" fill="none" stroke="#333" stroke-width="0.7"/><circle cx="121" cy="141.1" r="10.15" fill="none" stroke="#e8e8e8" stroke-width="0.8" stroke-dasharray="0.8 1.2"/><circle cx="121" cy="141.1" r="16.10" fill="none" stroke="#a2a2a2" stroke-width="4.3"/><circle cx="121" cy="141.1" r="15.20" fill="none" stroke="#2a2a2a" stroke-width="1.2" stroke-dasharray="1 1.2"/><circle cx="121" cy="141.1" r="18.00" fill="none" stroke="#333" stroke-width="0.7"/><circle cx="121" cy="141.1" r="16.70" fill="none" stroke="#e8e8e8" stroke-width="0.8" stroke-dasharray="0.8 1.2"/><circle cx="121" cy="141.1" r="22.65" fill="none" stroke="#a2a2a2" stroke-width="4.3"/><circle cx="121" cy="141.1" r="21.75" fill="none" stroke="#2a2a2a" stroke-width="1.2" stroke-dasharray="1 1.2"/><circle cx="121" cy="141.1" r="24.55" fill="none" stroke="#333" stroke-width="0.7"/><circle cx="121" cy="141.1" r="23.25" fill="none" stroke="#e8e8e8" stroke-width="0.8" stroke-dasharray="0.8 1.2"/><circle cx="121" cy="141.1" r="29.20" fill="none" stroke="#a2a2a2" stroke-width="4.3"/><circle cx="121" cy="141.1" r="28.30" fill="none" stroke="#2a2a2a" stroke-width="1.2" stroke-dasharray="1 1.2"/><circle cx="121" cy="141.1" r="31.10" fill="none" stroke="#333" stroke-width="0.7"/><circle cx="121" cy="141.1" r="29.80" fill="none" stroke="#e8e8e8" stroke-width="0.8" stroke-dasharray="0.8 1.2"/><circle cx="121" cy="141.1" r="35.75" fill="none" stroke="#a2a2a2" stroke-width="4.3"/><circle cx="121" cy="141.1" r="34.85" fill="none" stroke="#2a2a2a" stroke-width="1.2" stroke-dasharray="1 1.2"/><circle cx="121" cy="141.1" r="37.65" fill="none" stroke="#333" stroke-width="0.7"/><circle cx="121" cy="141.1" r="36.35" fill="none" stroke="#e8e8e8" stroke-width="0.8" stroke-dasharray="0.8 1.2"/><circle cx="121" cy="141.1" r="42.30" fill="none" stroke="#a2a2a2" stroke-width="4.3"/><circle cx="121" cy="141.1" r="41.40" fill="none" stroke="#2a2a2a" stroke-width="1.2" stroke-dasharray="1 1.2"/><circle cx="121" cy="141.1" r="44.20" fill="none" stroke="#333" stroke-width="0.7"/><circle cx="121" cy="141.1" r="42.90" fill="none" stroke="#e8e8e8" stroke-width="0.8" stroke-dasharray="0.8 1.2"/><circle cx="121" cy="141.1" r="48.85" fill="none" stroke="#a2a2a2" stroke-width="4.3"/><circle cx="121" cy="141.1" r="47.95" fill="none" stroke="#2a2a2a" stroke-width="1.2" stroke-dasharray="1 1.2"/><circle cx="121" cy="141.1" r="50.75" fill="none" stroke="#333" stroke-width="0.7"/><circle cx="121" cy="141.1" r="49.45" fill="none" stroke="#e8e8e8" stroke-width="0.8" stroke-dasharray="0.8 1.2"/><circle cx="121" cy="141.1" r="55.40" fill="none" stroke="#a2a2a2" stroke-width="4.3"/><circle cx="121" cy="141.1" r="54.50" fill="none" stroke="#2a2a2a" stroke-width="1.2" stroke-dasharray="1 1.2"/><circle cx="121" cy="141.1" r="57.30" fill="none" stroke="#333" stroke-width="0.7"/><circle cx="121" cy="141.1" r="56.00" fill="none" stroke="#e8e8e8" stroke-width="0.8" stroke-dasharray="0.8 1.2"/><circle cx="121" cy="141.1" r="61.95" fill="none" stroke="#a2a2a2" stroke-width="4.3"/><circle cx="121" cy="141.1" r="61.05" fill="none" stroke="#2a2a2a" stroke-width="1.2" stroke-dasharray="1 1.2"/><circle cx="121" cy="141.1" r="63.85" fill="none" stroke="#333" stroke-width="0.7"/><circle cx="121" cy="141.1" r="62.55" fill="none" stroke="#e8e8e8" stroke-width="0.8" stroke-dasharray="0.8 1.2"/><circle cx="121" cy="141.1" r="68.50" fill="none" stroke="#a2a2a2" stroke-width="4.3"/><circle cx="121" cy="141.1" r="67.60" fill="none" stroke="#2a2a2a" stroke-width="1.2" stroke-dasharray="1 1.2"/><circle cx="121" cy="141.1" r="70.40" fill="none" stroke="#333" stroke-width="0.7"/><circle cx="121" cy="141.1" r="69.10" fill="none" stroke="#e8e8e8" stroke-width="0.8" stroke-dasharray="0.8 1.2"/><circle cx="121" cy="141.1" r="75.05" fill="none" stroke="#a2a2a2" stroke-width="4.3"/><circle cx="121" cy="141.1" r="74.15" fill="none" stroke="#2a2a2a" stroke-width="1.2" stroke-dasharray="1 1.2"/><circle cx="121" cy="141.1" r="76.95" fill="none" stroke="#333" stroke-width="0.7"/><circle cx="121" cy="141.1" r="75.65" fill="none" stroke="#e8e8e8" stroke-width="0.8" stroke-dasharray="0.8 1.2"/><circle cx="121" cy="141.1" r="81.60" fill="none" stroke="#a2a2a2" stroke-width="4.3"/><circle cx="121" cy="141.1" r="80.70" fill="none" stroke="#2a2a2a" stroke-width="1.2" stroke-dasharray="1 1.2"/><circle cx="121" cy="141.1" r="83.50" fill="none" stroke="#333" stroke-width="0.7"/><circle cx="121" cy="141.1" r="82.20" fill="none" stroke="#e8e8e8" stroke-width="0.8" stroke-dasharray="0.8 1.2"/><circle cx="121" cy="141.1" r="88.15" fill="none" stroke="#a2a2a2" stroke-width="4.3"/><circle cx="121" cy="141.1" r="87.25" fill="none" stroke="#2a2a2a" stroke-width="1.2" stroke-dasharray="1 1.2"/><circle cx="121" cy="141.1" r="90.05" fill="none" stroke="#333" stroke-width="0.7"/><circle cx="121" cy="141.1" r="88.75" fill="none" stroke="#e8e8e8" stroke-width="0.8" stroke-dasharray="0.8 1.2"/><circle cx="121" cy="141.1" r="94.70" fill="none" stroke="#a2a2a2" stroke-width="4.3"/><circle cx="121" cy="141.1" r="93.80" fill="none" stroke="#2a2a2a" stroke-width="1.2" stroke-dasharray="1 1.2"/><circle cx="121" cy="141.1" r="96.60" fill="none" stroke="#333" stroke-width="0.7"/><circle cx="121" cy="141.1" r="95.30" fill="none" stroke="#e8e8e8" stroke-width="0.8" stroke-dasharray="0.8 1.2"/><circle cx="121" cy="141.1" r="101.25" fill="none" stroke="#a2a2a2" stroke-width="4.3"/><circle cx="121" cy="141.1" r="100.35" fill="none" stroke="#2a2a2a" stroke-width="1.2" stroke-dasharray="1 1.2"/><circle cx="121" cy="141.1" r="103.15" fill="none" stroke="#333" stroke-width="0.7"/><circle cx="121" cy="141.1" r="101.85" fill="none" stroke="#e8e8e8" stroke-width="0.8" stroke-dasharray="0.8 1.2"/><circle cx="121" cy="141.1" r="107.80" fill="none" stroke="#a2a2a2" stroke-width="4.3"/><circle cx="121" cy="141.1" r="106.90" fill="none" stroke="#2a2a2a" stroke-width="1.2" stroke-dasharray="1 1.2"/><circle cx="121" cy="141.1" r="109.70" fill="none" stroke="#333" stroke-width="0.7"/><circle cx="121" cy="141.1" r="108.40" fill="none" stroke="#e8e8e8" stroke-width="0.8" stroke-dasharray="0.8 1.2"/><circle cx="121" cy="141.1" r="114.35" fill="none" stroke="#a2a2a2" stroke-width="4.3"/><circle cx="121" cy="141.1" r="113.45" fill="none" stroke="#2a2a2a" stroke-width="1.2" stroke-dasharray="1 1.2"/><circle cx="121" cy="141.1" r="116.25" fill="none" stroke="#333" stroke-width="0.7"/><circle cx="121" cy="141.1" r="114.95" fill="none" stroke="#e8e8e8" stroke-width="0.8" stroke-dasharray="0.8 1.2"/><circle cx="121" cy="141.1" r="120.90" fill="none" stroke="#a2a2a2" stroke-width="4.3"/><circle cx="121" cy="141.1" r="120.00" fill="none" stroke="#2a2a2a" stroke-width="1.2" stroke-dasharray="1 1.2"/><circle cx="121" cy="141.1" r="122.80" fill="none" stroke="#333" stroke-width="0.7"/><circle cx="121" cy="141.1" r="121.50" fill="none" stroke="#e8e8e8" stroke-width="0.8" stroke-dasharray="0.8 1.2"/><circle cx="121" cy="141.1" r="127.45" fill="none" stroke="#a2a2a2" stroke-width="4.3"/><circle cx="121" cy="141.1" r="126.55" fill="none" stroke="#2a2a2a" stroke-width="1.2" stroke-dasharray="1 1.2"/><circle cx="121" cy="141.1" r="129.35" fill="none" stroke="#333" stroke-width="0.7"/><circle cx="121" cy="141.1" r="128.05" fill="none" stroke="#e8e8e8" stroke-width="0.8" stroke-dasharray="0.8 1.2"/><circle cx="121" cy="141.1" r="134.00" fill="none" stroke="#a2a2a2" stroke-width="4.3"/><circle cx="121" cy="141.1" r="133.10" fill="none" stroke="#2a2a2a" stroke-width="1.2" stroke-dasharray="1 1.2"/><circle cx="121" cy="141.1" r="135.90" fill="none" stroke="#333" stroke-width="0.7"/><circle cx="121" cy="141.1" r="134.60" fill="none" stroke="#e8e8e8" stroke-width="0.8" stroke-dasharray="0.8 1.2"/><circle cx="121" cy="141.1" r="140.55" fill="none" stroke="#a2a2a2" stroke-width="4.3"/><circle cx="121" cy="141.1" r="139.65" fill="none" stroke="#2a2a2a" stroke-width="1.2" stroke-dasharray="1 1.2"/><circle cx="121" cy="141.1" r="142.45" fill="none" stroke="#333" stroke-width="0.7"/><circle cx="121" cy="141.1" r="141.15" fill="none" stroke="#e8e8e8" stroke-width="0.8" stroke-dasharray="0.8 1.2"/><circle cx="121" cy="141.1" r="147.10" fill="none" stroke="#a2a2a2" stroke-width="4.3"/><circle cx="121" cy="141.1" r="146.20" fill="none" stroke="#2a2a2a" stroke-width="1.2" stroke-dasharray="1 1.2"/><circle cx="121" cy="141.1" r="149.00" fill="none" stroke="#333" stroke-width="0.7"/><circle cx="121" cy="141.1" r="147.70" fill="none" stroke="#e8e8e8" stroke-width="0.8" stroke-dasharray="0.8 1.2"/><circle cx="121" cy="141.1" r="153.65" fill="none" stroke="#a2a2a2" stroke-width="4.3"/><circle cx="121" cy="141.1" r="152.75" fill="none" stroke="#2a2a2a" stroke-width="1.2" stroke-dasharray="1 1.2"/><circle cx="121" cy="141.1" r="155.55" fill="none" stroke="#333" stroke-width="0.7"/><circle cx="121" cy="141.1" r="154.25" fill="none" stroke="#e8e8e8" stroke-width="0.8" stroke-dasharray="0.8 1.2"/><circle cx="121" cy="141.1" r="160.20" fill="none" stroke="#a2a2a2" stroke-width="4.3"/><circle cx="121" cy="141.1" r="159.30" fill="none" stroke="#2a2a2a" stroke-width="1.2" stroke-dasharray="1 1.2"/><circle cx="121" cy="141.1" r="162.10" fill="none" stroke="#333" stroke-width="0.7"/><circle cx="121" cy="141.1" r="160.80" fill="none" stroke="#e8e8e8" stroke-width="0.8" stroke-dasharray="0.8 1.2"/><circle cx="121" cy="141.1" r="166.75" fill="none" stroke="#a2a2a2" stroke-width="4.3"/><circle cx="121" cy="141.1" r="165.85" fill="none" stroke="#2a2a2a" stroke-width="1.2" stroke-dasharray="1 1.2"/><circle cx="121" cy="141.1" r="168.65" fill="none" stroke="#333" stroke-width="0.7"/><circle cx="121" cy="141.1" r="167.35" fill="none" stroke="#e8e8e8" stroke-width="0.8" stroke-dasharray="0.8 1.2"/><circle cx="121" cy="141.1" r="173.30" fill="none" stroke="#a2a2a2" stroke-width="4.3"/><circle cx="121" cy="141.1" r="172.40" fill="none" stroke="#2a2a2a" stroke-width="1.2" stroke-dasharray="1 1.2"/><circle cx="121" cy="141.1" r="175.20" fill="none" stroke="#333" stroke-width="0.7"/><circle cx="121" cy="141.1" r="173.90" fill="none" stroke="#e8e8e8" stroke-width="0.8" stroke-dasharray="0.8 1.2"/><circle cx="121" cy="141.1" r="179.85" fill="none" stroke="#a2a2a2" stroke-width="4.3"/><circle cx="121" cy="141.1" r="178.95" fill="none" stroke="#2a2a2a" stroke-width="1.2" stroke-dasharray="1 1.2"/><circle cx="121" cy="141.1" r="181.75" fill="none" stroke="#333" stroke-width="0.7"/><circle cx="121" cy="141.1" r="180.45" fill="none" stroke="#e8e8e8" stroke-width="0.8" stroke-dasharray="0.8 1.2"/></g><rect x="201" y="6.8" width="26" height="10" fill="#fff" fill-opacity="0.8"/><circle cx="209" cy="10" r="0.9" fill="#e00"/><circle cx="209" cy="13.8" r="0.9" fill="#0a0"/><rect x="212" y="9.3" width="10" height="1.2" fill="#999"/><rect x="212" y="13" width="10" height="1.2" fill="#999"/><circle cx="224.5" cy="72.5" r="0.9" fill="#0a0"/><circle cx="194.5" cy="140.5" r="1" fill="#e00"/><text x="174.5" y="5" font-size="3.5" text-anchor="middle" fill="#333" font-family="Liberation Sans">Contour Plot of Elevation Data with Points A and B</text><rect x="120.5" y="143.3" width="1.6" height="1.2" fill="#777"/><rect x="133.2" y="143.3" width="1.6" height="1.2" fill="#777"/><rect x="145.9" y="143.3" width="1.6" height="1.2" fill="#777"/><rect x="158.6" y="143.3" width="1.6" height="1.2" fill="#777"/><rect x="171.3" y="143.3" width="1.6" height="1.2" fill="#777"/><rect x="184.0" y="143.3" width="1.6" height="1.2" fill="#777"/><rect x="196.7" y="143.3" width="1.6" height="1.2" fill="#777"/><rect x="209.4" y="143.3" width="1.6" height="1.2" fill="#777"/><rect x="222.1" y="143.3" width="1.6" height="1.2" fill="#777"/><rect x="116.5" y="140.5" width="2" height="1.2" fill="#777"/><rect x="116.5" y="117.5" width="2" height="1.2" fill="#777"/><rect x="116.5" y="94.5" width="2" height="1.2" fill="#777"/><rect x="116.5" y="71.5" width="2" height="1.2" fill="#777"/><rect x="116.5" y="48.5" width="2" height="1.2" fill="#777"/><rect x="116.5" y="25.5" width="2" height="1.2" fill="#777"/><rect x="170" y="147.5" width="9" height="1.3" fill="#888"/></svg>
<svg style="left:1191px;top:188px" width="72" height="44" viewBox="0 0 72 44" preserveAspectRatio="none"><rect width="72" height="44" fill="#fff"/><rect x="13.5" y="1.8" width="57" height="36.5" fill="none" stroke="#777" stroke-width="0.3"/><path d="M23.0 1.8 V38.3" stroke="#e6e6e6" stroke-width="0.3"/><path d="M13.5 7.0 H70.5" stroke="#e6e6e6" stroke-width="0.3"/><path d="M32.5 1.8 V38.3" stroke="#e6e6e6" stroke-width="0.3"/><path d="M13.5 12.2 H70.5" stroke="#e6e6e6" stroke-width="0.3"/><path d="M42.0 1.8 V38.3" stroke="#e6e6e6" stroke-width="0.3"/><path d="M13.5 17.4 H70.5" stroke="#e6e6e6" stroke-width="0.3"/><path d="M51.5 1.8 V38.3" stroke="#e6e6e6" stroke-width="0.3"/><path d="M13.5 22.7 H70.5" stroke="#e6e6e6" stroke-width="0.3"/><path d="M61.0 1.8 V38.3" stroke="#e6e6e6" stroke-width="0.3"/><path d="M13.5 27.9 H70.5" stroke="#e6e6e6" stroke-width="0.3"/><path d="M16 35.5 L57 35.5 Q62 35 64.5 27 Q66.5 16 68.5 3" fill="none" stroke="#79aee0" stroke-width="0.7"/><rect x="6" y="3.0" width="5.5" height="0.8" fill="#aaa"/><rect x="6" y="8.1" width="5.5" height="0.8" fill="#aaa"/><rect x="6" y="13.2" width="5.5" height="0.8" fill="#aaa"/><rect x="6" y="18.3" width="5.5" height="0.8" fill="#aaa"/><rect x="6" y="23.4" width="5.5" height="0.8" fill="#aaa"/><rect x="6" y="28.5" width="5.5" height="0.8" fill="#aaa"/><rect x="6" y="33.6" width="5.5" height="0.8" fill="#aaa"/><rect x="15.5" y="39.5" width="1.6" height="0.8" fill="#aaa"/><rect x="26.0" y="39.5" width="1.6" height="0.8" fill="#aaa"/><rect x="36.5" y="39.5" width="1.6" height="0.8" fill="#aaa"/><rect x="47.0" y="39.5" width="1.6" height="0.8" fill="#aaa"/><rect x="57.5" y="39.5" width="1.6" height="0.8" fill="#aaa"/><rect x="68.0" y="39.5" width="1.6" height="0.8" fill="#aaa"/><rect x="2" y="14" width="0.8" height="12" fill="#ccc"/><rect x="41" y="42" width="1.5" height="0.8" fill="#ccc"/></svg>
<svg style="left:1191px;top:237px" width="72" height="44" viewBox="0 0 72 44" preserveAspectRatio="none"><rect width="72" height="44" fill="#fff"/><rect x="13.5" y="1.8" width="57" height="36.5" fill="none" stroke="#777" stroke-width="0.3"/><path d="M23.0 1.8 V38.3" stroke="#e6e6e6" stroke-width="0.3"/><path d="M13.5 7.0 H70.5" stroke="#e6e6e6" stroke-width="0.3"/><path d="M32.5 1.8 V38.3" stroke="#e6e6e6" stroke-width="0.3"/><path d="M13.5 12.2 H70.5" stroke="#e6e6e6" stroke-width="0.3"/><path d="M42.0 1.8 V38.3" stroke="#e6e6e6" stroke-width="0.3"/><path d="M13.5 17.4 H70.5" stroke="#e6e6e6" stroke-width="0.3"/><path d="M51.5 1.8 V38.3" stroke="#e6e6e6" stroke-width="0.3"/><path d="M13.5 22.7 H70.5" stroke="#e6e6e6" stroke-width="0.3"/><path d="M61.0 1.8 V38.3" stroke="#e6e6e6" stroke-width="0.3"/><path d="M13.5 27.9 H70.5" stroke="#e6e6e6" stroke-width="0.3"/><path d="M16 35.5 L57 35.5 Q62 35 64.5 27 Q66.5 16 68.5 3" fill="none" stroke="#79aee0" stroke-width="0.7"/><rect x="6" y="3.0" width="5.5" height="0.8" fill="#aaa"/><rect x="6" y="8.1" width="5.5" height="0.8" fill="#aaa"/><rect x="6" y="13.2" width="5.5" height="0.8" fill="#aaa"/><rect x="6" y="18.3" width="5.5" height="0.8" fill="#aaa"/><rect x="6" y="23.4" width="5.5" height="0.8" fill="#aaa"/><rect x="6" y="28.5" width="5.5" height="0.8" fill="#aaa"/><rect x="6" y="33.6" width="5.5" height="0.8" fill="#aaa"/><rect x="15.5" y="39.5" width="1.6" height="0.8" fill="#aaa"/><rect x="26.0" y="39.5" width="1.6" height="0.8" fill="#aaa"/><rect x="36.5" y="39.5" width="1.6" height="0.8" fill="#aaa"/><rect x="47.0" y="39.5" width="1.6" height="0.8" fill="#aaa"/><rect x="57.5" y="39.5" width="1.6" height="0.8" fill="#aaa"/><rect x="68.0" y="39.5" width="1.6" height="0.8" fill="#aaa"/><rect x="2" y="14" width="0.8" height="12" fill="#ccc"/><rect x="41" y="42" width="1.5" height="0.8" fill="#ccc"/></svg>
<svg style="left:1191px;top:286px" width="72" height="44" viewBox="0 0 72 44" preserveAspectRatio="none"><rect width="72" height="44" fill="#fff"/><rect x="13.5" y="1.8" width="57" height="36.5" fill="none" stroke="#777" stroke-width="0.3"/><path d="M23.0 1.8 V38.3" stroke="#e6e6e6" stroke-width="0.3"/><path d="M13.5 7.0 H70.5" stroke="#e6e6e6" stroke-width="0.3"/><path d="M32.5 1.8 V38.3" stroke="#e6e6e6" stroke-width="0.3"/><path d="M13.5 12.2 H70.5" stroke="#e6e6e6" stroke-width="0.3"/><path d="M42.0 1.8 V38.3" stroke="#e6e6e6" stroke-width="0.3"/><path d="M13.5 17.4 H70.5" stroke="#e6e6e6" stroke-width="0.3"/><path d="M51.5 1.8 V38.3" stroke="#e6e6e6" stroke-width="0.3"/><path d="M13.5 22.7 H70.5" stroke="#e6e6e6" stroke-width="0.3"/><path d="M61.0 1.8 V38.3" stroke="#e6e6e6" stroke-width="0.3"/><path d="M13.5 27.9 H70.5" stroke="#e6e6e6" stroke-width="0.3"/><path d="M16 35.5 L57 35.5 Q62 35 64.5 27 Q66.5 16 68.5 3" fill="none" stroke="#79aee0" stroke-width="0.7"/><rect x="6" y="3.0" width="5.5" height="0.8" fill="#aaa"/><rect x="6" y="8.1" width="5.5" height="0.8" fill="#aaa"/><rect x="6" y="13.2" width="5.5" height="0.8" fill="#aaa"/><rect x="6" y="18.3" width="5.5" height="0.8" fill="#aaa"/><rect x="6" y="23.4" width="5.5" height="0.8" fill="#aaa"/><rect x="6" y="28.5" width="5.5" height="0.8" fill="#aaa"/><rect x="6" y="33.6" width="5.5" height="0.8" fill="#aaa"/><rect x="15.5" y="39.5" width="1.6" height="0.8" fill="#aaa"/><rect x="26.0" y="39.5" width="1.6" height="0.8" fill="#aaa"/><rect x="36.5" y="39.5" width="1.6" height="0.8" fill="#aaa"/><rect x="47.0" y="39.5" width="1.6" height="0.8" fill="#aaa"/><rect x="57.5" y="39.5" width="1.6" height="0.8" fill="#aaa"/><rect x="68.0" y="39.5" width="1.6" height="0.8" fill="#aaa"/><rect x="2" y="14" width="0.8" height="12" fill="#ccc"/><rect x="41" y="42" width="1.5" height="0.8" fill="#ccc"/></svg>
<svg style="left:1191px;top:335px" width="72" height="46" viewBox="0 0 72 46" preserveAspectRatio="none"><rect width="72" height="46" fill="#fff"/><rect x="7" y="3" width="63" height="37" fill="none" stroke="#555" stroke-width="0.4"/><path d="M14.9 3 V40" stroke="#e0e0e0" stroke-width="0.3"/><path d="M22.8 3 V40" stroke="#e0e0e0" stroke-width="0.3"/><path d="M30.6 3 V40" stroke="#e0e0e0" stroke-width="0.3"/><path d="M38.5 3 V40" stroke="#e0e0e0" stroke-width="0.3"/><path d="M46.4 3 V40" stroke="#e0e0e0" stroke-width="0.3"/><path d="M54.2 3 V40" stroke="#e0e0e0" stroke-width="0.3"/><path d="M62.1 3 V40" stroke="#e0e0e0" stroke-width="0.3"/><path d="M7 9.2 H70" stroke="#e0e0e0" stroke-width="0.3"/><path d="M7 15.3 H70" stroke="#e0e0e0" stroke-width="0.3"/><path d="M7 21.5 H70" stroke="#e0e0e0" stroke-width="0.3"/><path d="M7 27.7 H70" stroke="#e0e0e0" stroke-width="0.3"/><path d="M7 33.8 H70" stroke="#e0e0e0" stroke-width="0.3"/><path d="M8.0 33.8 L9.5 34.2 L11.0 34.6 L12.6 35.0 L14.1 35.3 L15.6 35.6 L17.2 35.9 L18.7 36.2 L20.2 36.5 L21.7 36.7 L23.2 37.0 L24.8 37.1 L26.3 37.3 L27.8 37.5 L29.3 37.6 L30.9 37.7 L32.4 37.8 L33.9 37.9 L35.5 38.0 L37.0 38.0 L38.5 38.0 L40.0 38.0 L41.6 38.0 L43.1 37.9 L44.6 37.8 L46.1 37.7 L47.6 37.6 L49.2 37.5 L50.7 37.3 L52.2 37.1 L53.8 37.0 L55.3 36.7 L56.8 36.5 L58.3 36.2 L59.9 35.9 L61.4 35.6 L62.9 35.3 L64.4 35.0 L65.9 34.6 L67.5 34.2 L69.0 33.8" fill="none" stroke="#ff6060" stroke-width="0.5"/><path d="M8.0 27.2 L9.5 28.3 L11.0 29.3 L12.6 30.2 L14.1 31.1 L15.6 31.9 L17.2 32.7 L18.7 33.4 L20.2 34.1 L21.7 34.7 L23.2 35.3 L24.8 35.8 L26.3 36.3 L27.8 36.7 L29.3 37.0 L30.9 37.3 L32.4 37.6 L33.9 37.8 L35.5 37.9 L37.0 38.0 L38.5 38.0 L40.0 38.0 L41.6 37.9 L43.1 37.8 L44.6 37.6 L46.1 37.3 L47.6 37.0 L49.2 36.7 L50.7 36.3 L52.2 35.8 L53.8 35.3 L55.3 34.7 L56.8 34.1 L58.3 33.4 L59.9 32.7 L61.4 31.9 L62.9 31.1 L64.4 30.2 L65.9 29.3 L67.5 28.3 L69.0 27.2" fill="none" stroke="#40a040" stroke-width="0.5"/><path d="M8.0 20.6 L9.5 22.3 L11.0 23.9 L12.6 25.4 L14.1 26.9 L15.6 28.2 L17.2 29.5 L18.7 30.6 L20.2 31.7 L21.7 32.7 L23.2 33.6 L24.8 34.5 L26.3 35.2 L27.8 35.9 L29.3 36.4 L30.9 36.9 L32.4 37.3 L33.9 37.6 L35.5 37.8 L37.0 38.0 L38.5 38.0 L40.0 38.0 L41.6 37.8 L43.1 37.6 L44.6 37.3 L46.1 36.9 L47.6 36.4 L49.2 35.9 L50.7 35.2 L52.2 34.5 L53.8 33.6 L55.3 32.7 L56.8 31.7 L58.3 30.6 L59.9 29.5 L61.4 28.2 L62.9 26.9 L64.4 25.4 L65.9 23.9 L67.5 22.3 L69.0 20.6" fill="none" stroke="#3030ff" stroke-width="0.5"/><path d="M8.0 14.0 L9.5 16.3 L11.0 18.6 L12.6 20.7 L14.1 22.6 L15.6 24.5 L17.2 26.2 L18.7 27.9 L20.2 29.4 L21.7 30.7 L23.2 32.0 L24.8 33.1 L26.3 34.2 L27.8 35.1 L29.3 35.8 L30.9 36.5 L32.4 37.0 L33.9 37.5 L35.5 37.8 L37.0 37.9 L38.5 38.0 L40.0 37.9 L41.6 37.8 L43.1 37.5 L44.6 37.0 L46.1 36.5 L47.6 35.8 L49.2 35.1 L50.7 34.2 L52.2 33.1 L53.8 32.0 L55.3 30.7 L56.8 29.4 L58.3 27.9 L59.9 26.2 L61.4 24.5 L62.9 22.6 L64.4 20.7 L65.9 18.6 L67.5 16.3 L69.0 14.0" fill="none" stroke="#40d0e0" stroke-width="0.5"/><path d="M8.0 7.4 L9.5 10.4 L11.0 13.2 L12.6 15.9 L14.1 18.4 L15.6 20.8 L17.2 23.0 L18.7 25.1 L20.2 27.0 L21.7 28.7 L23.2 30.4 L24.8 31.8 L26.3 33.1 L27.8 34.3 L29.3 35.2 L30.9 36.1 L32.4 36.8 L33.9 37.3 L35.5 37.7 L37.0 37.9 L38.5 38.0 L40.0 37.9 L41.6 37.7 L43.1 37.3 L44.6 36.8 L46.1 36.1 L47.6 35.2 L49.2 34.3 L50.7 33.1 L52.2 31.8 L53.8 30.4 L55.3 28.7 L56.8 27.0 L58.3 25.1 L59.9 23.0 L61.4 20.8 L62.9 18.4 L64.4 15.9 L65.9 13.2 L67.5 10.4 L69.0 7.4" fill="none" stroke="#e040e0" stroke-width="0.5"/><path d="M8.0 4.0 L9.5 4.4 L11.0 7.9 L12.6 11.1 L14.1 14.2 L15.6 17.1 L17.2 19.8 L18.7 22.3 L20.2 24.6 L21.7 26.7 L23.2 28.7 L24.8 30.5 L26.3 32.0 L27.8 33.4 L29.3 34.7 L30.9 35.7 L32.4 36.5 L33.9 37.2 L35.5 37.6 L37.0 37.9 L38.5 38.0 L40.0 37.9 L41.6 37.6 L43.1 37.2 L44.6 36.5 L46.1 35.7 L47.6 34.7 L49.2 33.4 L50.7 32.0 L52.2 30.5 L53.8 28.7 L55.3 26.7 L56.8 24.6 L58.3 22.3 L59.9 19.8 L61.4 17.1 L62.9 14.2 L64.4 11.1 L65.9 7.9 L67.5 4.4 L69.0 4.0" fill="none" stroke="#e0e040" stroke-width="0.5"/><rect x="9" y="5" width="14" height="14" fill="#fff" fill-opacity="0.7"/><rect x="10" y="6.0" width="3" height="0.6" fill="#ff6060"/><rect x="14" y="5.9" width="7" height="0.8" fill="#bbb"/><rect x="10" y="8.2" width="3" height="0.6" fill="#40a040"/><rect x="14" y="8.1" width="7" height="0.8" fill="#bbb"/><rect x="10" y="10.4" width="3" height="0.6" fill="#3030ff"/><rect x="14" y="10.3" width="7" height="0.8" fill="#bbb"/><rect x="10" y="12.6" width="3" height="0.6" fill="#40d0e0"/><rect x="14" y="12.5" width="7" height="0.8" fill="#bbb"/><rect x="10" y="14.8" width="3" height="0.6" fill="#e040e0"/><rect x="14" y="14.7" width="7" height="0.8" fill="#bbb"/><rect x="10" y="17.0" width="3" height="0.6" fill="#e0e040"/><rect x="14" y="16.9" width="7" height="0.8" fill="#bbb"/><rect x="20" y="0.8" width="34" height="1" fill="#aaa"/></svg>
<svg style="left:1191px;top:386px" width="72" height="47" viewBox="0 0 72 47" preserveAspectRatio="none"><rect width="72" height="47" fill="#fff"/><rect x="3.0" y="3.0" width="20" height="18" fill="none" stroke="#888" stroke-width="0.3"/><path d="M8.0 3.0 V21.0" stroke="#e4e4e4" stroke-width="0.3"/><path d="M13.0 3.0 V21.0" stroke="#e4e4e4" stroke-width="0.3"/><path d="M18.0 3.0 V21.0" stroke="#e4e4e4" stroke-width="0.3"/><path d="M4.0 4.0 L4.9 6.8 L5.8 9.4 L6.7 11.7 L7.6 13.6 L8.5 15.2 L9.4 16.6 L10.3 17.6 L11.2 18.4 L12.1 18.9 L13.0 19.0 L13.9 18.9 L14.8 18.4 L15.7 17.6 L16.6 16.6 L17.5 15.2 L18.4 13.6 L19.3 11.7 L20.2 9.4 L21.1 6.9 L22.0 4.0" fill="none" stroke="#8bb8e0" stroke-width="0.5"/><rect x="26.5" y="3.0" width="20" height="18" fill="none" stroke="#888" stroke-width="0.3"/><path d="M31.5 3.0 V21.0" stroke="#e4e4e4" stroke-width="0.3"/><path d="M36.5 3.0 V21.0" stroke="#e4e4e4" stroke-width="0.3"/><path d="M41.5 3.0 V21.0" stroke="#e4e4e4" stroke-width="0.3"/><path d="M27.5 4.0 L28.4 6.8 L29.3 9.4 L30.2 11.7 L31.1 13.6 L32.0 15.2 L32.9 16.6 L33.8 17.6 L34.7 18.4 L35.6 18.9 L36.5 19.0 L37.4 18.9 L38.3 18.4 L39.2 17.6 L40.1 16.6 L41.0 15.2 L41.9 13.6 L42.8 11.7 L43.7 9.4 L44.6 6.9 L45.5 4.0" fill="none" stroke="#8bb8e0" stroke-width="0.5"/><rect x="50.0" y="3.0" width="20" height="18" fill="none" stroke="#888" stroke-width="0.3"/><path d="M55.0 3.0 V21.0" stroke="#e4e4e4" stroke-width="0.3"/><path d="M60.0 3.0 V21.0" stroke="#e4e4e4" stroke-width="0.3"/><path d="M65.0 3.0 V21.0" stroke="#e4e4e4" stroke-width="0.3"/><path d="M51.0 4.0 L51.9 6.8 L52.8 9.4 L53.7 11.7 L54.6 13.6 L55.5 15.2 L56.4 16.6 L57.3 17.6 L58.2 18.4 L59.1 18.9 L60.0 19.0 L60.9 18.9 L61.8 18.4 L62.7 17.6 L63.6 16.6 L64.5 15.2 L65.4 13.6 L66.3 11.7 L67.2 9.4 L68.1 6.9 L69.0 4.0" fill="none" stroke="#8bb8e0" stroke-width="0.5"/><rect x="3.0" y="25.5" width="20" height="18" fill="none" stroke="#888" stroke-width="0.3"/><path d="M8.0 25.5 V43.5" stroke="#e4e4e4" stroke-width="0.3"/><path d="M13.0 25.5 V43.5" stroke="#e4e4e4" stroke-width="0.3"/><path d="M18.0 25.5 V43.5" stroke="#e4e4e4" stroke-width="0.3"/><path d="M4.0 26.5 L4.9 29.3 L5.8 31.9 L6.7 34.1 L7.6 36.1 L8.5 37.8 L9.4 39.1 L10.3 40.1 L11.2 40.9 L12.1 41.4 L13.0 41.5 L13.9 41.4 L14.8 40.9 L15.7 40.1 L16.6 39.1 L17.5 37.8 L18.4 36.1 L19.3 34.1 L20.2 31.9 L21.1 29.4 L22.0 26.5" fill="none" stroke="#8bb8e0" stroke-width="0.5"/><rect x="26.5" y="25.5" width="20" height="18" fill="none" stroke="#888" stroke-width="0.3"/><path d="M31.5 25.5 V43.5" stroke="#e4e4e4" stroke-width="0.3"/><path d="M36.5 25.5 V43.5" stroke="#e4e4e4" stroke-width="0.3"/><path d="M41.5 25.5 V43.5" stroke="#e4e4e4" stroke-width="0.3"/><path d="M27.5 26.5 L28.4 29.3 L29.3 31.9 L30.2 34.1 L31.1 36.1 L32.0 37.8 L32.9 39.1 L33.8 40.1 L34.7 40.9 L35.6 41.4 L36.5 41.5 L37.4 41.4 L38.3 40.9 L39.2 40.1 L40.1 39.1 L41.0 37.8 L41.9 36.1 L42.8 34.1 L43.7 31.9 L44.6 29.4 L45.5 26.5" fill="none" stroke="#8bb8e0" stroke-width="0.5"/><rect x="50.0" y="25.5" width="20" height="18" fill="none" stroke="#888" stroke-width="0.3"/><path d="M55.0 25.5 V43.5" stroke="#e4e4e4" stroke-width="0.3"/><path d="M60.0 25.5 V43.5" stroke="#e4e4e4" stroke-width="0.3"/><path d="M65.0 25.5 V43.5" stroke="#e4e4e4" stroke-width="0.3"/><path d="M51.0 26.5 L51.9 29.3 L52.8 31.9 L53.7 34.1 L54.6 36.1 L55.5 37.8 L56.4 39.1 L57.3 40.1 L58.2 40.9 L59.1 41.4 L60.0 41.5 L60.9 41.4 L61.8 40.9 L62.7 40.1 L63.6 39.1 L64.5 37.8 L65.4 36.1 L66.3 34.1 L67.2 31.9 L68.1 29.4 L69.0 26.5" fill="none" stroke="#8bb8e0" stroke-width="0.5"/></svg>
<svg style="left:1191px;top:438px" width="72" height="70" viewBox="0 0 72 70" preserveAspectRatio="none"><rect width="72" height="70" fill="#fff"/><path d="M6 26 L30 9 L30 40 L8 52Z" fill="#f0f0f0" stroke="#ddd" stroke-width="0.3"/><path d="M30 9 L60 16 L60 44 L30 40Z" fill="#e9e9e9" stroke="#ddd" stroke-width="0.3"/><path d="M8 52 L30 40 L60 44 L40 60Z" fill="#e4e4e4" stroke="#d4d4d4" stroke-width="0.3"/><path d="M36.0 10.4 L36.0 40.8" stroke="#d0d0d0" stroke-width="0.3"/><path d="M10.8 22.6 L12.4 49.6" stroke="#d0d0d0" stroke-width="0.3"/><path d="M42.0 11.8 L42.0 41.6" stroke="#d0d0d0" stroke-width="0.3"/><path d="M15.6 19.2 L16.8 47.2" stroke="#d0d0d0" stroke-width="0.3"/><path d="M48.0 13.2 L48.0 42.4" stroke="#d0d0d0" stroke-width="0.3"/><path d="M20.4 15.8 L21.2 44.8" stroke="#d0d0d0" stroke-width="0.3"/><path d="M54.0 14.6 L54.0 43.2" stroke="#d0d0d0" stroke-width="0.3"/><path d="M25.2 12.4 L25.6 42.4" stroke="#d0d0d0" stroke-width="0.3"/><path d="M8 52 L40 60 L60 44" fill="none" stroke="#444" stroke-width="0.4"/><rect x="62" y="17.0" width="2" height="0.9" fill="#999"/><rect x="12.0" y="56.0" width="1.6" height="0.9" fill="#999"/><rect x="62" y="22.5" width="2" height="0.9" fill="#999"/><rect x="18.0" y="57.5" width="1.6" height="0.9" fill="#999"/><rect x="62" y="28.0" width="2" height="0.9" fill="#999"/><rect x="24.0" y="59.0" width="1.6" height="0.9" fill="#999"/><rect x="62" y="33.5" width="2" height="0.9" fill="#999"/><rect x="30.0" y="60.5" width="1.6" height="0.9" fill="#999"/><rect x="62" y="39.0" width="2" height="0.9" fill="#999"/><rect x="36.0" y="62.0" width="1.6" height="0.9" fill="#999"/><defs><linearGradient id="vc" x1="0" y1="0" x2="0" y2="1"><stop offset="0" stop-color="#fde725"/><stop offset="0.35" stop-color="#5ec962"/><stop offset="0.6" stop-color="#21918c"/><stop offset="0.85" stop-color="#3b528b"/><stop offset="1" stop-color="#440154"/></linearGradient></defs><path d="M17.5 17 Q20 11 31 11 Q39 11 40.5 13 L40.5 30 L44.7 23.6 Q49 20 53 21.6 L52 47 Q46 54 34 53 Q22 51 19.5 42.5Z" fill="url(#vc)"/><path d="M17.5 17 Q20 11 31 11 Q39 11 40.5 13" fill="none" stroke="#fde725" stroke-width="2"/><path d="M44.7 23.6 Q49 20 53 21.6" fill="none" stroke="#e8e419" stroke-width="1.6"/><path d="M22 40 Q30 35 40.5 32 L46 34 Q50 40 50 46 Q42 50 34 49 Q25 47 22 40Z" fill="#3b528b" fill-opacity="0.5"/></svg>
<svg style="left:1191px;top:513px" width="72" height="71" viewBox="0 0 72 71" preserveAspectRatio="none"><rect width="72" height="71" fill="#fff"/><path d="M6 26 L30 9 L30 40 L8 52Z" fill="#f0f0f0" stroke="#ddd" stroke-width="0.3"/><path d="M30 9 L60 16 L60 44 L30 40Z" fill="#e9e9e9" stroke="#ddd" stroke-width="0.3"/><path d="M8 52 L30 40 L60 44 L40 60Z" fill="#e4e4e4" stroke="#d4d4d4" stroke-width="0.3"/><path d="M36.0 10.4 L36.0 40.8" stroke="#d0d0d0" stroke-width="0.3"/><path d="M10.8 22.6 L12.4 49.6" stroke="#d0d0d0" stroke-width="0.3"/><path d="M42.0 11.8 L42.0 41.6" stroke="#d0d0d0" stroke-width="0.3"/><path d="M15.6 19.2 L16.8 47.2" stroke="#d0d0d0" stroke-width="0.3"/><path d="M48.0 13.2 L48.0 42.4" stroke="#d0d0d0" stroke-width="0.3"/><path d="M20.4 15.8 L21.2 44.8" stroke="#d0d0d0" stroke-width="0.3"/><path d="M54.0 14.6 L54.0 43.2" stroke="#d0d0d0" stroke-width="0.3"/><path d="M25.2 12.4 L25.6 42.4" stroke="#d0d0d0" stroke-width="0.3"/><path d="M8 52 L40 60 L60 44" fill="none" stroke="#444" stroke-width="0.4"/><rect x="62" y="17.0" width="2" height="0.9" fill="#999"/><rect x="12.0" y="56.0" width="1.6" height="0.9" fill="#999"/><rect x="62" y="22.5" width="2" height="0.9" fill="#999"/><rect x="18.0" y="57.5" width="1.6" height="0.9" fill="#999"/><rect x="62" y="28.0" width="2" height="0.9" fill="#999"/><rect x="24.0" y="59.0" width="1.6" height="0.9" fill="#999"/><rect x="62" y="33.5" width="2" height="0.9" fill="#999"/><rect x="30.0" y="60.5" width="1.6" height="0.9" fill="#999"/><rect x="62" y="39.0" width="2" height="0.9" fill="#999"/><rect x="36.0" y="62.0" width="1.6" height="0.9" fill="#999"/><defs><radialGradient id="vb3" cx="34" cy="42" r="30" gradientUnits="userSpaceOnUse"><stop offset="0" stop-color="#46327e"/><stop offset="0.25" stop-color="#365c8d"/><stop offset="0.5" stop-color="#1f9a8a"/><stop offset="0.78" stop-color="#4ac16d"/><stop offset="1" stop-color="#d2e21b"/></radialGradient></defs><path d="M11 26 Q20 24 28 8.5 Q36 20 59.6 18 Q56 32 48 40 Q42 47 34 46.5 Q20 40 11 26Z" fill="url(#vb3)"/><path d="M36 40 Q40 33 42.7 32.6 Q46 36 48 40 Q42 45 36 44Z" fill="#3fbc73" fill-opacity="0.8"/></svg>
<div class="a" style="left:1191px;top:589px;width:72px;height:47px;border:2px solid #1a72bb;background:#fff"></div>
<svg style="left:1193.5px;top:591.5px" width="67" height="42" viewBox="0 0 229.4 151.3" preserveAspectRatio="none"><rect x="0" y="0" width="229.4" height="151.3" fill="#fff"/><path d="M9.1 54 L44.2 29.1 L44.2 75 L10.6 100.3Z" fill="#f2f2f2" stroke="#e0e0e0" stroke-width="0.4"/><path d="M44.2 29.1 L104.2 43.9 L103.2 88.6 L44.2 75Z" fill="#ececec" stroke="#e0e0e0" stroke-width="0.4"/><path d="M10.6 100.3 L44.2 75 L103.2 88.6 L69.6 120.2Z" fill="#e8e8e8" stroke="#d8d8d8" stroke-width="0.4"/><path d="M16.1 49.0 L17.3 95.2" stroke="#d4d4d4" stroke-width="0.4"/><path d="M56.2 32.1 L56.0 77.7" stroke="#d4d4d4" stroke-width="0.4"/><path d="M23.1 44.0 L24.0 90.2" stroke="#d4d4d4" stroke-width="0.4"/><path d="M68.2 35.0 L67.8 80.4" stroke="#d4d4d4" stroke-width="0.4"/><path d="M30.2 39.1 L30.8 85.1" stroke="#d4d4d4" stroke-width="0.4"/><path d="M80.2 38.0 L79.6 83.2" stroke="#d4d4d4" stroke-width="0.4"/><path d="M37.2 34.1 L37.5 80.1" stroke="#d4d4d4" stroke-width="0.4"/><path d="M92.2 40.9 L91.4 85.9" stroke="#d4d4d4" stroke-width="0.4"/><path d="M10.6 100.3 L69.6 120.2 L103.2 88.6" fill="none" stroke="#333" stroke-width="0.5"/><defs><linearGradient id="virt" x1="0" y1="0" x2="0" y2="1"><stop offset="0" stop-color="#fde725"/><stop offset="0.3" stop-color="#b5de2b"/><stop offset="0.5" stop-color="#35b779"/><stop offset="0.68" stop-color="#26828e"/><stop offset="0.85" stop-color="#3e4a89"/><stop offset="1" stop-color="#440154"/></linearGradient><clipPath id="cct"><rect x="121" y="6.3" width="107" height="134.8"/></clipPath></defs><use href="#surf"/><path d="M104.2 43.9 L103.2 88.6" stroke="#555" stroke-width="0.4"/><rect x="106" y="48.0" width="2.5" height="1.2" fill="#888"/><rect x="106" y="55.0" width="2.5" height="1.2" fill="#888"/><rect x="106" y="62.0" width="2.5" height="1.2" fill="#888"/><rect x="106" y="69.0" width="2.5" height="1.2" fill="#888"/><rect x="106" y="76.0" width="2.5" height="1.2" fill="#888"/><rect x="106" y="83.0" width="2.5" height="1.2" fill="#888"/><text x="55.9" y="19" font-size="3.6" text-anchor="middle" fill="#444" font-family="Liberation Sans">3D Surface Plot of Elevation Data</text><rect x="12.0" y="104.0" width="2.2" height="1.2" fill="#999"/><rect x="76.0" y="118.0" width="2.2" height="1.2" fill="#999"/><rect x="24.0" y="108.3" width="2.2" height="1.2" fill="#999"/><rect x="82.5" y="112.0" width="2.2" height="1.2" fill="#999"/><rect x="36.0" y="112.6" width="2.2" height="1.2" fill="#999"/><rect x="89.0" y="106.0" width="2.2" height="1.2" fill="#999"/><rect x="48.0" y="116.9" width="2.2" height="1.2" fill="#999"/><rect x="95.5" y="100.0" width="2.2" height="1.2" fill="#999"/><rect x="60.0" y="121.2" width="2.2" height="1.2" fill="#999"/><rect x="102.0" y="94.0" width="2.2" height="1.2" fill="#999"/><rect x="121" y="6.3" width="107" height="134.8" fill="#fff" stroke="#222" stroke-width="0.4"/><g clip-path="url(#cct)"><circle cx="121" cy="141.1" r="3.00" fill="none" stroke="#a2a2a2" stroke-width="4.3"/><circle cx="121" cy="141.1" r="2.10" fill="none" stroke="#2a2a2a" stroke-width="1.2" stroke-dasharray="1 1.2"/><circle cx="121" cy="141.1" r="4.90" fill="none" stroke="#333" stroke-width="0.7"/><circle cx="121" cy="141.1" r="3.60" fill="none" stroke="#e8e8e8" stroke-width="0.8" stroke-dasharray="0.8 1.2"/><circle cx="121" cy="141.1" r="9.55" fill="none" stroke="#a2a2a2" stroke-width="4.3"/><circle cx="121" cy="141.1" r="8.65" fill="none" stroke="#2a2a2a" stroke-width="1.2" stroke-dasharray="1 1.2"/><circle cx="121" cy="141.1" r="11.45" fill="none" stroke="#333" stroke-width="0.7"/><circle cx="121" cy="141.1" r="10.15" fill="none" stroke="#e8e8e8" stroke-width="0.8" stroke-dasharray="0.8 1.2"/><circle cx="121" cy="141.1" r="16.10" fill="none" stroke="#a2a2a2" stroke-width="4.3"/><circle cx="121" cy="141.1" r="15.20" fill="none" stroke="#2a2a2a" stroke-width="1.2" stroke-dasharray="1 1.2"/><circle cx="121" cy="141.1" r="18.00" fill="none" stroke="#333" stroke-width="0.7"/><circle cx="121" cy="141.1" r="16.70" fill="none" stroke="#e8e8e8" stroke-width="0.8" stroke-dasharray="0.8 1.2"/><circle cx="121" cy="141.1" r="22.65" fill="none" stroke="#a2a2a2" stroke-width="4.3"/><circle cx="121" cy="141.1" r="21.75" fill="none" stroke="#2a2a2a" stroke-width="1.2" stroke-dasharray="1 1.2"/><circle cx="121" cy="141.1" r="24.55" fill="none" stroke="#333" stroke-width="0.7"/><circle cx="121" cy="141.1" r="23.25" fill="none" stroke="#e8e8e8" stroke-width="0.8" stroke-dasharray="0.8 1.2"/><circle cx="121" cy="141.1" r="29.20" fill="none" stroke="#a2a2a2" stroke-width="4.3"/><circle cx="121" cy="141.1" r="28.30" fill="none" stroke="#2a2a2a" stroke-width="1.2" stroke-dasharray="1 1.2"/><circle cx="121" cy="141.1" r="31.10" fill="none" stroke="#333" stroke-width="0.7"/><circle cx="121" cy="141.1" r="29.80" fill="none" stroke="#e8e8e8" stroke-width="0.8" stroke-dasharray="0.8 1.2"/><circle cx="121" cy="141.1" r="35.75" fill="none" stroke="#a2a2a2" stroke-width="4.3"/><circle cx="121" cy="141.1" r="34.85" fill="none" stroke="#2a2a2a" stroke-width="1.2" stroke-dasharray="1 1.2"/><circle cx="121" cy="141.1" r="37.65" fill="none" stroke="#333" stroke-width="0.7"/><circle cx="121" cy="141.1" r="36.35" fill="none" stroke="#e8e8e8" stroke-width="0.8" stroke-dasharray="0.8 1.2"/><circle cx="121" cy="141.1" r="42.30" fill="none" stroke="#a2a2a2" stroke-width="4.3"/><circle cx="121" cy="141.1" r="41.40" fill="none" stroke="#2a2a2a" stroke-width="1.2" stroke-dasharray="1 1.2"/><circle cx="121" cy="141.1" r="44.20" fill="none" stroke="#333" stroke-width="0.7"/><circle cx="121" cy="141.1" r="42.90" fill="none" stroke="#e8e8e8" stroke-width="0.8" stroke-dasharray="0.8 1.2"/><circle cx="121" cy="141.1" r="48.85" fill="none" stroke="#a2a2a2" stroke-width="4.3"/><circle cx="121" cy="141.1" r="47.95" fill="none" stroke="#2a2a2a" stroke-width="1.2" stroke-dasharray="1 1.2"/><circle cx="121" cy="141.1" r="50.75" fill="none" stroke="#333" stroke-width="0.7"/><circle cx="121" cy="141.1" r="49.45" fill="none" stroke="#e8e8e8" stroke-width="0.8" stroke-dasharray="0.8 1.2"/><circle cx="121" cy="141.1" r="55.40" fill="none" stroke="#a2a2a2" stroke-width="4.3"/><circle cx="121" cy="141.1" r="54.50" fill="none" stroke="#2a2a2a" stroke-width="1.2" stroke-dasharray="1 1.2"/><circle cx="121" cy="141.1" r="57.30" fill="none" stroke="#333" stroke-width="0.7"/><circle cx="121" cy="141.1" r="56.00" fill="none" stroke="#e8e8e8" stroke-width="0.8" stroke-dasharray="0.8 1.2"/><circle cx="121" cy="141.1" r="61.95" fill="none" stroke="#a2a2a2" stroke-width="4.3"/><circle cx="121" cy="141.1" r="61.05" fill="none" stroke="#2a2a2a" stroke-width="1.2" stroke-dasharray="1 1.2"/><circle cx="121" cy="141.1" r="63.85" fill="none" stroke="#333" stroke-width="0.7"/><circle cx="121" cy="141.1" r="62.55" fill="none" stroke="#e8e8e8" stroke-width="0.8" stroke-dasharray="0.8 1.2"/><circle cx="121" cy="141.1" r="68.50" fill="none" stroke="#a2a2a2" stroke-width="4.3"/><circle cx="121" cy="141.1" r="67.60" fill="none" stroke="#2a2a2a" stroke-width="1.2" stroke-dasharray="1 1.2"/><circle cx="121" cy="141.1" r="70.40" fill="none" stroke="#333" stroke-width="0.7"/><circle cx="121" cy="141.1" r="69.10" fill="none" stroke="#e8e8e8" stroke-width="0.8" stroke-dasharray="0.8 1.2"/><circle cx="121" cy="141.1" r="75.05" fill="none" stroke="#a2a2a2" stroke-width="4.3"/><circle cx="121" cy="141.1" r="74.15" fill="none" stroke="#2a2a2a" stroke-width="1.2" stroke-dasharray="1 1.2"/><circle cx="121" cy="141.1" r="76.95" fill="none" stroke="#333" stroke-width="0.7"/><circle cx="121" cy="141.1" r="75.65" fill="none" stroke="#e8e8e8" stroke-width="0.8" stroke-dasharray="0.8 1.2"/><circle cx="121" cy="141.1" r="81.60" fill="none" stroke="#a2a2a2" stroke-width="4.3"/><circle cx="121" cy="141.1" r="80.70" fill="none" stroke="#2a2a2a" stroke-width="1.2" stroke-dasharray="1 1.2"/><circle cx="121" cy="141.1" r="83.50" fill="none" stroke="#333" stroke-width="0.7"/><circle cx="121" cy="141.1" r="82.20" fill="none" stroke="#e8e8e8" stroke-width="0.8" stroke-dasharray="0.8 1.2"/><circle cx="121" cy="141.1" r="88.15" fill="none" stroke="#a2a2a2" stroke-width="4.3"/><circle cx="121" cy="141.1" r="87.25" fill="none" stroke="#2a2a2a" stroke-width="1.2" stroke-dasharray="1 1.2"/><circle cx="121" cy="141.1" r="90.05" fill="none" stroke="#333" stroke-width="0.7"/><circle cx="121" cy="141.1" r="88.75" fill="none" stroke="#e8e8e8" stroke-width="0.8" stroke-dasharray="0.8 1.2"/><circle cx="121" cy="141.1" r="94.70" fill="none" stroke="#a2a2a2" stroke-width="4.3"/><circle cx="121" cy="141.1" r="93.80" fill="none" stroke="#2a2a2a" stroke-width="1.2" stroke-dasharray="1 1.2"/><circle cx="121" cy="141.1" r="96.60" fill="none" stroke="#333" stroke-width="0.7"/><circle cx="121" cy="141.1" r="95.30" fill="none" stroke="#e8e8e8" stroke-width="0.8" stroke-dasharray="0.8 1.2"/><circle cx="121" cy="141.1" r="101.25" fill="none" stroke="#a2a2a2" stroke-width="4.3"/><circle cx="121" cy="141.1" r="100.35" fill="none" stroke="#2a2a2a" stroke-width="1.2" stroke-dasharray="1 1.2"/><circle cx="121" cy="141.1" r="103.15" fill="none" stroke="#333" stroke-width="0.7"/><circle cx="121" cy="141.1" r="101.85" fill="none" stroke="#e8e8e8" stroke-width="0.8" stroke-dasharray="0.8 1.2"/><circle cx="121" cy="141.1" r="107.80" fill="none" stroke="#a2a2a2" stroke-width="4.3"/><circle cx="121" cy="141.1" r="106.90" fill="none" stroke="#2a2a2a" stroke-width="1.2" stroke-dasharray="1 1.2"/><circle cx="121" cy="141.1" r="109.70" fill="none" stroke="#333" stroke-width="0.7"/><circle cx="121" cy="141.1" r="108.40" fill="none" stroke="#e8e8e8" stroke-width="0.8" stroke-dasharray="0.8 1.2"/><circle cx="121" cy="141.1" r="114.35" fill="none" stroke="#a2a2a2" stroke-width="4.3"/><circle cx="121" cy="141.1" r="113.45" fill="none" stroke="#2a2a2a" stroke-width="1.2" stroke-dasharray="1 1.2"/><circle cx="121" cy="141.1" r="116.25" fill="none" stroke="#333" stroke-width="0.7"/><circle cx="121" cy="141.1" r="114.95" fill="none" stroke="#e8e8e8" stroke-width="0.8" stroke-dasharray="0.8 1.2"/><circle cx="121" cy="141.1" r="120.90" fill="none" stroke="#a2a2a2" stroke-width="4.3"/><circle cx="121" cy="141.1" r="120.00" fill="none" stroke="#2a2a2a" stroke-width="1.2" stroke-dasharray="1 1.2"/><circle cx="121" cy="141.1" r="122.80" fill="none" stroke="#333" stroke-width="0.7"/><circle cx="121" cy="141.1" r="121.50" fill="none" stroke="#e8e8e8" stroke-width="0.8" stroke-dasharray="0.8 1.2"/><circle cx="121" cy="141.1" r="127.45" fill="none" stroke="#a2a2a2" stroke-width="4.3"/><circle cx="121" cy="141.1" r="126.55" fill="none" stroke="#2a2a2a" stroke-width="1.2" stroke-dasharray="1 1.2"/><circle cx="121" cy="141.1" r="129.35" fill="none" stroke="#333" stroke-width="0.7"/><circle cx="121" cy="141.1" r="128.05" fill="none" stroke="#e8e8e8" stroke-width="0.8" stroke-dasharray="0.8 1.2"/><circle cx="121" cy="141.1" r="134.00" fill="none" stroke="#a2a2a2" stroke-width="4.3"/><circle cx="121" cy="141.1" r="133.10" fill="none" stroke="#2a2a2a" stroke-width="1.2" stroke-dasharray="1 1.2"/><circle cx="121" cy="141.1" r="135.90" fill="none" stroke="#333" stroke-width="0.7"/><circle cx="121" cy="141.1" r="134.60" fill="none" stroke="#e8e8e8" stroke-width="0.8" stroke-dasharray="0.8 1.2"/><circle cx="121" cy="141.1" r="140.55" fill="none" stroke="#a2a2a2" stroke-width="4.3"/><circle cx="121" cy="141.1" r="139.65" fill="none" stroke="#2a2a2a" stroke-width="1.2" stroke-dasharray="1 1.2"/><circle cx="121" cy="141.1" r="142.45" fill="none" stroke="#333" stroke-width="0.7"/><circle cx="121" cy="141.1" r="141.15" fill="none" stroke="#e8e8e8" stroke-width="0.8" stroke-dasharray="0.8 1.2"/><circle cx="121" cy="141.1" r="147.10" fill="none" stroke="#a2a2a2" stroke-width="4.3"/><circle cx="121" cy="141.1" r="146.20" fill="none" stroke="#2a2a2a" stroke-width="1.2" stroke-dasharray="1 1.2"/><circle cx="121" cy="141.1" r="149.00" fill="none" stroke="#333" stroke-width="0.7"/><circle cx="121" cy="141.1" r="147.70" fill="none" stroke="#e8e8e8" stroke-width="0.8" stroke-dasharray="0.8 1.2"/><circle cx="121" cy="141.1" r="153.65" fill="none" stroke="#a2a2a2" stroke-width="4.3"/><circle cx="121" cy="141.1" r="152.75" fill="none" stroke="#2a2a2a" stroke-width="1.2" stroke-dasharray="1 1.2"/><circle cx="121" cy="141.1" r="155.55" fill="none" stroke="#333" stroke-width="0.7"/><circle cx="121" cy="141.1" r="154.25" fill="none" stroke="#e8e8e8" stroke-width="0.8" stroke-dasharray="0.8 1.2"/><circle cx="121" cy="141.1" r="160.20" fill="none" stroke="#a2a2a2" stroke-width="4.3"/><circle cx="121" cy="141.1" r="159.30" fill="none" stroke="#2a2a2a" stroke-width="1.2" stroke-dasharray="1 1.2"/><circle cx="121" cy="141.1" r="162.10" fill="none" stroke="#333" stroke-width="0.7"/><circle cx="121" cy="141.1" r="160.80" fill="none" stroke="#e8e8e8" stroke-width="0.8" stroke-dasharray="0.8 1.2"/><circle cx="121" cy="141.1" r="166.75" fill="none" stroke="#a2a2a2" stroke-width="4.3"/><circle cx="121" cy="141.1" r="165.85" fill="none" stroke="#2a2a2a" stroke-width="1.2" stroke-dasharray="1 1.2"/><circle cx="121" cy="141.1" r="168.65" fill="none" stroke="#333" stroke-width="0.7"/><circle cx="121" cy="141.1" r="167.35" fill="none" stroke="#e8e8e8" stroke-width="0.8" stroke-dasharray="0.8 1.2"/><circle cx="121" cy="141.1" r="173.30" fill="none" stroke="#a2a2a2" stroke-width="4.3"/><circle cx="121" cy="141.1" r="172.40" fill="none" stroke="#2a2a2a" stroke-width="1.2" stroke-dasharray="1 1.2"/><circle cx="121" cy="141.1" r="175.20" fill="none" stroke="#333" stroke-width="0.7"/><circle cx="121" cy="141.1" r="173.90" fill="none" stroke="#e8e8e8" stroke-width="0.8" stroke-dasharray="0.8 1.2"/><circle cx="121" cy="141.1" r="179.85" fill="none" stroke="#a2a2a2" stroke-width="4.3"/><circle cx="121" cy="141.1" r="178.95" fill="none" stroke="#2a2a2a" stroke-width="1.2" stroke-dasharray="1 1.2"/><circle cx="121" cy="141.1" r="181.75" fill="none" stroke="#333" stroke-width="0.7"/><circle cx="121" cy="141.1" r="180.45" fill="none" stroke="#e8e8e8" stroke-width="0.8" stroke-dasharray="0.8 1.2"/></g><rect x="201" y="6.8" width="26" height="10" fill="#fff" fill-opacity="0.8"/><circle cx="209" cy="10" r="0.9" fill="#e00"/><circle cx="209" cy="13.8" r="0.9" fill="#0a0"/><rect x="212" y="9.3" width="10" height="1.2" fill="#999"/><rect x="212" y="13" width="10" height="1.2" fill="#999"/><circle cx="224.5" cy="72.5" r="0.9" fill="#0a0"/><circle cx="194.5" cy="140.5" r="1" fill="#e00"/><text x="174.5" y="5" font-size="3.5" text-anchor="middle" fill="#333" font-family="Liberation Sans">Contour Plot of Elevation Data with Points A and B</text><rect x="120.5" y="143.3" width="1.6" height="1.2" fill="#777"/><rect x="133.2" y="143.3" width="1.6" height="1.2" fill="#777"/><rect x="145.9" y="143.3" width="1.6" height="1.2" fill="#777"/><rect x="158.6" y="143.3" width="1.6" height="1.2" fill="#777"/><rect x="171.3" y="143.3" width="1.6" height="1.2" fill="#777"/><rect x="184.0" y="143.3" width="1.6" height="1.2" fill="#777"/><rect x="196.7" y="143.3" width="1.6" height="1.2" fill="#777"/><rect x="209.4" y="143.3" width="1.6" height="1.2" fill="#777"/><rect x="222.1" y="143.3" width="1.6" height="1.2" fill="#777"/><rect x="116.5" y="140.5" width="2" height="1.2" fill="#777"/><rect x="116.5" y="117.5" width="2" height="1.2" fill="#777"/><rect x="116.5" y="94.5" width="2" height="1.2" fill="#777"/><rect x="116.5" y="71.5" width="2" height="1.2" fill="#777"/><rect x="116.5" y="48.5" width="2" height="1.2" fill="#777"/><rect x="116.5" y="25.5" width="2" height="1.2" fill="#777"/><rect x="170" y="147.5" width="9" height="1.3" fill="#888"/></svg>
<div class="a" style="left:912px;top:707px;width:366px;height:26px;background:#19232d"></div>
<div class="a" style="left:938px;top:709px;width:44px;height:23px;background:#455364;border-radius:0 0 4px 4px"></div>
<div class="a" style="left:984px;top:709px;width:161px;height:23px;background:#455364;border-radius:0 0 4px 4px"></div>
<div class="a" style="left:1147px;top:709px;width:52px;height:23px;background:#54687a;border-radius:0 0 4px 4px"></div>
<div class="a" style="left:1147px;top:708px;width:52px;height:3px;background:#259ae9"></div>
<div class="a" style="left:1202px;top:709px;width:52px;height:23px;background:#455364;border-radius:0 0 4px 4px"></div>
<div class="a ser" style="left:942px;top:712px;">Help</div>
<div class="a ser" style="left:988px;top:712px;">Variable Explorer</div>
<div class="a ser" style="left:1151px;top:712px;">Plots</div>
<div class="a ser" style="left:1206px;top:712px;">Files</div>
<div class="a" style="left:912px;top:734px;width:366px;height:7px;background:#455364"></div>
<div class="a" style="left:925.5px;top:756px;width:19.5px;height:16px;border:2px solid #fafafa;border-top-width:4px;border-radius:1.5px"></div>
<div class="a" style="left:962px;top:755px;width:141px;height:34px;background:#54687a;border-radius:4px 4px 0 0"></div>
<div class="a" style="left:962px;top:786px;width:141px;height:3px;background:#259ae9"></div>
<div class="a ser" style="left:971px;top:762.5px;">Console 1/A</div>
<svg style="left:1078px;top:763px" width="16" height="16" viewBox="0 0 16 16"><path d="M1.5 1.5 L14.5 14.5 M14.5 1.5 L1.5 14.5" stroke="#fafafa" stroke-width="2"/></svg>
<svg style="left:1145px;top:756px" width="14" height="16" viewBox="0 0 14 16"><path d="M4.5 6 H12 L11.6 15 Q11.5 15.7 10.8 15.7 H5.5 Q4.8 15.7 4.7 15Z" fill="#9a9a9a"/><path d="M1.5 3 H10.5 L10 13.5 Q9.9 14.5 9 14.5 H3 Q2.1 14.5 2 13.5Z" fill="#f2f2f2"/><rect x="0.8" y="1.6" width="10.5" height="1.4" rx="0.5" fill="#f2f2f2"/><rect x="4" y="0.6" width="4.5" height="1.3" rx="0.5" fill="#f2f2f2"/></svg>
<div class="a" style="left:1200.3px;top:760px;width:7.4px;height:7.2px;background:#7d7d7d"></div>
<div class="a" style="left:1250.6px;top:759.9px;width:11px;height:1.4px;background:#fafafa;border-radius:0.7px"></div>
<div class="a" style="left:1250.6px;top:762.9px;width:11px;height:1.4px;background:#fafafa;border-radius:0.7px"></div>
<div class="a" style="left:1250.6px;top:765.9px;width:11px;height:1.4px;background:#fafafa;border-radius:0.7px"></div>
<div class="a" style="left:914px;top:790px;width:362px;height:518px;border:1px solid #3d4a58;border-radius:4px;background:#19232d"></div>
<svg style="left:1257px;top:796px" width="14" height="8"><path d="M2 7 L7 2 L12 7Z" fill="#5f6f80"/></svg>
<div class="a" style="left:1259px;top:808px;width:11px;height:485px;border:1px solid #455364;border-radius:5px"></div>
<div class="a" style="left:1260px;top:1258px;width:9px;height:18px;background:#60798b;border-radius:4px"></div>
<svg style="left:1257px;top:1293px" width="14" height="8"><path d="M2 1 L7 6 L12 1Z" fill="#5f6f80"/></svg>
<div class="code" style="left:922px;top:792.5px"><span style="color:#00ff00;font-weight:bold;-webkit-text-stroke:0">In [</span><span style="color:#00ff00;font-weight:bold;-webkit-text-stroke:0">14</span><span style="color:#00ff00;font-weight:bold;-webkit-text-stroke:0">]: </span><span style="color:#ffffff">runfile(</span><span style="color:#ffffff">'</span><span style="color:#b0e686;font-style:italic">D:/<span class="cj" style="width:20px">坤</span>/</span></div>
<div class="code" style="left:922px;top:818.5px"><span style="color:#b0e686;font-style:italic">Python/untitled1.py</span><span style="color:#ffffff">',</span></div>
<div class="code" style="left:922px;top:843.2px"><span style="color:#ffffff">wdir=</span><span style="color:#ffffff">'</span><span style="color:#b0e686;font-style:italic">D:/<span class="cj" style="width:20px">坤</span>/Python</span><span style="color:#ffffff">')</span></div>
<div class="code" style="left:922px;top:869.7px"><span style="color:#e8e8e8"><span class="cj" style="width:20px">最</span><span class="cj" style="width:20px">小</span><span class="cj" style="width:20px">二</span><span class="cj" style="width:20px">乘</span><span class="cj" style="width:20px">解</span><span class="cj" style="width:20px">：</span></span></div>
<div class="code" style="left:922px;top:897.0px"><span style="color:#ffffff">x1 = -0.17277867902432983</span></div>
<div class="code" style="left:922px;top:920.7px"><span style="color:#ffffff">x2 = -0.4694091689677694</span></div>
<div class="code" style="left:922px;top:945.1px"><span style="color:#ffffff">y1 = 0.4295234103214404</span></div>
<div class="code" style="left:922px;top:968.7px"><span style="color:#ffffff">y2 = -0.2639613633185106</span></div>
<div class="code" style="left:922px;top:995.1px"><span style="color:#e8e8e8"><span class="cj" style="width:20px">残</span><span class="cj" style="width:20px">差</span><span class="cj" style="width:20px">平</span><span class="cj" style="width:20px">方</span><span class="cj" style="width:20px">和</span><span class="cj" style="width:20px">：</span></span></div>
<div class="code" style="left:922px;top:1020.5px"><span style="color:#ffffff">0.19072492658048984</span></div>
<div class="code" style="left:922px;top:1047.2px"><span style="color:#e8e8e8"><span class="cj" style="width:20px">学</span><span class="cj" style="width:20px">号</span><span class="cj" style="width:20px">：</span></span><span style="color:#ffffff">3025</span></div>
<div class="code" style="left:922px;top:1098.2px"><span style="color:#00ff00;font-weight:bold;-webkit-text-stroke:0">In [</span><span style="color:#00ff00;font-weight:bold;-webkit-text-stroke:0">15</span><span style="color:#00ff00;font-weight:bold;-webkit-text-stroke:0">]:</span></div>
<div class="a" style="left:988px;top:1309px;width:143px;height:25px;background:#54687a;border-radius:0 0 4px 4px"></div>
<div class="a" style="left:988px;top:1309px;width:143px;height:3px;background:#259ae9"></div>
<div class="a" style="left:1133px;top:1311px;width:71px;height:23px;background:#455364;border-radius:0 0 4px 4px"></div>
<div class="a ser" style="left:992px;top:1314px;">IPython Console</div>
<div class="a ser" style="left:1136px;top:1314px;">History</div>
<div class="a" style="left:2px;top:1336px;width:1276px;height:30px;background:#455364"></div>
<div class="a ser" style="left:321px;top:1342px;">conda (Python 3.11.5)</div>
<svg style="left:527px;top:1345px" width="14" height="12" viewBox="0 0 14 12"><path d="M1 4 L4.5 1 L8 4 M4 8 L7 11 L12.5 5" fill="none" stroke="#e0e1e3" stroke-width="1.3"/></svg>
<div class="a ser" style="left:549px;top:1342px;">Completions: conda</div>
<svg style="left:729px;top:1345px" width="14" height="12" viewBox="0 0 14 12"><path d="M1.5 6 L5 9.5 L12 2" fill="none" stroke="#e0e1e3" stroke-width="1.4"/></svg>
<div class="a ser" style="left:751px;top:1342px;">LSP: Python</div>
<div class="a ser" style="left:868px;top:1342px;">Line 40, Col 15</div>
<div class="a ser" style="left:1022px;top:1342px;">UTF-8</div>
<div class="a ser" style="left:1086px;top:1342px;">CRLF</div>
<div class="a ser" style="left:1141px;top:1342px;">RW</div>
<div class="a ser" style="left:1186px;top:1342px;">Mem 42%</div>
<svg style="left:1266px;top:1354px" width="12" height="12" viewBox="0 0 12 12"><path d="M11 1 L1 11 M11 5 L5 11 M11 9 L9 11" stroke="#cfd4d9" stroke-width="1"/></svg>
</body></html>
